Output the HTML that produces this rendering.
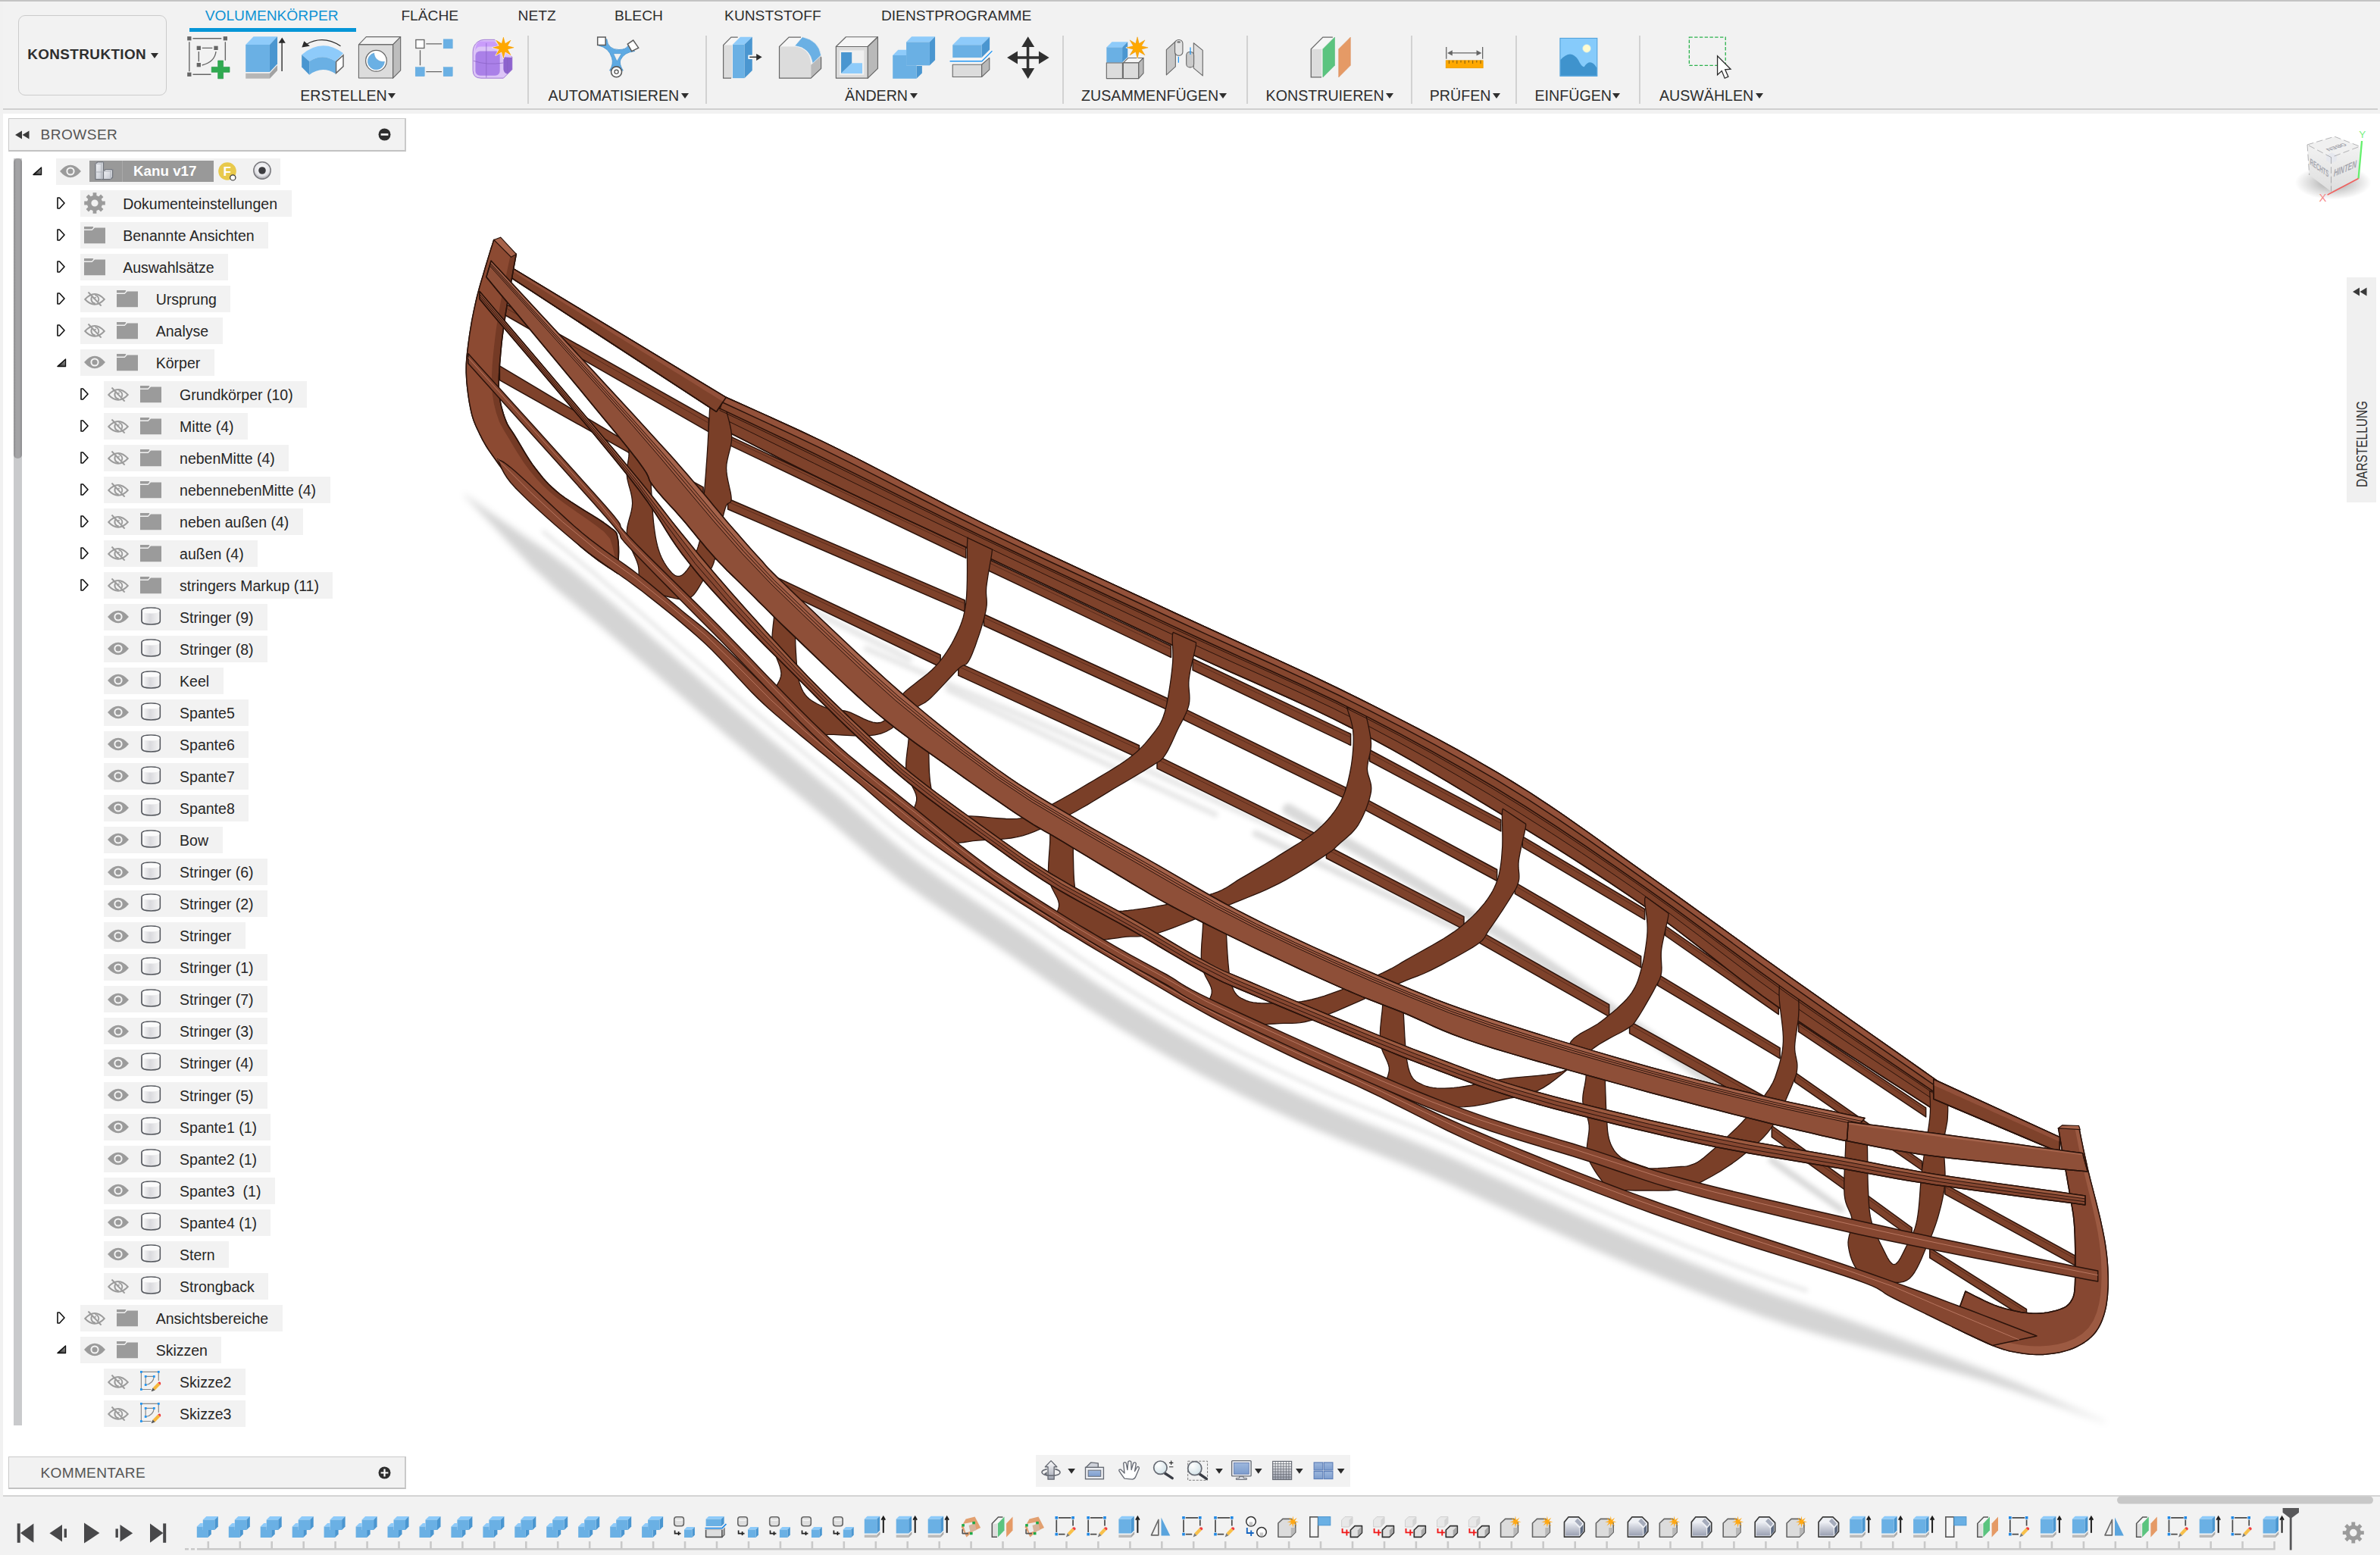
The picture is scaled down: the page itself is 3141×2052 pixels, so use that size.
<!DOCTYPE html><html lang="de"><head><meta charset="utf-8"><title>Kanu v17</title><style>

*{box-sizing:border-box;margin:0;padding:0}
html,body{width:3141px;height:2052px;overflow:hidden;background:#fff}
body{font-family:"Liberation Sans",Arial,sans-serif;font-size:19.1px;color:#2e2e2e;position:relative}
.abs{position:absolute}
svg{position:absolute;overflow:visible}
svg text{font-family:"Liberation Sans",Arial,sans-serif}
#tb{position:absolute;left:0;top:0;width:3141px;height:150px;background:#f2f2f2}
#tb .line{position:absolute;left:4px;right:3px;top:143px;height:2px;background:#cfcfcf}
#tb .topline{position:absolute;left:0;right:0;top:0;height:1.5px;background:#c4c4c4}
.tab{position:absolute;top:9px;height:24px;line-height:24px;font-size:19.2px;color:#2e2e2e;white-space:nowrap}
.grp{position:absolute;top:114px;height:24px;line-height:24px;font-size:19.65px;color:#2e2e2e;white-space:nowrap}
.dd{position:absolute;width:0;height:0;border-left:5px solid transparent;border-right:5px solid transparent;border-top:7px solid #2e2e2e}
.sep{position:absolute;top:47px;width:2px;height:90px;background:#d2d2d2}
.panelhdr{position:absolute;background:#f2f2f2;border:1px solid #c9c9c9;border-bottom:2px solid #c2c2c2;border-right:2px solid #c9c9c9;color:#555;font-size:19.1px}
.row{position:absolute;height:35px;background:#f2f2f2;white-space:nowrap}
.row .t{position:absolute;top:0;height:35px;line-height:36px;font-size:19.5px;color:#262626}
#tl{position:absolute;left:0;top:1974px;width:3141px;height:78px;background:#f2f2f2}

</style></head><body>
<svg id="canoe" style="left:0;top:0;width:3141px;height:2052px" viewBox="0 0 3141 2052"><defs><filter id="blur6" x="-5%" y="-5%" width="110%" height="110%"><feGaussianBlur stdDeviation="5"/></filter><filter id="blur3" x="-5%" y="-5%" width="110%" height="110%"><feGaussianBlur stdDeviation="3"/></filter></defs><g filter="url(#blur6)"><path d="M612.3,651.6 L646.8,676.0 L681.7,699.9 L716.9,723.6 L751.4,748.4 L784.3,775.5 L816.8,803.1 L849.1,831.0 L881.3,859.0 L913.5,887.0 L945.7,915.0 L978.0,942.8 L1010.6,970.3 L1043.5,997.6 L1076.4,1024.7 L1109.3,1051.8 L1141.6,1079.7 L1173.9,1107.6 L1207.2,1134.2 L1241.9,1159.1 L1277.3,1182.8 L1312.9,1206.3 L1348.4,1230.0 L1383.5,1254.2 L1418.6,1278.4 L1454.0,1302.2 L1490.0,1325.1 L1526.6,1347.1 L1563.6,1368.3 L1601.1,1388.7 L1639.0,1408.3 L1677.3,1427.0 L1716.0,1444.9 L1755.1,1462.2 L1794.5,1478.4 L1834.2,1494.0 L1873.9,1509.7 L1913.2,1526.3 L1952.1,1543.9 L1990.9,1561.5 L2029.7,1579.2 L2068.6,1596.8 L2107.6,1614.1 L2146.7,1631.0 L2186.1,1647.5 L2225.5,1663.7 L2265.2,1679.5 L2305.0,1694.8 L2345.1,1709.2 L2385.6,1722.8 L2425.8,1736.4 L2465.5,1750.7 L2505.2,1765.1 L2544.8,1779.8 L2584.3,1794.4 L2623.8,1809.6 L2662.9,1825.6 L2701.7,1842.5 L2740.4,1859.7 L2779.3,1876.6 L2778.7,1877.4 L2738.4,1862.7 L2697.7,1848.5 L2656.9,1834.6 L2615.9,1821.5 L2574.4,1809.4 L2532.9,1797.7 L2491.3,1786.1 L2449.7,1774.6 L2408.0,1763.3 L2366.9,1751.0 L2326.4,1737.5 L2286.3,1723.0 L2246.5,1707.7 L2206.8,1692.0 L2167.4,1675.8 L2128.0,1659.2 L2088.9,1642.3 L2049.9,1625.0 L2011.0,1607.4 L1972.2,1589.7 L1933.4,1572.1 L1894.5,1554.5 L1855.2,1537.9 L1815.5,1522.2 L1775.8,1506.7 L1736.4,1490.4 L1697.3,1473.2 L1658.6,1455.2 L1620.3,1436.5 L1582.4,1416.9 L1544.9,1396.5 L1507.9,1375.3 L1471.3,1353.3 L1435.3,1330.5 L1399.9,1306.7 L1364.8,1282.4 L1329.7,1258.2 L1294.2,1234.5 L1258.6,1211.1 L1223.2,1187.3 L1188.5,1162.5 L1155.2,1135.8 L1122.9,1107.9 L1090.6,1080.1 L1057.7,1052.9 L1024.8,1025.8 L991.9,998.5 L959.3,971.0 L927.0,943.2 L894.8,915.2 L862.6,887.2 L830.4,859.2 L798.1,831.3 L765.6,803.7 L732.7,776.6 L701.1,747.5 L671.2,715.9 L641.6,684.0 L611.7,652.4Z" fill="#000" fill-opacity=".17"/></g><g filter="url(#blur3)" fill="none" stroke="#000" stroke-linecap="round"><path d="M717.0,701.5 L750.0,728.5 L783.0,755.6 L815.5,783.2 L847.8,811.1 L879.9,839.1 L912.1,867.1 L944.3,895.1 L976.7,922.9 L1009.3,950.4 L1042.1,977.7 L1075.1,1004.8 L1107.9,1031.9 L1140.3,1059.8 L1172.5,1087.7 L1205.8,1114.3 L1240.5,1139.2 L1275.9,1162.9 L1311.6,1186.4 L1347.0,1210.1 L1382.2,1234.3 L1417.3,1258.5 L1452.7,1282.4 L1488.7,1305.2 L1525.3,1327.2 L1562.3,1348.4 L1599.8,1368.8 L1637.6,1388.4 L1676.0,1407.1 L1714.7,1425.0 L1753.7,1442.3 L1793.1,1458.5 L1832.9,1474.1 L1872.5,1489.8 L1911.8,1506.4 L1950.7,1524.0 L1989.6,1541.6 L2028.4,1559.3 L2067.2,1576.9 L2106.2,1594.2 L2145.4,1611.1 L2184.7,1627.6 L2224.2,1643.9 L2263.8,1659.6 L2303.7,1674.9 L2343.8,1689.3 L2384.2,1702.9" stroke-opacity=".12" stroke-width="4"/><path d="M1700.0,1068.0 L1723.2,1081.5 L1754.1,1099.1 L1791.0,1120.2 L1831.9,1143.7 L1875.0,1168.8 L1918.7,1194.6 L1960.9,1220.3 L2000.0,1245.0 L2038.7,1270.7 L2080.0,1299.1 L2122.2,1328.8 L2163.8,1358.6 L2202.9,1386.9 L2238.1,1412.5 L2267.7,1434.0 L2290.0,1450.0" stroke-opacity="0.15" stroke-width="15"/><path d="M1657.0,1100.0 L1674.2,1108.1 L1697.7,1119.1 L1725.7,1132.3 L1756.5,1146.8 L1788.3,1161.7 L1819.3,1176.3 L1847.8,1189.6 L1872.0,1201.0 L1893.0,1210.9 L1913.1,1220.3 L1932.0,1229.1 L1949.4,1237.3 L1965.2,1244.7 L1979.0,1251.2 L1990.7,1256.7 L2000.0,1261.0" stroke-opacity="0.12" stroke-width="9"/><path d="M1143.0,856.0 L1168.9,867.1 L1204.0,882.2 L1245.9,900.2 L1292.1,920.1 L1340.1,940.7 L1387.4,961.1 L1431.5,980.2 L1470.0,997.0 L1505.0,1012.4 L1539.7,1027.8 L1573.5,1042.9 L1605.4,1057.3 L1634.9,1070.6 L1660.9,1082.4 L1682.9,1092.3 L1700.0,1100.0" stroke-opacity="0.1" stroke-width="7"/><path d="M1251.0,910.0 L1265.4,916.8 L1284.6,925.8 L1307.6,936.6 L1333.0,948.6 L1359.7,961.2 L1386.6,973.8 L1412.4,986.0 L1436.0,997.0 L1459.0,1007.7 L1483.1,1019.0 L1507.6,1030.3 L1531.6,1041.4 L1554.1,1051.9 L1574.2,1061.2 L1591.2,1069.0 L1604.0,1075.0" stroke-opacity="0.1" stroke-width="7"/><path d="M2338.0,1531.0 L2430.0,1596.0" stroke-opacity="0.15" stroke-width="9"/><path d="M1060.0,800.0 L1200.0,870.0" stroke-opacity="0.1" stroke-width="7"/></g><path d="M963.2,575.6 L1274.8,721.4 L1274.8,736.4 L963.2,587.6Z" fill="#7e422b" stroke="#2b130b" stroke-width="1.5" stroke-linejoin="round"/><path d="M963.2,579.2 L971.2,583.0 L979.1,586.7 L987.1,590.5 L995.1,594.3 L1003.1,598.0 L1011.1,601.8 L1019.1,605.5 L1027.1,609.3 L1035.1,613.1 L1043.1,616.8 L1051.1,620.6 L1059.1,624.3 L1067.1,628.1 L1075.0,631.9 L1083.0,635.6 L1091.0,639.4 L1099.0,643.1 L1107.0,646.9 L1115.0,650.7 L1123.0,654.4 L1131.0,658.2 L1139.0,662.0 L1147.0,665.7 L1155.0,669.5 L1163.0,673.2 L1171.0,677.0 L1178.9,680.8 L1186.9,684.5 L1194.9,688.3 L1202.9,692.0 L1210.9,695.8 L1218.9,699.6 L1226.9,703.3 L1234.9,707.1 L1242.9,710.9 L1250.9,714.6 L1258.9,718.4 L1266.9,722.1 L1274.8,725.9" fill="none" stroke="#5a2c1c" stroke-width="1"/><path d="M1305.1,738.2 L1545.5,852.5 L1545.5,867.5 L1305.1,753.2Z" fill="#7e422b" stroke="#2b130b" stroke-width="1.5" stroke-linejoin="round"/><path d="M1305.1,742.7 L1311.3,745.6 L1317.4,748.6 L1323.6,751.5 L1329.8,754.4 L1335.9,757.4 L1342.1,760.3 L1348.3,763.2 L1354.4,766.2 L1360.6,769.1 L1366.8,772.0 L1372.9,775.0 L1379.1,777.9 L1385.2,780.8 L1391.4,783.8 L1397.6,786.7 L1403.7,789.6 L1409.9,792.5 L1416.1,795.5 L1422.2,798.4 L1428.4,801.3 L1434.6,804.3 L1440.7,807.2 L1446.9,810.1 L1453.1,813.1 L1459.2,816.0 L1465.4,818.9 L1471.6,821.9 L1477.7,824.8 L1483.9,827.7 L1490.0,830.7 L1496.2,833.6 L1502.4,836.5 L1508.5,839.4 L1514.7,842.4 L1520.9,845.3 L1527.0,848.2 L1533.2,851.2 L1539.4,854.1 L1545.5,857.0" fill="none" stroke="#5a2c1c" stroke-width="1"/><path d="M1574.1,869.3 L1782.6,968.5 L1782.6,983.5 L1574.1,884.3Z" fill="#7e422b" stroke="#2b130b" stroke-width="1.5" stroke-linejoin="round"/><path d="M1574.1,873.8 L1579.5,876.4 L1584.8,878.9 L1590.1,881.5 L1595.5,884.0 L1600.8,886.6 L1606.2,889.1 L1611.5,891.7 L1616.9,894.2 L1622.2,896.7 L1627.6,899.3 L1632.9,901.8 L1638.3,904.4 L1643.6,906.9 L1648.9,909.5 L1654.3,912.0 L1659.6,914.5 L1665.0,917.1 L1670.3,919.6 L1675.7,922.2 L1681.0,924.7 L1686.4,927.3 L1691.7,929.8 L1697.1,932.3 L1702.4,934.9 L1707.7,937.4 L1713.1,940.0 L1718.4,942.5 L1723.8,945.1 L1729.1,947.6 L1734.5,950.1 L1739.8,952.7 L1745.2,955.2 L1750.5,957.8 L1755.9,960.3 L1761.2,962.9 L1766.5,965.4 L1771.9,968.0 L1777.2,970.5 L1782.6,973.0" fill="none" stroke="#5a2c1c" stroke-width="1"/><path d="M1807.6,989.5 L1980.8,1081.9 L1980.8,1096.9 L1807.6,1004.5Z" fill="#7e422b" stroke="#2b130b" stroke-width="1.5" stroke-linejoin="round"/><path d="M1807.6,994.0 L1812.0,996.3 L1816.5,998.7 L1820.9,1001.1 L1825.4,1003.4 L1829.8,1005.8 L1834.2,1008.2 L1838.7,1010.6 L1843.1,1012.9 L1847.6,1015.3 L1852.0,1017.7 L1856.4,1020.0 L1860.9,1022.4 L1865.3,1024.8 L1869.8,1027.1 L1874.2,1029.5 L1878.6,1031.9 L1883.1,1034.3 L1887.5,1036.6 L1892.0,1039.0 L1896.4,1041.4 L1900.8,1043.7 L1905.3,1046.1 L1909.7,1048.5 L1914.2,1050.9 L1918.6,1053.2 L1923.0,1055.6 L1927.5,1058.0 L1931.9,1060.3 L1936.4,1062.7 L1940.8,1065.1 L1945.2,1067.5 L1949.7,1069.8 L1954.1,1072.2 L1958.6,1074.6 L1963.0,1076.9 L1967.4,1079.3 L1971.9,1081.7 L1976.3,1084.1 L1980.8,1086.4" fill="none" stroke="#5a2c1c" stroke-width="1"/><path d="M2009.3,1103.8 L2170.7,1199.6 L2170.7,1213.6 L2009.3,1117.8Z" fill="#7e422b" stroke="#2b130b" stroke-width="1.5" stroke-linejoin="round"/><path d="M2009.3,1108.0 L2013.5,1110.4 L2017.6,1112.9 L2021.8,1115.4 L2025.9,1117.8 L2030.0,1120.3 L2034.2,1122.7 L2038.3,1125.2 L2042.5,1127.6 L2046.6,1130.1 L2050.7,1132.6 L2054.9,1135.0 L2059.0,1137.5 L2063.1,1139.9 L2067.3,1142.4 L2071.4,1144.8 L2075.6,1147.3 L2079.7,1149.8 L2083.8,1152.2 L2088.0,1154.7 L2092.1,1157.1 L2096.3,1159.6 L2100.4,1162.0 L2104.5,1164.5 L2108.7,1167.0 L2112.8,1169.4 L2116.9,1171.9 L2121.1,1174.3 L2125.2,1176.8 L2129.4,1179.2 L2133.5,1181.7 L2137.6,1184.2 L2141.8,1186.6 L2145.9,1189.1 L2150.1,1191.5 L2154.2,1194.0 L2158.3,1196.4 L2162.5,1198.9 L2166.6,1201.4 L2170.7,1203.8" fill="none" stroke="#5a2c1c" stroke-width="1"/><path d="M2197.6,1221.5 L2347.3,1325.7 L2347.3,1338.7 L2197.6,1234.5Z" fill="#7e422b" stroke="#2b130b" stroke-width="1.5" stroke-linejoin="round"/><path d="M2197.6,1225.4 L2201.5,1228.0 L2205.3,1230.7 L2209.2,1233.4 L2213.0,1236.1 L2216.8,1238.7 L2220.7,1241.4 L2224.5,1244.1 L2228.3,1246.7 L2232.2,1249.4 L2236.0,1252.1 L2239.8,1254.8 L2243.7,1257.4 L2247.5,1260.1 L2251.4,1262.8 L2255.2,1265.5 L2259.0,1268.1 L2262.9,1270.8 L2266.7,1273.5 L2270.5,1276.1 L2274.4,1278.8 L2278.2,1281.5 L2282.1,1284.2 L2285.9,1286.8 L2289.7,1289.5 L2293.6,1292.2 L2297.4,1294.9 L2301.2,1297.5 L2305.1,1300.2 L2308.9,1302.9 L2312.7,1305.5 L2316.6,1308.2 L2320.4,1310.9 L2324.3,1313.6 L2328.1,1316.2 L2331.9,1318.9 L2335.8,1321.6 L2339.6,1324.3 L2343.4,1326.9 L2347.3,1329.6" fill="none" stroke="#5a2c1c" stroke-width="1"/><path d="M2373.6,1349.3 L2541.7,1461.9 L2541.7,1473.9 L2373.6,1361.3Z" fill="#7e422b" stroke="#2b130b" stroke-width="1.5" stroke-linejoin="round"/><path d="M2373.6,1352.9 L2377.9,1355.8 L2382.2,1358.7 L2386.5,1361.5 L2390.8,1364.4 L2395.2,1367.3 L2399.5,1370.2 L2403.8,1373.1 L2408.1,1376.0 L2412.4,1378.9 L2416.7,1381.8 L2421.0,1384.7 L2425.3,1387.5 L2429.6,1390.4 L2434.0,1393.3 L2438.3,1396.2 L2442.6,1399.1 L2446.9,1402.0 L2451.2,1404.9 L2455.5,1407.8 L2459.8,1410.6 L2464.1,1413.5 L2468.4,1416.4 L2472.8,1419.3 L2477.1,1422.2 L2481.4,1425.1 L2485.7,1428.0 L2490.0,1430.9 L2494.3,1433.8 L2498.6,1436.6 L2502.9,1439.5 L2507.2,1442.4 L2511.6,1445.3 L2515.9,1448.2 L2520.2,1451.1 L2524.5,1454.0 L2528.8,1456.9 L2533.1,1459.7 L2537.4,1462.6 L2541.7,1465.5" fill="none" stroke="#5a2c1c" stroke-width="1"/><path d="M960.6,658.0 L1273.2,792.0 L1273.2,807.0 L960.6,672.0Z" fill="#7e422b" stroke="#2b130b" stroke-width="1.5" stroke-linejoin="round"/><path d="M960.6,662.2 L968.7,665.7 L976.7,669.1 L984.7,672.6 L992.7,676.0 L1000.7,679.5 L1008.7,682.9 L1016.7,686.3 L1024.7,689.8 L1032.8,693.2 L1040.8,696.7 L1048.8,700.1 L1056.8,703.6 L1064.8,707.0 L1072.8,710.4 L1080.8,713.9 L1088.9,717.3 L1096.9,720.8 L1104.9,724.2 L1112.9,727.7 L1120.9,731.1 L1128.9,734.5 L1136.9,738.0 L1145.0,741.4 L1153.0,744.9 L1161.0,748.3 L1169.0,751.8 L1177.0,755.2 L1185.0,758.6 L1193.0,762.1 L1201.0,765.5 L1209.1,769.0 L1217.1,772.4 L1225.1,775.9 L1233.1,779.3 L1241.1,782.7 L1249.1,786.2 L1257.1,789.6 L1265.2,793.1 L1273.2,796.5" fill="none" stroke="#5a2c1c" stroke-width="1"/><path d="M1298.4,810.5 L1540.5,921.5 L1540.5,936.5 L1298.4,825.5Z" fill="#7e422b" stroke="#2b130b" stroke-width="1.5" stroke-linejoin="round"/><path d="M1298.4,815.0 L1304.6,817.8 L1310.8,820.7 L1317.0,823.5 L1323.2,826.4 L1329.4,829.2 L1335.6,832.1 L1341.8,834.9 L1348.0,837.8 L1354.3,840.6 L1360.5,843.5 L1366.7,846.3 L1372.9,849.1 L1379.1,852.0 L1385.3,854.8 L1391.5,857.7 L1397.7,860.5 L1403.9,863.4 L1410.1,866.2 L1416.3,869.1 L1422.5,871.9 L1428.7,874.8 L1435.0,877.6 L1441.2,880.4 L1447.4,883.3 L1453.6,886.1 L1459.8,889.0 L1466.0,891.8 L1472.2,894.7 L1478.4,897.5 L1484.6,900.4 L1490.8,903.2 L1497.0,906.0 L1503.2,908.9 L1509.4,911.7 L1515.7,914.6 L1521.9,917.4 L1528.1,920.3 L1534.3,923.1 L1540.5,926.0" fill="none" stroke="#5a2c1c" stroke-width="1"/><path d="M1562.3,934.9 L1775.9,1039.2 L1775.9,1054.2 L1562.3,949.9Z" fill="#7e422b" stroke="#2b130b" stroke-width="1.5" stroke-linejoin="round"/><path d="M1562.3,939.4 L1567.8,942.1 L1573.3,944.8 L1578.8,947.4 L1584.2,950.1 L1589.7,952.8 L1595.2,955.5 L1600.7,958.1 L1606.1,960.8 L1611.6,963.5 L1617.1,966.1 L1622.6,968.8 L1628.0,971.5 L1633.5,974.2 L1639.0,976.8 L1644.5,979.5 L1649.9,982.2 L1655.4,984.9 L1660.9,987.5 L1666.4,990.2 L1671.8,992.9 L1677.3,995.5 L1682.8,998.2 L1688.3,1000.9 L1693.7,1003.6 L1699.2,1006.2 L1704.7,1008.9 L1710.2,1011.6 L1715.6,1014.3 L1721.1,1016.9 L1726.6,1019.6 L1732.1,1022.3 L1737.5,1024.9 L1743.0,1027.6 L1748.5,1030.3 L1754.0,1033.0 L1759.4,1035.6 L1764.9,1038.3 L1770.4,1041.0 L1775.9,1043.7" fill="none" stroke="#5a2c1c" stroke-width="1"/><path d="M1797.5,1051.7 L1975.7,1147.5 L1975.7,1162.5 L1797.5,1066.7Z" fill="#7e422b" stroke="#2b130b" stroke-width="1.5" stroke-linejoin="round"/><path d="M1797.5,1056.2 L1802.1,1058.6 L1806.7,1061.1 L1811.2,1063.5 L1815.8,1066.0 L1820.4,1068.4 L1824.9,1070.9 L1829.5,1073.4 L1834.1,1075.8 L1838.6,1078.3 L1843.2,1080.7 L1847.8,1083.2 L1852.3,1085.6 L1856.9,1088.1 L1861.5,1090.6 L1866.1,1093.0 L1870.6,1095.5 L1875.2,1097.9 L1879.8,1100.4 L1884.3,1102.8 L1888.9,1105.3 L1893.5,1107.8 L1898.0,1110.2 L1902.6,1112.7 L1907.2,1115.1 L1911.7,1117.6 L1916.3,1120.0 L1920.9,1122.5 L1925.5,1125.0 L1930.0,1127.4 L1934.6,1129.9 L1939.2,1132.3 L1943.7,1134.8 L1948.3,1137.2 L1952.9,1139.7 L1957.4,1142.2 L1962.0,1144.6 L1966.6,1147.1 L1971.2,1149.5 L1975.7,1152.0" fill="none" stroke="#5a2c1c" stroke-width="1"/><path d="M1999.3,1164.3 L2165.7,1261.8 L2165.7,1276.8 L1999.3,1179.3Z" fill="#7e422b" stroke="#2b130b" stroke-width="1.5" stroke-linejoin="round"/><path d="M1999.3,1168.8 L2003.5,1171.3 L2007.8,1173.8 L2012.1,1176.3 L2016.3,1178.8 L2020.6,1181.3 L2024.9,1183.8 L2029.1,1186.3 L2033.4,1188.8 L2037.7,1191.3 L2041.9,1193.8 L2046.2,1196.3 L2050.5,1198.8 L2054.7,1201.3 L2059.0,1203.8 L2063.3,1206.3 L2067.5,1208.8 L2071.8,1211.3 L2076.1,1213.8 L2080.3,1216.3 L2084.6,1218.8 L2088.9,1221.3 L2093.2,1223.8 L2097.4,1226.3 L2101.7,1228.8 L2106.0,1231.3 L2110.2,1233.8 L2114.5,1236.3 L2118.8,1238.8 L2123.0,1241.3 L2127.3,1243.8 L2131.6,1246.3 L2135.8,1248.8 L2140.1,1251.3 L2144.4,1253.8 L2148.6,1256.3 L2152.9,1258.8 L2157.2,1261.3 L2161.4,1263.8 L2165.7,1266.3" fill="none" stroke="#5a2c1c" stroke-width="1"/><path d="M2187.6,1285.4 L2349.1,1382.9 L2349.1,1396.9 L2187.6,1300.4Z" fill="#7e422b" stroke="#2b130b" stroke-width="1.5" stroke-linejoin="round"/><path d="M2187.6,1289.9 L2191.7,1292.3 L2195.8,1294.8 L2200.0,1297.3 L2204.1,1299.8 L2208.3,1302.3 L2212.4,1304.8 L2216.5,1307.3 L2220.7,1309.8 L2224.8,1312.3 L2229.0,1314.8 L2233.1,1317.3 L2237.3,1319.8 L2241.4,1322.3 L2245.5,1324.8 L2249.7,1327.3 L2253.8,1329.8 L2258.0,1332.2 L2262.1,1334.7 L2266.2,1337.2 L2270.4,1339.7 L2274.5,1342.2 L2278.7,1344.7 L2282.8,1347.2 L2286.9,1349.7 L2291.1,1352.2 L2295.2,1354.7 L2299.4,1357.2 L2303.5,1359.7 L2307.6,1362.2 L2311.8,1364.7 L2315.9,1367.2 L2320.1,1369.6 L2324.2,1372.1 L2328.4,1374.6 L2332.5,1377.1 L2336.6,1379.6 L2340.8,1382.1 L2344.9,1384.6 L2349.1,1387.1" fill="none" stroke="#5a2c1c" stroke-width="1"/><path d="M2368.6,1414.8 L2536.7,1532.5 L2536.7,1544.5 L2368.6,1427.8Z" fill="#7e422b" stroke="#2b130b" stroke-width="1.5" stroke-linejoin="round"/><path d="M2368.6,1418.7 L2372.9,1421.8 L2377.2,1424.8 L2381.5,1427.8 L2385.8,1430.8 L2390.1,1433.8 L2394.4,1436.8 L2398.7,1439.8 L2403.0,1442.8 L2407.4,1445.8 L2411.7,1448.8 L2416.0,1451.9 L2420.3,1454.9 L2424.6,1457.9 L2428.9,1460.9 L2433.2,1463.9 L2437.5,1466.9 L2441.8,1469.9 L2446.2,1472.9 L2450.5,1475.9 L2454.8,1478.9 L2459.1,1482.0 L2463.4,1485.0 L2467.7,1488.0 L2472.0,1491.0 L2476.3,1494.0 L2480.6,1497.0 L2485.0,1500.0 L2489.3,1503.0 L2493.6,1506.0 L2497.9,1509.0 L2502.2,1512.1 L2506.5,1515.1 L2510.8,1518.1 L2515.1,1521.1 L2519.4,1524.1 L2523.8,1527.1 L2528.1,1530.1 L2532.4,1533.1 L2536.7,1536.1" fill="none" stroke="#5a2c1c" stroke-width="1"/><path d="M2566.9,1562.8 L2738.4,1656.9 L2738.4,1669.9 L2566.9,1575.8Z" fill="#7e422b" stroke="#2b130b" stroke-width="1.5" stroke-linejoin="round"/><path d="M2566.9,1566.7 L2571.3,1569.1 L2575.7,1571.5 L2580.1,1573.9 L2584.5,1576.4 L2588.9,1578.8 L2593.3,1581.2 L2597.7,1583.6 L2602.1,1586.0 L2606.5,1588.4 L2610.9,1590.8 L2615.3,1593.3 L2619.7,1595.7 L2624.1,1598.1 L2628.5,1600.5 L2632.9,1602.9 L2637.3,1605.3 L2641.7,1607.7 L2646.1,1610.2 L2650.5,1612.6 L2654.9,1615.0 L2659.3,1617.4 L2663.7,1619.8 L2668.1,1622.2 L2672.5,1624.6 L2676.9,1627.0 L2681.3,1629.5 L2685.7,1631.9 L2690.1,1634.3 L2694.5,1636.7 L2698.9,1639.1 L2703.3,1641.5 L2707.7,1643.9 L2712.1,1646.4 L2716.4,1648.8 L2720.8,1651.2 L2725.2,1653.6 L2729.6,1656.0 L2734.0,1658.4 L2738.4,1660.8" fill="none" stroke="#5a2c1c" stroke-width="1"/><path d="M945.0,724.0 L1241.2,864.3 L1241.2,880.3 L945.0,738.0Z" fill="#7e422b" stroke="#2b130b" stroke-width="1.5" stroke-linejoin="round"/><path d="M945.0,728.2 L952.6,731.8 L960.2,735.4 L967.8,739.0 L975.4,742.7 L983.0,746.3 L990.6,749.9 L998.2,753.5 L1005.8,757.1 L1013.4,760.7 L1021.0,764.3 L1028.6,767.9 L1036.1,771.6 L1043.7,775.2 L1051.3,778.8 L1058.9,782.4 L1066.5,786.0 L1074.1,789.6 L1081.7,793.2 L1089.3,796.8 L1096.9,800.5 L1104.5,804.1 L1112.1,807.7 L1119.7,811.3 L1127.3,814.9 L1134.9,818.5 L1142.5,822.1 L1150.1,825.7 L1157.7,829.4 L1165.3,833.0 L1172.9,836.6 L1180.5,840.2 L1188.1,843.8 L1195.7,847.4 L1203.2,851.0 L1210.8,854.7 L1218.4,858.3 L1226.0,861.9 L1233.6,865.5 L1241.2,869.1" fill="none" stroke="#5a2c1c" stroke-width="1"/><path d="M1264.8,874.4 L1503.5,983.7 L1503.5,1000.7 L1264.8,891.4Z" fill="#7e422b" stroke="#2b130b" stroke-width="1.5" stroke-linejoin="round"/><path d="M1264.8,879.5 L1270.9,882.3 L1277.0,885.1 L1283.1,887.9 L1289.2,890.7 L1295.4,893.5 L1301.5,896.3 L1307.6,899.1 L1313.7,901.9 L1319.9,904.7 L1326.0,907.5 L1332.1,910.3 L1338.2,913.1 L1344.3,915.9 L1350.5,918.7 L1356.6,921.5 L1362.7,924.3 L1368.8,927.1 L1374.9,929.9 L1381.1,932.7 L1387.2,935.5 L1393.3,938.3 L1399.4,941.1 L1405.6,943.9 L1411.7,946.7 L1417.8,949.5 L1423.9,952.3 L1430.0,955.1 L1436.2,957.9 L1442.3,960.8 L1448.4,963.6 L1454.5,966.4 L1460.6,969.2 L1466.8,972.0 L1472.9,974.8 L1479.0,977.6 L1485.1,980.4 L1491.3,983.2 L1497.4,986.0 L1503.5,988.8" fill="none" stroke="#5a2c1c" stroke-width="1"/><path d="M1527.0,997.1 L1733.6,1098.7 L1733.6,1115.7 L1527.0,1014.1Z" fill="#7e422b" stroke="#2b130b" stroke-width="1.5" stroke-linejoin="round"/><path d="M1527.0,1002.2 L1532.3,1004.8 L1537.6,1007.4 L1542.9,1010.0 L1548.2,1012.6 L1553.5,1015.2 L1558.8,1017.9 L1564.1,1020.5 L1569.4,1023.1 L1574.7,1025.7 L1580.0,1028.3 L1585.3,1030.9 L1590.6,1033.5 L1595.9,1036.1 L1601.2,1038.7 L1606.5,1041.3 L1611.8,1043.9 L1617.1,1046.5 L1622.4,1049.1 L1627.7,1051.7 L1633.0,1054.3 L1638.3,1056.9 L1643.6,1059.5 L1648.9,1062.1 L1654.2,1064.8 L1659.5,1067.4 L1664.8,1070.0 L1670.1,1072.6 L1675.4,1075.2 L1680.7,1077.8 L1686.0,1080.4 L1691.2,1083.0 L1696.5,1085.6 L1701.8,1088.2 L1707.1,1090.8 L1712.4,1093.4 L1717.7,1096.0 L1723.0,1098.6 L1728.3,1101.2 L1733.6,1103.8" fill="none" stroke="#5a2c1c" stroke-width="1"/><path d="M1750.4,1115.5 L1932.0,1209.7 L1932.0,1226.7 L1750.4,1132.5Z" fill="#7e422b" stroke="#2b130b" stroke-width="1.5" stroke-linejoin="round"/><path d="M1750.4,1120.6 L1755.1,1123.1 L1759.7,1125.5 L1764.4,1127.9 L1769.1,1130.3 L1773.7,1132.7 L1778.4,1135.1 L1783.0,1137.5 L1787.7,1140.0 L1792.3,1142.4 L1797.0,1144.8 L1801.7,1147.2 L1806.3,1149.6 L1811.0,1152.0 L1815.6,1154.4 L1820.3,1156.9 L1824.9,1159.3 L1829.6,1161.7 L1834.2,1164.1 L1838.9,1166.5 L1843.6,1168.9 L1848.2,1171.3 L1852.9,1173.8 L1857.5,1176.2 L1862.2,1178.6 L1866.8,1181.0 L1871.5,1183.4 L1876.1,1185.8 L1880.8,1188.2 L1885.5,1190.7 L1890.1,1193.1 L1894.8,1195.5 L1899.4,1197.9 L1904.1,1200.3 L1908.7,1202.7 L1913.4,1205.1 L1918.0,1207.6 L1922.7,1210.0 L1927.4,1212.4 L1932.0,1214.8" fill="none" stroke="#5a2c1c" stroke-width="1"/><path d="M1952.2,1228.2 L2123.7,1325.7 L2123.7,1341.7 L1952.2,1244.2Z" fill="#7e422b" stroke="#2b130b" stroke-width="1.5" stroke-linejoin="round"/><path d="M1952.2,1233.0 L1956.6,1235.5 L1961.0,1238.0 L1965.4,1240.5 L1969.8,1243.0 L1974.2,1245.5 L1978.6,1248.0 L1983.0,1250.5 L1987.4,1253.0 L1991.8,1255.5 L1996.2,1258.0 L2000.6,1260.5 L2005.0,1263.0 L2009.3,1265.5 L2013.7,1268.0 L2018.1,1270.5 L2022.5,1273.0 L2026.9,1275.5 L2031.3,1278.0 L2035.7,1280.5 L2040.1,1283.0 L2044.5,1285.5 L2048.9,1288.0 L2053.3,1290.5 L2057.7,1293.0 L2062.1,1295.5 L2066.5,1298.0 L2070.9,1300.5 L2075.3,1303.0 L2079.7,1305.5 L2084.1,1308.0 L2088.5,1310.5 L2092.9,1313.0 L2097.3,1315.5 L2101.7,1318.0 L2106.1,1320.5 L2110.5,1323.0 L2114.9,1325.5 L2119.3,1328.0 L2123.7,1330.5" fill="none" stroke="#5a2c1c" stroke-width="1"/><path d="M2150.6,1347.6 L2331.6,1448.5 L2331.6,1464.5 L2150.6,1363.6Z" fill="#7e422b" stroke="#2b130b" stroke-width="1.5" stroke-linejoin="round"/><path d="M2150.6,1352.4 L2155.2,1354.9 L2159.9,1357.5 L2164.5,1360.1 L2169.1,1362.7 L2173.8,1365.3 L2178.4,1367.9 L2183.1,1370.5 L2187.7,1373.1 L2192.3,1375.6 L2197.0,1378.2 L2201.6,1380.8 L2206.3,1383.4 L2210.9,1386.0 L2215.5,1388.6 L2220.2,1391.2 L2224.8,1393.8 L2229.5,1396.3 L2234.1,1398.9 L2238.8,1401.5 L2243.4,1404.1 L2248.0,1406.7 L2252.7,1409.3 L2257.3,1411.9 L2262.0,1414.5 L2266.6,1417.0 L2271.2,1419.6 L2275.9,1422.2 L2280.5,1424.8 L2285.2,1427.4 L2289.8,1430.0 L2294.4,1432.6 L2299.1,1435.2 L2303.7,1437.7 L2308.4,1440.3 L2313.0,1442.9 L2317.7,1445.5 L2322.3,1448.1 L2326.9,1450.7 L2331.6,1453.3" fill="none" stroke="#5a2c1c" stroke-width="1"/><path d="M2338.3,1485.5 L2523.2,1620.0 L2523.2,1634.0 L2338.3,1500.5Z" fill="#7e422b" stroke="#2b130b" stroke-width="1.5" stroke-linejoin="round"/><path d="M2338.3,1490.0 L2343.0,1493.4 L2347.8,1496.8 L2352.5,1500.3 L2357.3,1503.7 L2362.0,1507.2 L2366.8,1510.6 L2371.5,1514.0 L2376.2,1517.5 L2381.0,1520.9 L2385.7,1524.4 L2390.5,1527.8 L2395.2,1531.3 L2399.9,1534.7 L2404.7,1538.1 L2409.4,1541.6 L2414.2,1545.0 L2418.9,1548.5 L2423.7,1551.9 L2428.4,1555.3 L2433.1,1558.8 L2437.9,1562.2 L2442.6,1565.7 L2447.4,1569.1 L2452.1,1572.5 L2456.8,1576.0 L2461.6,1579.4 L2466.3,1582.9 L2471.1,1586.3 L2475.8,1589.7 L2480.6,1593.2 L2485.3,1596.6 L2490.0,1600.1 L2494.8,1603.5 L2499.5,1607.0 L2504.3,1610.4 L2509.0,1613.8 L2513.8,1617.3 L2518.5,1620.7 L2523.2,1624.2" fill="none" stroke="#5a2c1c" stroke-width="1"/><path d="M2546.8,1646.9 L2674.5,1727.6 L2674.5,1740.6 L2546.8,1659.9Z" fill="#7e422b" stroke="#2b130b" stroke-width="1.5" stroke-linejoin="round"/><path d="M2546.8,1650.8 L2550.0,1652.8 L2553.3,1654.9 L2556.6,1657.0 L2559.9,1659.0 L2563.2,1661.1 L2566.4,1663.2 L2569.7,1665.2 L2573.0,1667.3 L2576.3,1669.4 L2579.5,1671.5 L2582.8,1673.5 L2586.1,1675.6 L2589.4,1677.7 L2592.6,1679.7 L2595.9,1681.8 L2599.2,1683.9 L2602.5,1685.9 L2605.7,1688.0 L2609.0,1690.1 L2612.3,1692.1 L2615.6,1694.2 L2618.8,1696.3 L2622.1,1698.4 L2625.4,1700.4 L2628.7,1702.5 L2632.0,1704.6 L2635.2,1706.6 L2638.5,1708.7 L2641.8,1710.8 L2645.1,1712.8 L2648.3,1714.9 L2651.6,1717.0 L2654.9,1719.0 L2658.2,1721.1 L2661.4,1723.2 L2664.7,1725.3 L2668.0,1727.3 L2671.3,1729.4 L2674.5,1731.5" fill="none" stroke="#5a2c1c" stroke-width="1"/><path d="M667.0,400.9 L935.4,552.2 L935.4,569.8 L667.0,416.0Z" fill="#7e422b" stroke="#2b130b" stroke-width="1.5" stroke-linejoin="round"/><path d="M667.0,406.2 L673.9,410.1 L680.7,414.0 L687.6,417.9 L694.5,421.8 L701.4,425.7 L708.3,429.6 L715.2,433.5 L722.0,437.4 L728.9,441.3 L735.8,445.2 L742.7,449.1 L749.6,453.0 L756.5,456.9 L763.3,460.8 L770.2,464.7 L777.1,468.6 L784.0,472.5 L790.9,476.4 L797.8,480.3 L804.6,484.2 L811.5,488.1 L818.4,492.0 L825.3,495.9 L832.2,499.8 L839.1,503.7 L845.9,507.6 L852.8,511.5 L859.7,515.4 L866.6,519.3 L873.5,523.2 L880.4,527.1 L887.2,531.0 L894.1,534.9 L901.0,538.8 L907.9,542.7 L914.8,546.6 L921.7,550.5 L928.5,554.4 L935.4,558.3" fill="none" stroke="#5a2c1c" stroke-width="1"/><path d="M659.4,482.8 L828.3,583.7 L876.5,615.1 L928.1,642.9 L928.1,656.7 L876.5,629.0 L828.3,596.3 L659.4,501.7Z" fill="#7e422b" stroke="#2b130b" stroke-width="1.5" stroke-linejoin="round"/><path d="M677.1,354.3 L958.1,524.4 L945.5,543.3 L675.3,366.9Z" fill="#7e422b" stroke="#2b130b" stroke-width="1.5" stroke-linejoin="round"/><path d="M677.1,354.3 L684.3,358.6 L691.5,363.0 L698.7,367.4 L705.9,371.7 L713.1,376.1 L720.3,380.5 L727.5,384.8 L734.7,389.2 L741.9,393.5 L749.1,397.9 L756.3,402.3 L763.5,406.6 L770.7,411.0 L777.9,415.4 L785.2,419.7 L792.4,424.1 L799.6,428.4 L806.8,432.8 L814.0,437.2 L821.2,441.5 L828.4,445.9 L835.6,450.3 L842.8,454.6 L850.0,459.0 L857.2,463.4 L864.4,467.7 L871.6,472.1 L878.8,476.4 L886.1,480.8 L893.3,485.2 L900.5,489.5 L907.7,493.9 L914.9,498.3 L922.1,502.6 L929.3,507.0 L936.5,511.3 L943.7,515.7 L950.9,520.1 L958.1,524.4 L954.3,530.1 L947.2,525.7 L940.1,521.3 L933.0,516.9 L925.8,512.5 L918.7,508.0 L911.6,503.6 L904.5,499.2 L897.4,494.8 L890.2,490.4 L883.1,486.0 L876.0,481.6 L868.9,477.2 L861.7,472.8 L854.6,468.3 L847.5,463.9 L840.4,459.5 L833.2,455.1 L826.1,450.7 L819.0,446.3 L811.9,441.9 L804.7,437.5 L797.6,433.1 L790.5,428.6 L783.4,424.2 L776.3,419.8 L769.1,415.4 L762.0,411.0 L754.9,406.6 L747.8,402.2 L740.6,397.8 L733.5,393.4 L726.4,388.9 L719.3,384.5 L712.1,380.1 L705.0,375.7 L697.9,371.3 L690.8,366.9 L683.6,362.5 L676.5,358.1Z" fill="#92503a"/><path d="M677.1,354.3 L958.1,524.4 L945.5,543.3 L675.3,366.9Z" fill="none" stroke="#2b130b" stroke-width="1.5" stroke-linejoin="round"/><path d="M955.6,523.2 L966.3,528.0 L980.2,534.2 L996.7,541.6 L1015.2,549.9 L1035.3,559.1 L1056.5,568.8 L1078.2,579.1 L1100.0,589.6 L1122.1,600.6 L1145.2,612.5 L1169.2,625.0 L1194.1,638.0 L1219.9,651.4 L1246.4,665.1 L1273.7,679.0 L1301.7,692.8 L1331.0,706.9 L1361.6,721.4 L1393.2,736.2 L1425.5,751.2 L1458.1,766.2 L1490.7,781.2 L1522.7,796.0 L1553.9,810.5 L1584.7,824.7 L1615.4,838.7 L1646.0,852.6 L1676.4,866.5 L1706.3,880.2 L1735.8,893.9 L1764.6,907.7 L1792.7,921.5 L1819.9,935.1 L1846.4,948.6 L1872.3,962.0 L1897.6,975.4 L1922.6,989.0 L1947.2,1002.8 L1971.6,1016.9 L1995.9,1031.5 L2019.9,1046.6 L2043.6,1062.2 L2066.9,1078.1 L2089.9,1094.3 L2112.8,1110.6 L2135.5,1126.9 L2158.2,1143.2 L2180.8,1159.3 L2203.3,1175.1 L2225.3,1190.8 L2247.1,1206.5 L2268.8,1222.2 L2290.7,1238.0 L2312.9,1254.0 L2335.6,1270.3 L2359.0,1287.0 L2384.6,1305.2 L2412.8,1325.1 L2442.2,1345.8 L2471.6,1366.5 L2499.6,1386.2 L2524.9,1403.9 L2546.1,1418.8 L2561.9,1430.0 L2548.5,1461.9 L2532.9,1451.8 L2512.1,1438.4 L2487.3,1422.5 L2459.8,1404.7 L2431.0,1385.9 L2402.0,1366.8 L2374.2,1348.2 L2349.0,1330.7 L2325.7,1314.0 L2303.1,1297.0 L2281.0,1280.0 L2259.2,1262.9 L2237.4,1245.8 L2215.5,1229.0 L2193.4,1212.4 L2170.7,1196.2 L2147.7,1180.4 L2124.6,1164.9 L2101.2,1149.5 L2077.7,1134.4 L2054.1,1119.4 L2030.3,1104.6 L2006.4,1089.9 L1982.4,1075.2 L1958.5,1060.6 L1934.5,1046.1 L1910.5,1031.6 L1886.3,1017.4 L1861.9,1003.2 L1837.1,989.2 L1811.8,975.4 L1785.9,961.8 L1759.7,948.6 L1733.2,935.9 L1706.4,923.5 L1679.1,911.2 L1651.3,898.8 L1622.9,886.2 L1593.9,873.1 L1564.0,859.3 L1532.8,844.6 L1499.9,829.0 L1466.0,812.9 L1431.6,796.6 L1397.4,780.3 L1364.0,764.4 L1331.9,749.1 L1301.7,734.8 L1273.3,721.5 L1246.0,708.7 L1219.7,696.4 L1194.3,684.6 L1169.7,673.1 L1145.9,661.9 L1122.7,650.9 L1100.0,640.0 L1077.2,628.9 L1053.9,617.3 L1030.9,605.8 L1008.9,594.6 L988.4,584.1 L970.2,574.8 L954.8,567.0 L943.0,561.0Z" fill="#7e422b" stroke="#2b130b" stroke-width="1.5" stroke-linejoin="round"/><path d="M955.6,523.2 L998.9,542.6 L1042.1,562.2 L1085.1,582.4 L1127.6,603.4 L1169.7,625.2 L1211.8,647.2 L1254.0,669.0 L1296.4,690.2 L1339.1,710.8 L1382.1,731.0 L1425.1,751.0 L1468.2,770.9 L1511.3,790.7 L1554.3,810.7 L1597.4,830.5 L1640.6,850.2 L1683.8,869.9 L1726.9,889.8 L1769.7,910.2 L1812.2,931.3 L1854.5,952.8 L1896.5,974.8 L1938.1,997.7 L1979.2,1021.4 L2019.6,1046.4 L2059.0,1072.7 L2097.9,1099.9 L2136.5,1127.6 L2175.1,1155.2 L2213.8,1182.6 L2252.3,1210.3 L2290.8,1238.1 L2329.3,1265.8 L2367.9,1293.3 L2406.7,1320.7 L2445.5,1348.1 L2484.3,1375.4 L2523.1,1402.7 L2561.9,1430.0 L2559.2,1436.4 L2520.2,1409.4 L2481.2,1382.4 L2442.2,1355.4 L2403.3,1328.3 L2364.5,1301.1 L2325.9,1273.4 L2287.6,1245.5 L2249.4,1217.4 L2211.0,1189.6 L2172.3,1162.1 L2133.6,1134.7 L2094.8,1107.4 L2055.7,1080.6 L2016.1,1054.6 L1975.7,1029.7 L1934.8,1005.8 L1893.3,982.7 L1851.5,960.4 L1809.3,938.6 L1766.9,917.5 L1724.0,897.1 L1681.0,877.3 L1637.8,857.7 L1594.6,838.1 L1551.5,818.2 L1508.5,798.2 L1465.5,778.2 L1422.5,758.2 L1379.5,738.2 L1336.6,717.9 L1293.9,697.4 L1251.3,676.4 L1209.0,655.0 L1166.8,633.4 L1124.5,611.9 L1082.0,590.9 L1039.2,570.6 L996.1,550.6 L953.1,530.7Z" fill="#93513a"/><path d="M950.3,539.1 L993.1,559.4 L1035.9,579.7 L1078.6,600.3 L1121.1,621.3 L1163.5,642.4 L1205.9,663.6 L1248.4,684.6 L1291.1,705.4 L1333.8,725.8 L1376.7,746.1 L1419.6,766.2 L1462.5,786.3 L1505.5,806.3 L1548.4,826.4 L1591.5,846.3 L1634.6,865.9 L1677.8,885.5 L1720.9,905.2 L1763.8,925.5 L1806.1,946.7 L1848.2,968.7 L1889.8,991.3 L1931.1,1014.7 L1971.9,1038.7 L2012.3,1063.6 L2052.1,1089.3 L2091.4,1115.7 L2130.5,1142.6 L2169.3,1169.7 L2207.9,1197.2 L2246.1,1225.3 L2284.1,1253.6 L2322.2,1281.8 L2360.7,1309.5 L2399.6,1336.6 L2438.6,1363.5 L2477.8,1390.2 L2517.0,1416.8 L2556.3,1443.4 L2552.8,1451.7 L2513.3,1425.5 L2473.8,1399.3 L2434.4,1373.0 L2395.2,1346.5 L2356.2,1319.6 L2317.8,1291.8 L2280.0,1263.3 L2242.3,1234.6 L2204.3,1206.2 L2165.8,1178.7 L2126.7,1151.9 L2087.4,1125.5 L2047.8,1099.6 L2007.8,1074.2 L1967.4,1049.4 L1926.7,1025.2 L1885.7,1001.5 L1844.2,978.5 L1802.4,956.3 L1760.1,935.0 L1717.2,914.7 L1674.1,895.1 L1630.9,875.7 L1587.8,856.1 L1544.8,836.1 L1501.9,816.0 L1459.1,795.8 L1416.2,775.6 L1373.4,755.4 L1330.5,735.1 L1287.8,714.8 L1245.0,694.3 L1202.3,673.8 L1159.7,653.1 L1117.2,632.3 L1074.6,611.5 L1032.1,590.6 L989.6,569.7 L947.0,548.9Z" fill="#7a3f28"/><path d="M955.6,523.2 L966.3,528.0 L980.2,534.2 L996.7,541.6 L1015.2,549.9 L1035.3,559.1 L1056.5,568.8 L1078.2,579.1 L1100.0,589.6 L1122.1,600.6 L1145.2,612.5 L1169.2,625.0 L1194.1,638.0 L1219.9,651.4 L1246.4,665.1 L1273.7,679.0 L1301.7,692.8 L1331.0,706.9 L1361.6,721.4 L1393.2,736.2 L1425.5,751.2 L1458.1,766.2 L1490.7,781.2 L1522.7,796.0 L1553.9,810.5 L1584.7,824.7 L1615.4,838.7 L1646.0,852.6 L1676.4,866.5 L1706.3,880.2 L1735.8,893.9 L1764.6,907.7 L1792.7,921.5 L1819.9,935.1 L1846.4,948.6 L1872.3,962.0 L1897.6,975.4 L1922.6,989.0 L1947.2,1002.8 L1971.6,1016.9 L1995.9,1031.5 L2019.9,1046.6 L2043.6,1062.2 L2066.9,1078.1 L2089.9,1094.3 L2112.8,1110.6 L2135.5,1126.9 L2158.2,1143.2 L2180.8,1159.3 L2203.3,1175.1 L2225.3,1190.8 L2247.1,1206.5 L2268.8,1222.2 L2290.7,1238.0 L2312.9,1254.0 L2335.6,1270.3 L2359.0,1287.0 L2384.6,1305.2 L2412.8,1325.1 L2442.2,1345.8 L2471.6,1366.5 L2499.6,1386.2 L2524.9,1403.9 L2546.1,1418.8 L2561.9,1430.0 L2548.5,1461.9 L2532.9,1451.8 L2512.1,1438.4 L2487.3,1422.5 L2459.8,1404.7 L2431.0,1385.9 L2402.0,1366.8 L2374.2,1348.2 L2349.0,1330.7 L2325.7,1314.0 L2303.1,1297.0 L2281.0,1280.0 L2259.2,1262.9 L2237.4,1245.8 L2215.5,1229.0 L2193.4,1212.4 L2170.7,1196.2 L2147.7,1180.4 L2124.6,1164.9 L2101.2,1149.5 L2077.7,1134.4 L2054.1,1119.4 L2030.3,1104.6 L2006.4,1089.9 L1982.4,1075.2 L1958.5,1060.6 L1934.5,1046.1 L1910.5,1031.6 L1886.3,1017.4 L1861.9,1003.2 L1837.1,989.2 L1811.8,975.4 L1785.9,961.8 L1759.7,948.6 L1733.2,935.9 L1706.4,923.5 L1679.1,911.2 L1651.3,898.8 L1622.9,886.2 L1593.9,873.1 L1564.0,859.3 L1532.8,844.6 L1499.9,829.0 L1466.0,812.9 L1431.6,796.6 L1397.4,780.3 L1364.0,764.4 L1331.9,749.1 L1301.7,734.8 L1273.3,721.5 L1246.0,708.7 L1219.7,696.4 L1194.3,684.6 L1169.7,673.1 L1145.9,661.9 L1122.7,650.9 L1100.0,640.0 L1077.2,628.9 L1053.9,617.3 L1030.9,605.8 L1008.9,594.6 L988.4,584.1 L970.2,574.8 L954.8,567.0 L943.0,561.0Z" fill="none" stroke="#2b130b" stroke-width="1.5" stroke-linejoin="round"/><path d="M953.1,530.7 L996.1,550.6 L1039.2,570.6 L1082.0,590.9 L1124.5,611.9 L1166.8,633.4 L1209.0,655.0 L1251.3,676.4 L1293.9,697.4 L1336.6,717.9 L1379.5,738.2 L1422.5,758.2 L1465.5,778.2 L1508.5,798.2 L1551.5,818.2 L1594.6,838.1 L1637.8,857.7 L1681.0,877.3 L1724.0,897.1 L1766.9,917.5 L1809.3,938.6 L1851.5,960.4 L1893.3,982.7 L1934.8,1005.8 L1975.7,1029.7 L2016.1,1054.6 L2055.7,1080.6 L2094.8,1107.4 L2133.6,1134.7 L2172.3,1162.1 L2211.0,1189.6 L2249.4,1217.4 L2287.6,1245.5 L2325.9,1273.4 L2364.5,1301.1 L2403.3,1328.3 L2442.2,1355.4 L2481.2,1382.4 L2520.2,1409.4 L2559.2,1436.4" fill="none" stroke="#2b130b" stroke-width="1"/><path d="M950.3,539.1 L993.1,559.4 L1035.9,579.7 L1078.6,600.3 L1121.1,621.3 L1163.5,642.4 L1205.9,663.6 L1248.4,684.6 L1291.1,705.4 L1333.8,725.8 L1376.7,746.1 L1419.6,766.2 L1462.5,786.3 L1505.5,806.3 L1548.4,826.4 L1591.5,846.3 L1634.6,865.9 L1677.8,885.5 L1720.9,905.2 L1763.8,925.5 L1806.1,946.7 L1848.2,968.7 L1889.8,991.3 L1931.1,1014.7 L1971.9,1038.7 L2012.3,1063.6 L2052.1,1089.3 L2091.4,1115.7 L2130.5,1142.6 L2169.3,1169.7 L2207.9,1197.2 L2246.1,1225.3 L2284.1,1253.6 L2322.2,1281.8 L2360.7,1309.5 L2399.6,1336.6 L2438.6,1363.5 L2477.8,1390.2 L2517.0,1416.8 L2556.3,1443.4" fill="none" stroke="#2b130b" stroke-width="1"/><path d="M947.0,548.9 L989.6,569.7 L1032.1,590.6 L1074.6,611.5 L1117.2,632.3 L1159.7,653.1 L1202.3,673.8 L1245.0,694.3 L1287.8,714.8 L1330.5,735.1 L1373.4,755.4 L1416.2,775.6 L1459.1,795.8 L1501.9,816.0 L1544.8,836.1 L1587.8,856.1 L1630.9,875.7 L1674.1,895.1 L1717.2,914.7 L1760.1,935.0 L1802.4,956.3 L1844.2,978.5 L1885.7,1001.5 L1926.7,1025.2 L1967.4,1049.4 L2007.8,1074.2 L2047.8,1099.6 L2087.4,1125.5 L2126.7,1151.9 L2165.8,1178.7 L2204.3,1206.2 L2242.3,1234.6 L2280.0,1263.3 L2317.8,1291.8 L2356.2,1319.6 L2395.2,1346.5 L2434.4,1373.0 L2473.8,1399.3 L2513.3,1425.5 L2552.8,1451.7" fill="none" stroke="#2b130b" stroke-width="1"/><path d="M2551.8,1424.3 L2718.3,1500.6 L2718.3,1520.8 L2551.8,1450.2Z" fill="#7e422b" stroke="#2b130b" stroke-width="1.5" stroke-linejoin="round"/><path d="M2551.8,1424.3 L2556.1,1426.2 L2560.4,1428.2 L2564.6,1430.1 L2568.9,1432.1 L2573.2,1434.0 L2577.4,1436.0 L2581.7,1438.0 L2586.0,1439.9 L2590.2,1441.9 L2594.5,1443.8 L2598.8,1445.8 L2603.0,1447.7 L2607.3,1449.7 L2611.6,1451.7 L2615.8,1453.6 L2620.1,1455.6 L2624.4,1457.5 L2628.6,1459.5 L2632.9,1461.4 L2637.2,1463.4 L2641.4,1465.4 L2645.7,1467.3 L2650.0,1469.3 L2654.2,1471.2 L2658.5,1473.2 L2662.8,1475.1 L2667.0,1477.1 L2671.3,1479.1 L2675.6,1481.0 L2679.8,1483.0 L2684.1,1484.9 L2688.4,1486.9 L2692.7,1488.8 L2696.9,1490.8 L2701.2,1492.8 L2705.5,1494.7 L2709.7,1496.7 L2714.0,1498.6 L2718.3,1500.6 L2718.3,1506.6 L2714.0,1504.7 L2709.7,1502.8 L2705.5,1500.9 L2701.2,1499.0 L2696.9,1497.1 L2692.7,1495.2 L2688.4,1493.3 L2684.1,1491.3 L2679.8,1489.4 L2675.6,1487.5 L2671.3,1485.6 L2667.0,1483.7 L2662.8,1481.8 L2658.5,1479.9 L2654.2,1477.9 L2650.0,1476.0 L2645.7,1474.1 L2641.4,1472.2 L2637.2,1470.3 L2632.9,1468.4 L2628.6,1466.5 L2624.4,1464.6 L2620.1,1462.6 L2615.8,1460.7 L2611.6,1458.8 L2607.3,1456.9 L2603.0,1455.0 L2598.8,1453.1 L2594.5,1451.2 L2590.2,1449.2 L2586.0,1447.3 L2581.7,1445.4 L2577.4,1443.5 L2573.2,1441.6 L2568.9,1439.7 L2564.6,1437.8 L2560.4,1435.9 L2556.1,1433.9 L2551.8,1432.0Z" fill="#92503a"/><path d="M2551.8,1424.3 L2718.3,1500.6 L2718.3,1520.8 L2551.8,1450.2Z" fill="none" stroke="#2b130b" stroke-width="1.5" stroke-linejoin="round"/><path d="M936.7,538.3 L936.4,543.4 L936.1,550.1 L935.6,558.1 L935.2,567.0 L934.6,576.5 L934.1,586.3 L933.5,595.9 L932.9,605.1 L932.2,614.4 L931.5,624.3 L930.7,634.6 L929.9,645.0 L929.1,655.0 L928.3,664.4 L927.6,672.8 L927.0,680.0 L926.5,685.8 L926.2,690.6 L926.0,694.4 L925.8,697.6 L925.5,700.4 L925.3,702.9 L925.0,705.5 L924.5,708.4 L923.9,711.4 L923.3,714.1 L922.7,716.8 L921.9,719.3 L921.2,721.7 L920.4,724.1 L919.5,726.6 L918.6,729.0 L917.7,731.5 L916.7,734.1 L915.6,736.6 L914.5,739.1 L913.4,741.5 L912.2,743.9 L911.0,746.1 L909.7,748.1 L908.4,750.0 L907.0,751.9 L905.5,753.8 L904.0,755.5 L902.5,757.0 L901.0,758.3 L899.5,759.3 L898.0,759.9 L896.5,760.3 L895.1,760.4 L893.7,760.3 L892.3,759.9 L890.8,759.3 L889.4,758.3 L887.8,757.1 L886.2,755.5 L884.5,753.5 L882.6,751.2 L880.6,748.6 L878.6,745.6 L876.7,742.5 L874.8,739.1 L873.0,735.5 L871.5,731.9 L870.1,728.2 L868.9,724.5 L867.8,720.7 L866.8,716.6 L865.9,712.3 L865.0,707.6 L864.2,702.4 L863.4,696.6 L862.6,689.9 L861.9,682.4 L861.3,674.1 L860.7,665.6 L860.2,657.1 L859.7,648.9 L859.3,641.3 L858.9,634.7 L858.6,628.9 L858.4,623.7 L858.3,619.0 L858.2,614.6 L858.2,610.6 L858.1,606.9 L858.1,603.4 L858.0,600.0 L857.9,596.8 L857.7,593.9 L857.6,591.2 L857.4,588.8 L857.3,586.7 L857.2,584.8 L857.1,583.3 L857.0,582.0 L829.0,582.0 L829.1,583.3 L829.3,585.0 L829.5,587.0 L829.7,589.3 L829.9,591.8 L830.0,594.4 L830.0,597.2 L830.0,600.0 L829.8,602.9 L829.4,606.0 L828.8,609.2 L828.3,612.5 L827.7,616.0 L827.4,619.7 L827.2,623.5 L827.3,627.4 L827.8,631.5 L828.8,635.8 L829.9,640.3 L831.2,644.9 L832.5,649.7 L833.6,654.5 L834.3,659.3 L834.6,664.2 L834.2,669.1 L833.3,674.2 L832.0,679.4 L830.5,684.6 L829.1,689.9 L827.9,695.1 L827.3,700.3 L827.3,705.4 L828.2,710.5 L829.7,715.7 L831.7,720.9 L833.9,726.0 L836.3,731.1 L838.5,736.0 L840.5,740.7 L842.0,745.2 L842.8,749.5 L843.1,753.7 L843.1,757.7 L843.0,761.6 L843.1,765.3 L843.5,768.7 L844.5,771.8 L846.4,774.6 L849.2,777.0 L852.8,779.1 L857.0,780.9 L861.6,782.5 L866.4,783.8 L871.2,785.0 L875.8,786.0 L880.0,787.0 L884.0,788.0 L887.9,788.9 L891.9,789.8 L895.8,790.5 L899.5,791.0 L903.1,791.0 L906.5,790.5 L909.7,789.4 L912.6,787.6 L915.4,785.0 L917.9,781.9 L920.3,778.4 L922.6,774.7 L924.8,771.0 L926.9,767.5 L928.9,764.3 L930.9,761.5 L932.7,759.0 L934.5,756.7 L936.2,754.3 L937.8,751.8 L939.3,749.1 L940.7,745.9 L942.1,742.2 L943.3,737.8 L944.4,732.8 L945.4,727.4 L946.4,721.7 L947.3,716.0 L948.1,710.3 L949.0,704.9 L950.0,700.0 L951.0,695.4 L952.0,690.8 L953.1,686.3 L954.1,682.0 L955.1,678.0 L956.1,674.3 L957.1,671.0 L958.1,668.1 L959.1,666.0 L960.3,664.8 L961.4,664.0 L962.6,663.6 L963.6,663.0 L964.4,662.1 L965.0,660.6 L965.2,658.0 L964.9,654.4 L964.2,650.0 L963.1,645.1 L961.9,639.7 L960.7,634.1 L959.6,628.5 L958.9,622.9 L958.6,617.7 L958.9,612.6 L959.8,607.6 L960.9,602.5 L962.2,597.4 L963.5,592.3 L964.6,587.3 L965.4,582.3 L965.7,577.4 L965.4,572.3 L964.7,567.0 L963.6,561.5 L962.3,556.2 L961.0,551.2 L959.8,546.7 L958.8,542.9 L958.1,540.0Z" fill="#7a3f28" stroke="#2b130b" stroke-width="1.3" stroke-linejoin="round"/><path d="M1277.5,710.0 L1277.5,710.2 L1277.4,709.8 L1277.3,709.4 L1277.1,709.2 L1277.0,709.6 L1276.9,711.0 L1276.7,713.7 L1276.5,718.0 L1276.4,724.6 L1276.4,733.3 L1276.5,743.4 L1276.5,754.5 L1276.4,765.8 L1276.1,776.8 L1275.6,786.8 L1274.8,795.4 L1273.8,802.5 L1272.6,808.7 L1271.3,814.4 L1269.7,819.5 L1267.9,824.4 L1266.0,829.2 L1263.8,834.0 L1261.4,839.1 L1258.8,844.3 L1256.0,849.5 L1253.0,854.6 L1249.8,859.7 L1246.4,864.7 L1242.7,869.7 L1238.8,874.6 L1234.5,879.4 L1229.7,884.2 L1224.4,888.9 L1218.7,893.5 L1212.7,898.1 L1206.8,902.7 L1201.0,907.2 L1195.6,911.8 L1190.8,916.4 L1186.6,921.4 L1183.0,926.9 L1179.7,932.6 L1176.6,938.2 L1173.5,943.4 L1170.2,947.9 L1166.6,951.3 L1162.4,953.5 L1157.4,954.0 L1151.9,953.2 L1145.9,951.2 L1139.8,948.6 L1133.8,945.6 L1128.0,942.8 L1122.7,940.4 L1118.2,938.8 L1114.5,938.0 L1111.5,937.7 L1109.0,937.6 L1106.8,937.7 L1104.7,937.8 L1102.5,937.8 L1100.1,937.4 L1097.2,936.7 L1093.8,935.5 L1090.0,934.0 L1086.0,932.4 L1081.9,930.5 L1077.9,928.5 L1074.1,926.4 L1070.7,924.2 L1067.7,922.0 L1065.3,919.7 L1063.2,917.4 L1061.4,915.0 L1059.9,912.5 L1058.5,909.9 L1057.3,907.1 L1056.2,904.1 L1055.1,900.9 L1054.2,897.6 L1053.4,894.2 L1052.8,890.6 L1052.4,886.9 L1052.0,882.9 L1051.6,878.7 L1051.3,874.2 L1050.9,869.4 L1050.6,863.9 L1050.2,857.8 L1049.9,851.1 L1049.7,844.4 L1049.4,837.7 L1049.2,831.4 L1049.0,825.7 L1048.8,821.0 L1048.6,817.2 L1048.5,814.0 L1048.3,811.3 L1048.2,809.0 L1048.1,807.1 L1048.0,805.5 L1047.9,804.2 L1047.8,803.0 L1020.5,794.6 L1020.6,795.9 L1020.7,797.4 L1020.9,799.2 L1021.1,801.3 L1021.3,803.6 L1021.4,806.3 L1021.5,809.3 L1021.5,812.6 L1021.3,816.4 L1020.9,820.7 L1020.3,825.4 L1019.8,830.3 L1019.3,835.4 L1019.0,840.5 L1019.0,845.6 L1019.4,850.5 L1020.3,855.2 L1021.8,860.1 L1023.6,864.9 L1025.5,869.8 L1027.4,874.6 L1029.1,879.3 L1030.3,883.9 L1031.0,888.3 L1030.6,892.4 L1029.4,896.2 L1027.7,899.9 L1025.8,903.4 L1024.0,907.1 L1022.8,910.9 L1022.6,915.1 L1023.6,919.8 L1026.0,925.4 L1029.5,931.9 L1033.9,938.8 L1038.9,945.9 L1044.2,952.8 L1049.5,959.1 L1054.7,964.3 L1059.3,968.2 L1063.4,970.6 L1067.1,971.8 L1070.5,972.2 L1074.1,971.8 L1077.8,971.1 L1082.1,970.3 L1087.1,969.6 L1093.0,969.3 L1100.1,969.4 L1108.4,969.9 L1117.4,970.4 L1126.9,970.9 L1136.5,971.1 L1145.9,970.8 L1154.6,969.9 L1162.4,968.2 L1169.3,965.5 L1176.0,961.7 L1182.2,957.2 L1188.1,952.3 L1193.5,947.4 L1198.6,942.6 L1203.3,938.3 L1207.6,934.9 L1211.2,932.5 L1214.0,930.7 L1216.3,929.5 L1218.2,928.5 L1220.1,927.5 L1222.1,926.1 L1224.6,924.2 L1227.8,921.5 L1231.8,917.6 L1236.4,912.9 L1241.4,907.6 L1246.7,901.9 L1251.9,896.3 L1256.8,891.0 L1261.1,886.4 L1264.8,882.8 L1267.6,880.3 L1269.8,878.8 L1271.5,878.0 L1273.0,877.4 L1274.2,877.0 L1275.4,876.2 L1276.7,874.9 L1278.2,872.7 L1279.9,869.7 L1281.7,866.0 L1283.4,862.0 L1285.1,857.6 L1286.9,853.0 L1288.5,848.3 L1290.1,843.6 L1291.7,839.1 L1293.2,834.6 L1294.7,829.8 L1296.1,825.0 L1297.5,820.2 L1298.9,815.4 L1300.0,810.7 L1301.0,806.3 L1301.7,802.1 L1302.2,798.4 L1302.3,795.0 L1302.2,791.9 L1302.0,789.0 L1301.7,786.0 L1301.5,782.8 L1301.5,779.2 L1301.7,775.2 L1302.3,770.4 L1303.1,765.0 L1304.0,759.0 L1305.0,753.0 L1306.1,747.1 L1307.0,741.6 L1307.9,736.9 L1308.5,733.2 L1308.9,730.5 L1309.1,728.6 L1309.3,727.3 L1309.4,726.5 L1309.4,726.1 L1309.4,725.8 L1309.4,725.6 L1309.5,725.2Z" fill="#7a3f28" stroke="#2b130b" stroke-width="1.3" stroke-linejoin="round"/><path d="M1548.2,834.4 L1548.1,834.9 L1548.0,835.2 L1547.9,835.6 L1547.7,836.1 L1547.6,837.0 L1547.4,838.2 L1547.3,840.0 L1547.2,842.4 L1547.2,845.5 L1547.4,849.1 L1547.6,853.2 L1547.8,857.7 L1547.9,862.6 L1547.9,867.9 L1547.7,873.5 L1547.2,879.4 L1546.5,886.1 L1545.6,893.6 L1544.5,901.7 L1543.2,910.1 L1541.8,918.4 L1540.4,926.4 L1538.8,933.7 L1537.1,940.0 L1535.4,945.2 L1533.7,949.7 L1531.9,953.5 L1530.0,957.0 L1527.9,960.2 L1525.6,963.4 L1523.1,966.6 L1520.3,970.2 L1517.3,974.0 L1514.2,977.7 L1511.0,981.4 L1507.5,985.1 L1503.7,988.9 L1499.6,992.7 L1495.0,996.5 L1490.0,1000.5 L1484.4,1004.6 L1478.1,1008.8 L1471.3,1013.1 L1464.2,1017.5 L1457.0,1021.8 L1449.8,1026.1 L1442.8,1030.2 L1436.2,1034.1 L1430.0,1037.8 L1423.8,1041.5 L1417.8,1045.1 L1411.8,1048.5 L1406.0,1051.8 L1400.3,1055.0 L1394.7,1058.1 L1389.2,1061.0 L1384.0,1063.9 L1379.2,1066.7 L1374.6,1069.5 L1370.1,1072.1 L1365.5,1074.5 L1360.6,1076.6 L1355.3,1078.4 L1349.5,1079.6 L1342.9,1080.4 L1335.4,1080.6 L1327.5,1080.5 L1319.4,1080.0 L1311.4,1079.4 L1303.7,1078.7 L1296.7,1078.0 L1290.6,1077.5 L1285.5,1077.2 L1281.1,1076.9 L1277.2,1076.7 L1273.8,1076.4 L1270.6,1075.9 L1267.6,1075.3 L1264.5,1074.5 L1261.2,1073.3 L1257.7,1071.9 L1254.2,1070.2 L1250.7,1068.3 L1247.3,1066.2 L1244.0,1064.0 L1241.0,1061.6 L1238.3,1059.1 L1236.0,1056.5 L1234.1,1053.9 L1232.5,1051.4 L1231.3,1048.8 L1230.3,1046.0 L1229.5,1043.0 L1228.8,1039.6 L1228.2,1035.7 L1227.5,1031.3 L1227.0,1026.0 L1226.5,1019.7 L1226.2,1012.8 L1226.0,1005.6 L1225.9,998.5 L1225.7,991.7 L1225.6,985.8 L1225.4,980.8 L1225.3,976.9 L1225.1,973.6 L1224.9,970.9 L1224.8,968.7 L1224.7,966.8 L1224.6,965.3 L1224.5,964.0 L1224.4,962.8 L1198.2,956.5 L1198.3,957.7 L1198.4,959.1 L1198.6,960.8 L1198.9,962.8 L1199.0,965.1 L1199.2,967.8 L1199.2,970.9 L1199.2,974.5 L1198.8,978.9 L1198.3,984.0 L1197.5,989.6 L1196.8,995.6 L1196.1,1001.7 L1195.7,1007.8 L1195.6,1013.5 L1196.0,1018.7 L1197.0,1023.4 L1198.7,1027.9 L1200.7,1032.1 L1203.0,1036.3 L1205.2,1040.3 L1207.2,1044.3 L1208.8,1048.3 L1209.7,1052.3 L1209.6,1056.4 L1208.6,1060.4 L1207.1,1064.5 L1205.4,1068.5 L1203.9,1072.4 L1203.0,1076.3 L1203.0,1080.1 L1204.4,1083.9 L1207.2,1087.7 L1211.1,1091.7 L1215.8,1095.7 L1221.2,1099.6 L1226.9,1103.3 L1232.9,1106.5 L1238.8,1109.2 L1244.4,1111.2 L1249.8,1112.4 L1255.2,1112.8 L1260.7,1112.7 L1266.3,1112.2 L1272.1,1111.5 L1278.0,1110.6 L1284.2,1109.7 L1290.6,1109.1 L1297.3,1108.6 L1304.4,1108.3 L1311.6,1108.0 L1319.0,1107.6 L1326.5,1106.9 L1334.2,1106.0 L1341.8,1104.6 L1349.5,1102.8 L1357.2,1100.3 L1365.1,1097.4 L1373.1,1094.0 L1381.2,1090.3 L1389.3,1086.4 L1397.2,1082.4 L1405.1,1078.4 L1412.7,1074.5 L1420.2,1070.5 L1427.6,1066.3 L1434.9,1062.1 L1442.1,1057.8 L1449.2,1053.4 L1456.2,1049.1 L1463.1,1044.9 L1469.9,1040.8 L1476.7,1036.8 L1483.7,1032.6 L1490.8,1028.5 L1497.6,1024.4 L1504.2,1020.5 L1510.2,1016.9 L1515.7,1013.5 L1520.3,1010.6 L1524.0,1008.2 L1526.9,1006.5 L1529.1,1005.2 L1530.8,1004.1 L1532.3,1002.9 L1533.7,1001.5 L1535.3,999.7 L1537.1,997.1 L1539.2,993.9 L1541.4,990.1 L1543.5,986.0 L1545.6,981.6 L1547.8,977.0 L1549.8,972.4 L1551.9,967.8 L1553.9,963.5 L1556.0,959.3 L1558.2,955.1 L1560.4,950.9 L1562.6,946.7 L1564.6,942.5 L1566.4,938.3 L1567.9,934.1 L1569.1,929.9 L1569.7,925.7 L1569.9,921.6 L1569.8,917.6 L1569.5,913.5 L1569.1,909.3 L1568.8,905.1 L1568.8,900.8 L1569.1,896.2 L1569.8,891.3 L1570.7,885.9 L1571.9,880.2 L1573.2,874.5 L1574.5,869.0 L1575.7,863.9 L1576.7,859.4 L1577.5,855.9 L1578.0,853.3 L1578.3,851.4 L1578.4,850.2 L1578.5,849.4 L1578.5,848.9 L1578.5,848.6 L1578.4,848.3 L1578.5,847.9Z" fill="#7a3f28" stroke="#2b130b" stroke-width="1.3" stroke-linejoin="round"/><path d="M1777.5,933.6 L1778.3,936.1 L1779.3,939.4 L1780.6,943.2 L1782.0,947.5 L1783.3,952.2 L1784.5,957.1 L1785.4,962.2 L1785.9,967.2 L1786.2,972.5 L1786.2,978.2 L1786.0,984.1 L1785.6,990.2 L1785.1,996.3 L1784.4,1002.5 L1783.6,1008.5 L1782.6,1014.3 L1781.5,1020.0 L1780.3,1025.6 L1779.0,1031.3 L1777.5,1036.8 L1775.9,1042.3 L1773.9,1047.7 L1771.7,1052.9 L1769.1,1058.0 L1766.3,1063.0 L1763.2,1067.8 L1759.9,1072.5 L1756.3,1077.2 L1752.4,1081.7 L1748.2,1086.2 L1743.7,1090.6 L1738.9,1095.0 L1733.5,1099.4 L1727.7,1103.7 L1721.4,1108.0 L1714.9,1112.3 L1708.2,1116.4 L1701.5,1120.6 L1694.9,1124.6 L1688.4,1128.6 L1682.0,1132.7 L1675.5,1136.7 L1668.9,1140.7 L1662.4,1144.6 L1655.9,1148.4 L1649.7,1152.1 L1643.7,1155.6 L1638.0,1158.9 L1633.0,1161.9 L1628.7,1164.7 L1624.8,1167.4 L1621.0,1169.8 L1617.0,1172.2 L1612.5,1174.5 L1607.3,1176.8 L1601.0,1179.1 L1593.4,1181.4 L1584.7,1183.8 L1575.2,1186.1 L1565.3,1188.3 L1555.2,1190.5 L1545.2,1192.5 L1535.7,1194.3 L1527.0,1195.9 L1518.9,1197.3 L1511.0,1198.6 L1503.3,1199.7 L1495.9,1200.7 L1488.8,1201.5 L1482.1,1202.1 L1475.8,1202.5 L1469.9,1202.6 L1464.4,1202.5 L1459.4,1202.2 L1454.8,1201.7 L1450.5,1200.9 L1446.6,1200.0 L1442.9,1198.8 L1439.5,1197.5 L1436.2,1195.9 L1433.2,1194.3 L1430.5,1192.7 L1428.1,1191.1 L1425.9,1189.2 L1424.0,1186.8 L1422.3,1183.9 L1420.8,1180.3 L1419.4,1175.7 L1418.4,1169.8 L1417.6,1162.4 L1417.1,1154.1 L1416.8,1145.3 L1416.6,1136.6 L1416.4,1128.3 L1416.3,1121.0 L1416.1,1115.2 L1415.8,1110.8 L1415.6,1107.3 L1415.5,1104.5 L1415.4,1102.4 L1415.3,1100.8 L1415.2,1099.4 L1415.1,1098.3 L1415.1,1097.2 L1384.8,1090.5 L1384.9,1091.6 L1385.1,1092.9 L1385.2,1094.5 L1385.4,1096.3 L1385.6,1098.6 L1385.7,1101.3 L1385.8,1104.5 L1385.8,1108.5 L1385.6,1113.3 L1385.2,1119.2 L1384.7,1125.8 L1384.2,1132.7 L1383.8,1139.8 L1383.5,1146.7 L1383.6,1153.2 L1384.1,1158.9 L1385.2,1164.0 L1386.9,1168.7 L1388.9,1173.0 L1391.1,1177.2 L1393.2,1181.2 L1395.2,1185.0 L1396.7,1188.8 L1397.6,1192.5 L1397.5,1196.3 L1396.5,1199.9 L1394.9,1203.4 L1393.2,1206.8 L1391.7,1210.1 L1390.8,1213.3 L1391.0,1216.4 L1392.5,1219.4 L1395.6,1222.4 L1399.9,1225.5 L1405.1,1228.5 L1410.9,1231.4 L1417.2,1234.1 L1423.7,1236.4 L1430.1,1238.3 L1436.2,1239.6 L1442.3,1240.3 L1448.6,1240.5 L1455.0,1240.1 L1461.6,1239.5 L1468.1,1238.7 L1474.5,1237.8 L1480.7,1236.9 L1486.7,1236.2 L1492.0,1235.9 L1496.7,1235.8 L1501.0,1235.8 L1505.3,1235.7 L1509.9,1235.4 L1515.1,1234.6 L1521.3,1233.3 L1528.7,1231.2 L1537.7,1228.2 L1548.1,1224.4 L1559.5,1220.0 L1571.5,1215.1 L1583.7,1210.1 L1595.7,1205.1 L1607.2,1200.3 L1617.8,1195.9 L1627.6,1191.9 L1637.0,1188.1 L1646.1,1184.5 L1654.9,1180.9 L1663.5,1177.3 L1671.9,1173.6 L1680.2,1169.7 L1688.4,1165.6 L1696.8,1161.2 L1705.3,1156.3 L1713.8,1151.2 L1722.1,1146.1 L1729.9,1141.1 L1737.1,1136.4 L1743.6,1132.2 L1749.0,1128.6 L1753.1,1125.9 L1756.0,1123.9 L1758.0,1122.5 L1759.5,1121.3 L1760.6,1120.2 L1761.9,1119.0 L1763.5,1117.4 L1765.8,1115.2 L1768.7,1112.6 L1772.0,1109.8 L1775.6,1106.8 L1779.2,1103.6 L1782.9,1100.2 L1786.4,1096.5 L1789.7,1092.6 L1792.7,1088.3 L1795.4,1083.5 L1798.1,1078.2 L1800.7,1072.5 L1803.1,1066.7 L1805.2,1060.7 L1807.1,1055.0 L1808.5,1049.5 L1809.5,1044.6 L1809.8,1040.2 L1809.5,1036.2 L1808.7,1032.4 L1807.7,1028.8 L1806.6,1025.3 L1805.5,1021.8 L1804.7,1018.2 L1804.4,1014.3 L1804.7,1010.3 L1805.3,1006.3 L1806.1,1002.3 L1807.1,998.1 L1808.1,993.9 L1808.9,989.7 L1809.4,985.2 L1809.5,980.7 L1809.1,975.7 L1808.3,970.1 L1807.3,964.3 L1806.1,958.4 L1804.9,952.8 L1803.7,947.8 L1802.7,943.5 L1802.1,940.3Z" fill="#7a3f28" stroke="#2b130b" stroke-width="1.3" stroke-linejoin="round"/><path d="M1983.4,1067.2 L1983.4,1067.5 L1983.2,1067.7 L1983.1,1067.9 L1982.9,1068.3 L1982.8,1069.0 L1982.7,1070.3 L1982.5,1072.3 L1982.4,1075.2 L1982.4,1079.3 L1982.5,1084.4 L1982.7,1090.3 L1982.8,1096.7 L1982.9,1103.4 L1982.9,1110.1 L1982.8,1116.4 L1982.4,1122.3 L1982.0,1127.7 L1981.6,1133.0 L1981.0,1138.2 L1980.3,1143.3 L1979.5,1148.3 L1978.5,1153.2 L1977.3,1157.9 L1975.7,1162.6 L1974.0,1167.1 L1972.0,1171.5 L1969.9,1175.7 L1967.5,1179.9 L1964.9,1183.9 L1962.1,1188.0 L1959.0,1192.1 L1955.5,1196.2 L1951.9,1200.5 L1948.0,1204.7 L1943.8,1208.9 L1939.4,1213.1 L1934.6,1217.3 L1929.6,1221.5 L1924.3,1225.7 L1918.6,1229.9 L1912.3,1234.1 L1905.4,1238.5 L1898.0,1242.9 L1890.4,1247.3 L1882.7,1251.6 L1875.2,1255.8 L1868.0,1259.8 L1861.4,1263.5 L1855.5,1266.9 L1850.3,1269.9 L1845.6,1272.8 L1840.9,1275.5 L1836.1,1278.2 L1830.8,1280.9 L1824.7,1283.9 L1817.7,1287.0 L1809.3,1290.6 L1799.8,1294.6 L1789.5,1298.8 L1778.7,1303.0 L1767.9,1307.1 L1757.4,1310.9 L1747.6,1314.3 L1738.9,1316.9 L1731.2,1319.0 L1724.1,1320.5 L1717.6,1321.6 L1711.5,1322.4 L1705.6,1322.9 L1699.9,1323.2 L1694.2,1323.5 L1688.4,1323.7 L1682.5,1323.9 L1676.5,1324.0 L1670.5,1324.0 L1664.7,1323.9 L1659.1,1323.5 L1653.8,1322.8 L1649.0,1321.8 L1644.7,1320.3 L1641.0,1318.7 L1637.7,1317.0 L1634.8,1315.2 L1632.3,1313.0 L1630.1,1310.2 L1628.1,1306.7 L1626.3,1302.3 L1624.5,1296.8 L1623.0,1289.6 L1621.8,1280.5 L1620.8,1270.3 L1620.0,1259.4 L1619.3,1248.7 L1618.8,1238.5 L1618.3,1229.7 L1617.8,1222.8 L1617.4,1217.7 L1617.1,1213.9 L1617.0,1211.2 L1616.9,1209.2 L1616.9,1207.8 L1616.9,1206.7 L1616.9,1205.8 L1616.8,1204.8 L1586.6,1201.4 L1586.7,1202.6 L1586.8,1203.8 L1587.0,1205.3 L1587.2,1207.1 L1587.3,1209.3 L1587.5,1212.0 L1587.6,1215.3 L1587.6,1219.4 L1587.4,1224.6 L1587.0,1230.8 L1586.5,1237.9 L1585.9,1245.4 L1585.5,1253.0 L1585.3,1260.4 L1585.4,1267.2 L1585.9,1273.2 L1587.0,1278.4 L1588.6,1283.2 L1590.6,1287.6 L1592.8,1291.7 L1595.0,1295.6 L1596.9,1299.4 L1598.4,1303.1 L1599.3,1306.9 L1599.2,1310.6 L1598.2,1314.3 L1596.6,1317.9 L1594.9,1321.4 L1593.4,1324.7 L1592.6,1327.9 L1592.7,1330.9 L1594.3,1333.8 L1597.4,1336.5 L1601.6,1339.1 L1606.8,1341.5 L1612.7,1343.8 L1619.0,1345.9 L1625.5,1347.8 L1631.9,1349.3 L1638.0,1350.6 L1644.0,1351.4 L1650.1,1351.9 L1656.4,1352.1 L1662.8,1352.0 L1669.2,1351.8 L1675.7,1351.4 L1682.1,1351.0 L1688.4,1350.6 L1694.3,1350.3 L1699.7,1350.3 L1704.8,1350.3 L1710.0,1350.1 L1715.7,1349.6 L1722.1,1348.5 L1729.8,1346.6 L1738.9,1343.8 L1750.2,1339.7 L1763.6,1334.3 L1778.5,1327.9 L1794.0,1321.1 L1809.5,1314.2 L1824.1,1307.6 L1837.2,1301.8 L1847.9,1297.1 L1856.1,1293.7 L1862.4,1291.2 L1867.2,1289.4 L1871.2,1287.9 L1874.7,1286.5 L1878.4,1285.0 L1882.8,1283.0 L1888.3,1280.3 L1895.2,1276.8 L1903.0,1272.8 L1911.4,1268.3 L1920.0,1263.7 L1928.4,1259.0 L1936.3,1254.5 L1943.2,1250.4 L1948.8,1246.7 L1952.9,1243.7 L1955.9,1241.2 L1957.9,1239.0 L1959.3,1237.0 L1960.5,1235.0 L1961.7,1232.7 L1963.4,1229.9 L1965.6,1226.5 L1968.6,1222.3 L1972.0,1217.4 L1975.6,1212.1 L1979.4,1206.5 L1983.1,1200.9 L1986.6,1195.5 L1989.8,1190.5 L1992.5,1186.2 L1994.8,1182.4 L1996.8,1179.2 L1998.6,1176.2 L2000.1,1173.6 L2001.4,1171.0 L2002.5,1168.3 L2003.5,1165.6 L2004.3,1162.6 L2004.8,1159.5 L2004.9,1156.4 L2004.8,1153.4 L2004.5,1150.2 L2004.2,1146.9 L2004.0,1143.5 L2004.0,1139.8 L2004.3,1135.7 L2005.0,1131.1 L2006.0,1125.8 L2007.2,1120.2 L2008.4,1114.4 L2009.7,1108.7 L2010.9,1103.5 L2012.0,1099.0 L2012.7,1095.4 L2013.2,1092.8 L2013.5,1090.9 L2013.7,1089.7 L2013.7,1088.9 L2013.7,1088.4 L2013.7,1088.1 L2013.7,1087.8 L2013.7,1087.4Z" fill="#7a3f28" stroke="#2b130b" stroke-width="1.3" stroke-linejoin="round"/><path d="M2171.7,1183.2 L2171.6,1183.6 L2171.5,1183.9 L2171.3,1184.3 L2171.0,1184.8 L2170.8,1185.6 L2170.7,1186.9 L2170.7,1188.7 L2170.7,1191.2 L2171.0,1194.5 L2171.6,1198.4 L2172.2,1202.9 L2172.9,1207.9 L2173.5,1213.2 L2174.0,1218.7 L2174.2,1224.3 L2174.1,1229.9 L2173.7,1235.7 L2173.0,1242.0 L2172.1,1248.7 L2171.1,1255.4 L2169.9,1262.1 L2168.6,1268.6 L2167.2,1274.7 L2165.7,1280.3 L2164.3,1285.3 L2162.9,1289.9 L2161.5,1294.2 L2159.9,1298.2 L2158.1,1302.1 L2156.0,1305.9 L2153.6,1309.8 L2150.6,1313.9 L2147.0,1318.2 L2142.9,1322.5 L2138.4,1326.8 L2133.7,1331.2 L2128.7,1335.4 L2123.6,1339.6 L2118.5,1343.7 L2113.6,1347.6 L2108.5,1351.2 L2102.9,1354.5 L2097.2,1357.7 L2091.5,1360.8 L2086.0,1363.9 L2081.0,1367.2 L2076.7,1370.6 L2073.2,1374.5 L2071.3,1378.8 L2071.0,1383.7 L2071.7,1388.8 L2072.6,1394.1 L2073.3,1399.2 L2073.0,1404.0 L2071.1,1408.3 L2066.9,1411.8 L2060.3,1414.5 L2051.7,1416.6 L2041.5,1418.1 L2030.4,1419.3 L2018.8,1420.3 L2007.2,1421.3 L1996.2,1422.3 L1986.2,1423.6 L1977.0,1425.2 L1967.9,1426.9 L1958.9,1428.7 L1950.1,1430.4 L1941.7,1432.1 L1933.6,1433.5 L1926.0,1434.6 L1919.0,1435.4 L1912.5,1435.8 L1906.5,1436.1 L1901.0,1436.1 L1895.9,1435.9 L1891.1,1435.4 L1886.7,1434.6 L1882.5,1433.5 L1878.6,1432.0 L1875.1,1430.4 L1871.9,1428.9 L1869.0,1427.2 L1866.5,1425.1 L1864.2,1422.4 L1862.1,1418.8 L1860.2,1414.3 L1858.5,1408.5 L1857.0,1400.7 L1855.7,1390.8 L1854.7,1379.6 L1853.9,1367.8 L1853.3,1356.0 L1852.7,1344.9 L1852.2,1335.3 L1851.7,1327.8 L1851.3,1322.4 L1851.1,1318.4 L1850.9,1315.6 L1850.8,1313.7 L1850.8,1312.5 L1850.8,1311.5 L1850.8,1310.7 L1850.7,1309.8 L1823.8,1306.4 L1824.0,1307.6 L1824.1,1308.9 L1824.3,1310.4 L1824.6,1312.3 L1824.7,1314.5 L1824.9,1317.2 L1824.9,1320.5 L1824.8,1324.4 L1824.5,1329.3 L1824.0,1335.1 L1823.2,1341.7 L1822.5,1348.7 L1821.8,1355.7 L1821.4,1362.7 L1821.2,1369.1 L1821.5,1374.8 L1822.3,1379.9 L1823.7,1384.6 L1825.4,1389.0 L1827.3,1393.1 L1829.2,1397.1 L1830.9,1400.9 L1832.3,1404.7 L1833.3,1408.5 L1833.4,1412.2 L1832.8,1415.8 L1831.8,1419.3 L1830.6,1422.8 L1829.7,1426.1 L1829.4,1429.3 L1829.9,1432.4 L1831.6,1435.4 L1834.5,1438.3 L1838.2,1441.2 L1842.7,1444.1 L1847.9,1446.8 L1853.5,1449.4 L1859.4,1451.7 L1865.6,1453.8 L1871.9,1455.5 L1878.6,1457.0 L1885.8,1458.2 L1893.4,1459.2 L1901.3,1460.0 L1909.4,1460.5 L1917.3,1460.7 L1925.1,1460.8 L1932.4,1460.6 L1939.5,1460.1 L1946.4,1459.3 L1953.3,1458.1 L1960.0,1456.8 L1966.6,1455.3 L1973.2,1453.7 L1979.7,1452.1 L1986.2,1450.5 L1992.6,1449.1 L1998.7,1448.0 L2004.7,1446.8 L2010.7,1445.6 L2016.7,1444.0 L2023.0,1441.9 L2029.6,1439.1 L2036.7,1435.4 L2044.4,1430.4 L2052.8,1424.2 L2061.6,1417.2 L2070.5,1409.7 L2079.4,1402.2 L2088.0,1394.9 L2096.1,1388.4 L2103.5,1382.9 L2110.3,1378.3 L2116.8,1374.4 L2122.9,1370.9 L2128.7,1367.8 L2134.0,1365.0 L2139.0,1362.5 L2143.4,1360.0 L2147.2,1357.6 L2150.3,1355.6 L2152.5,1354.1 L2154.0,1352.9 L2155.2,1351.9 L2156.2,1350.7 L2157.3,1349.2 L2158.7,1347.1 L2160.7,1344.2 L2163.2,1340.3 L2166.2,1335.5 L2169.4,1330.1 L2172.7,1324.4 L2176.0,1318.7 L2179.1,1313.1 L2181.9,1308.1 L2184.2,1303.8 L2186.0,1300.4 L2187.6,1297.6 L2188.8,1295.2 L2189.9,1293.1 L2190.7,1291.1 L2191.4,1289.0 L2192.1,1286.5 L2192.6,1283.7 L2192.9,1280.4 L2193.0,1277.1 L2192.8,1273.5 L2192.6,1269.8 L2192.4,1265.9 L2192.2,1261.9 L2192.3,1257.7 L2192.6,1253.4 L2193.3,1248.6 L2194.3,1243.3 L2195.5,1237.6 L2196.7,1231.8 L2198.0,1226.3 L2199.2,1221.1 L2200.3,1216.6 L2201.0,1213.1 L2201.5,1210.5 L2201.8,1208.6 L2202.0,1207.3 L2202.0,1206.5 L2202.0,1206.1 L2202.0,1205.7 L2202.0,1205.5 L2202.0,1205.1Z" fill="#7a3f28" stroke="#2b130b" stroke-width="1.3" stroke-linejoin="round"/><path d="M2348.4,1300.0 L2348.4,1301.4 L2348.3,1302.9 L2348.2,1304.8 L2348.1,1307.0 L2348.0,1309.6 L2348.0,1312.7 L2348.2,1316.4 L2348.4,1320.7 L2348.9,1325.9 L2349.6,1332.1 L2350.5,1339.0 L2351.4,1346.4 L2352.3,1353.9 L2353.0,1361.2 L2353.4,1368.2 L2353.4,1374.5 L2353.0,1380.3 L2352.4,1385.8 L2351.5,1391.2 L2350.4,1396.3 L2349.1,1401.3 L2347.8,1406.0 L2346.4,1410.5 L2345.0,1414.8 L2343.7,1418.7 L2342.5,1422.2 L2341.2,1425.3 L2339.9,1428.2 L2338.3,1431.2 L2336.5,1434.3 L2334.3,1437.8 L2331.6,1441.7 L2328.5,1446.1 L2324.9,1450.8 L2321.1,1455.7 L2316.9,1460.9 L2312.5,1466.1 L2307.8,1471.5 L2303.0,1476.8 L2298.0,1482.1 L2292.6,1487.6 L2286.5,1493.5 L2280.1,1499.6 L2273.6,1505.7 L2267.2,1511.6 L2261.1,1517.0 L2255.6,1521.8 L2250.9,1525.8 L2247.1,1528.9 L2243.9,1531.2 L2241.3,1533.0 L2239.0,1534.4 L2236.9,1535.4 L2235.0,1536.2 L2232.9,1536.9 L2230.7,1537.7 L2228.4,1538.4 L2226.4,1538.9 L2224.4,1539.2 L2222.5,1539.4 L2220.4,1539.4 L2218.2,1539.5 L2215.7,1539.6 L2212.8,1539.8 L2209.4,1540.1 L2205.4,1540.4 L2201.1,1540.8 L2196.6,1541.1 L2192.2,1541.4 L2188.0,1541.7 L2184.3,1541.8 L2181.3,1541.9 L2179.1,1541.9 L2177.7,1541.9 L2176.8,1541.9 L2176.1,1541.8 L2175.4,1541.5 L2174.4,1541.2 L2173.0,1540.6 L2170.8,1539.8 L2167.7,1538.8 L2164.0,1537.6 L2159.8,1536.2 L2155.3,1534.7 L2150.7,1533.0 L2146.4,1531.2 L2142.5,1529.2 L2139.2,1527.2 L2136.5,1525.0 L2134.1,1522.8 L2132.0,1520.4 L2130.1,1517.9 L2128.5,1515.2 L2127.0,1512.4 L2125.7,1509.4 L2124.5,1506.2 L2123.5,1502.9 L2122.7,1499.5 L2122.1,1496.0 L2121.6,1492.4 L2121.3,1488.5 L2121.0,1484.2 L2120.7,1479.6 L2120.3,1474.6 L2119.9,1468.8 L2119.6,1462.1 L2119.3,1454.9 L2119.1,1447.4 L2118.8,1440.1 L2118.6,1433.2 L2118.4,1427.1 L2118.2,1422.0 L2118.0,1418.0 L2117.8,1414.6 L2117.7,1411.9 L2117.6,1409.7 L2117.5,1407.9 L2117.4,1406.4 L2117.3,1405.2 L2117.2,1404.0 L2092.0,1404.0 L2092.1,1405.3 L2092.3,1406.9 L2092.5,1408.8 L2092.8,1411.0 L2093.0,1413.5 L2093.1,1416.1 L2093.1,1419.0 L2093.0,1422.0 L2092.6,1425.3 L2092.0,1428.9 L2091.3,1432.9 L2090.4,1437.0 L2089.7,1441.2 L2089.1,1445.4 L2088.8,1449.6 L2088.8,1453.6 L2089.3,1457.5 L2090.3,1461.3 L2091.5,1465.0 L2092.9,1468.8 L2094.3,1472.7 L2095.5,1476.6 L2096.6,1480.8 L2097.2,1485.1 L2097.3,1489.7 L2096.9,1494.6 L2096.2,1499.7 L2095.4,1504.8 L2094.7,1510.0 L2094.2,1515.2 L2094.3,1520.2 L2095.1,1525.1 L2096.7,1530.0 L2098.9,1535.0 L2101.7,1540.0 L2104.7,1544.9 L2107.8,1549.6 L2110.9,1553.9 L2113.7,1557.7 L2116.1,1560.8 L2117.9,1563.2 L2119.2,1565.0 L2120.2,1566.2 L2121.1,1567.1 L2122.2,1567.7 L2123.7,1568.2 L2125.8,1568.7 L2128.7,1569.2 L2132.4,1569.8 L2136.8,1570.2 L2141.7,1570.5 L2147.1,1570.7 L2152.7,1570.9 L2158.5,1571.0 L2164.3,1571.0 L2170.0,1571.0 L2175.9,1571.0 L2182.0,1571.1 L2188.4,1571.2 L2194.9,1571.1 L2201.3,1571.0 L2207.6,1570.6 L2213.5,1570.1 L2219.1,1569.2 L2224.2,1568.1 L2228.8,1566.7 L2233.2,1565.2 L2237.4,1563.4 L2241.6,1561.5 L2245.8,1559.4 L2250.2,1557.0 L2254.9,1554.5 L2259.9,1551.8 L2265.0,1548.8 L2270.3,1545.7 L2275.6,1542.3 L2281.0,1538.8 L2286.4,1535.1 L2291.7,1531.2 L2296.9,1527.2 L2302.1,1523.1 L2307.3,1518.9 L2312.6,1514.6 L2317.8,1510.1 L2322.8,1505.4 L2327.8,1500.4 L2332.5,1495.1 L2336.9,1489.3 L2341.1,1482.8 L2345.3,1475.5 L2349.3,1467.6 L2353.1,1459.6 L2356.7,1451.7 L2359.9,1444.2 L2362.8,1437.4 L2365.2,1431.7 L2367.1,1427.1 L2368.6,1423.5 L2369.7,1420.5 L2370.5,1418.0 L2371.1,1415.7 L2371.4,1413.4 L2371.7,1411.0 L2371.9,1408.1 L2371.9,1405.0 L2371.6,1401.9 L2371.0,1398.8 L2370.4,1395.7 L2369.7,1392.4 L2369.1,1388.9 L2368.7,1385.2 L2368.6,1381.2 L2368.9,1376.7 L2369.4,1371.8 L2370.1,1366.7 L2370.9,1361.3 L2371.7,1355.9 L2372.5,1350.6 L2373.2,1345.6 L2373.6,1340.9 L2373.8,1336.4 L2374.0,1331.8 L2374.0,1327.3 L2373.9,1322.9 L2373.8,1318.9 L2373.7,1315.3 L2373.6,1312.3 L2373.6,1310.0Z" fill="#7a3f28" stroke="#2b130b" stroke-width="1.3" stroke-linejoin="round"/><path d="M2546.8,1440.0 L2546.9,1442.5 L2547.0,1445.6 L2547.2,1449.3 L2547.4,1453.5 L2547.5,1458.2 L2547.5,1463.5 L2547.3,1469.2 L2546.8,1475.4 L2546.0,1482.3 L2544.9,1490.0 L2543.6,1498.3 L2542.2,1507.0 L2540.7,1516.0 L2539.2,1525.0 L2537.9,1534.0 L2536.7,1542.6 L2535.7,1551.2 L2534.9,1560.2 L2534.2,1569.3 L2533.6,1578.3 L2532.9,1587.1 L2532.1,1595.4 L2531.1,1603.1 L2530.0,1609.9 L2528.7,1615.8 L2527.2,1620.9 L2525.6,1625.3 L2523.9,1629.3 L2522.1,1633.0 L2520.3,1636.5 L2518.4,1639.9 L2516.5,1643.5 L2514.6,1647.4 L2512.5,1651.6 L2510.4,1655.8 L2508.3,1659.8 L2506.1,1663.3 L2504.0,1666.1 L2501.8,1668.0 L2499.7,1668.7 L2497.6,1668.0 L2495.4,1666.1 L2493.3,1663.3 L2491.1,1659.8 L2489.0,1655.8 L2486.9,1651.6 L2484.8,1647.4 L2482.9,1643.5 L2481.0,1639.7 L2479.1,1635.8 L2477.2,1631.8 L2475.3,1627.6 L2473.6,1623.3 L2472.0,1618.9 L2470.6,1614.5 L2469.4,1609.9 L2468.4,1605.4 L2467.7,1600.9 L2467.1,1596.3 L2466.7,1591.7 L2466.3,1586.8 L2466.1,1581.6 L2465.8,1576.0 L2465.5,1570.0 L2465.2,1563.1 L2465.0,1555.2 L2464.9,1546.8 L2464.8,1538.1 L2464.7,1529.7 L2464.6,1521.7 L2464.5,1514.7 L2464.4,1509.0 L2464.3,1504.6 L2464.1,1501.1 L2464.0,1498.3 L2463.8,1496.2 L2463.7,1494.5 L2463.6,1493.2 L2463.5,1492.1 L2463.4,1491.0 L2434.8,1491.0 L2434.9,1492.1 L2435.0,1493.1 L2435.2,1494.3 L2435.4,1495.8 L2435.6,1497.8 L2435.7,1500.6 L2435.8,1504.3 L2435.8,1509.0 L2435.6,1515.3 L2435.3,1523.1 L2434.8,1532.1 L2434.4,1541.7 L2434.0,1551.4 L2433.8,1560.7 L2433.8,1569.2 L2434.1,1576.3 L2434.9,1582.1 L2436.1,1587.1 L2437.7,1591.4 L2439.4,1595.2 L2441.0,1598.8 L2442.5,1602.3 L2443.6,1605.9 L2444.2,1609.9 L2444.2,1614.1 L2443.6,1618.3 L2442.6,1622.5 L2441.5,1626.7 L2440.4,1630.9 L2439.5,1635.1 L2439.0,1639.3 L2439.2,1643.5 L2439.9,1647.8 L2440.8,1652.4 L2442.0,1657.0 L2443.5,1661.6 L2445.3,1666.0 L2447.4,1670.1 L2449.8,1673.9 L2452.6,1677.1 L2455.8,1679.9 L2459.6,1682.3 L2463.7,1684.4 L2468.1,1686.2 L2472.7,1687.7 L2477.3,1688.9 L2481.9,1689.9 L2486.2,1690.6 L2490.5,1691.3 L2494.9,1691.9 L2499.3,1692.3 L2503.7,1692.5 L2508.0,1692.2 L2512.2,1691.3 L2516.2,1689.7 L2519.9,1687.2 L2523.4,1683.6 L2526.7,1679.0 L2529.8,1673.6 L2532.8,1667.7 L2535.7,1661.4 L2538.4,1655.1 L2540.9,1649.1 L2543.4,1643.5 L2545.7,1638.3 L2547.9,1633.2 L2550.0,1628.3 L2551.9,1623.3 L2553.7,1618.3 L2555.4,1613.4 L2557.0,1608.3 L2558.5,1603.1 L2559.9,1597.8 L2561.3,1592.6 L2562.6,1587.2 L2563.7,1581.9 L2564.8,1576.4 L2565.7,1570.9 L2566.4,1565.2 L2566.9,1559.4 L2567.1,1553.3 L2567.0,1546.9 L2566.7,1540.3 L2566.3,1533.6 L2565.9,1527.0 L2565.5,1520.6 L2565.3,1514.5 L2565.3,1509.0 L2565.6,1504.0 L2566.2,1499.5 L2566.9,1495.2 L2567.7,1491.3 L2568.5,1487.4 L2569.2,1483.5 L2569.9,1479.6 L2570.3,1475.4 L2570.5,1470.8 L2570.7,1465.8 L2570.7,1460.7 L2570.6,1455.6 L2570.5,1450.8 L2570.4,1446.4 L2570.3,1442.7 L2570.3,1440.0Z" fill="#7a3f28" stroke="#2b130b" stroke-width="1.3" stroke-linejoin="round"/><path d="M955.6,523.2 L998.9,542.6 L1042.1,562.2 L1085.1,582.4 L1127.6,603.4 L1169.7,625.2 L1211.8,647.2 L1254.0,669.0 L1296.4,690.2 L1339.1,710.8 L1382.1,731.0 L1425.1,751.0 L1468.2,770.9 L1511.3,790.7 L1554.3,810.7 L1597.4,830.5 L1640.6,850.2 L1683.8,869.9 L1726.9,889.8 L1769.7,910.2 L1812.2,931.3 L1854.5,952.8 L1896.5,974.8 L1938.1,997.7 L1979.2,1021.4 L2019.6,1046.4 L2059.0,1072.7 L2097.9,1099.9 L2136.5,1127.6 L2175.1,1155.2 L2213.8,1182.6 L2252.3,1210.3 L2290.8,1238.1 L2329.3,1265.8 L2367.9,1293.3 L2406.7,1320.7 L2445.5,1348.1 L2484.3,1375.4 L2523.1,1402.7 L2561.9,1430.0 L2556.3,1443.4 L2517.0,1416.8 L2477.8,1390.2 L2438.6,1363.5 L2399.6,1336.6 L2360.7,1309.5 L2322.2,1281.8 L2284.1,1253.6 L2246.1,1225.3 L2207.9,1197.2 L2169.3,1169.7 L2130.5,1142.6 L2091.4,1115.7 L2052.1,1089.3 L2012.3,1063.6 L1971.9,1038.7 L1931.1,1014.7 L1889.8,991.3 L1848.2,968.7 L1806.1,946.7 L1763.8,925.5 L1720.9,905.2 L1677.8,885.5 L1634.6,865.9 L1591.5,846.3 L1548.4,826.4 L1505.5,806.3 L1462.5,786.3 L1419.6,766.2 L1376.7,746.1 L1333.8,725.8 L1291.1,705.4 L1248.4,684.6 L1205.9,663.6 L1163.5,642.4 L1121.1,621.3 L1078.6,600.3 L1035.9,579.7 L993.1,559.4 L950.3,539.1Z" fill="#84462e" stroke="#2b130b" stroke-width="1.5" stroke-linejoin="round"/><path d="M949.5,541.3 L992.3,561.7 L1035.0,582.2 L1077.7,602.9 L1120.2,623.8 L1162.7,644.9 L1205.1,666.0 L1247.6,686.9 L1290.3,707.5 L1333.1,727.9 L1375.9,748.2 L1418.8,768.4 L1461.7,788.5 L1504.7,808.6 L1547.6,828.7 L1590.6,848.6 L1633.8,868.2 L1677.0,887.7 L1720.1,907.4 L1762.9,927.7 L1805.3,948.9 L1847.3,970.9 L1888.9,993.6 L1930.0,1017.1 L1970.8,1041.2 L2011.2,1066.0 L2051.1,1091.7 L2090.5,1118.0 L2129.6,1144.7 L2168.5,1171.8 L2207.1,1199.3 L2245.2,1227.4 L2283.2,1255.9 L2321.2,1284.1 L2359.6,1311.9 L2398.6,1338.9 L2437.7,1365.7 L2476.9,1392.3 L2516.2,1418.8 L2555.4,1445.3" fill="none" stroke="#2b130b" stroke-width="1"/><path d="M955.6,523.2 L998.9,542.6 L1042.1,562.2 L1085.1,582.4 L1127.6,603.4 L1169.7,625.2 L1211.8,647.2 L1254.0,669.0 L1296.4,690.2 L1339.1,710.8 L1382.1,731.0 L1425.1,751.0 L1468.2,770.9 L1511.3,790.7 L1554.3,810.7 L1597.4,830.5 L1640.6,850.2 L1683.8,869.9 L1726.9,889.8 L1769.7,910.2 L1812.2,931.3 L1854.5,952.8 L1896.5,974.8 L1938.1,997.7 L1979.2,1021.4 L2019.6,1046.4 L2059.0,1072.7 L2097.9,1099.9 L2136.5,1127.6 L2175.1,1155.2 L2213.8,1182.6 L2252.3,1210.3 L2290.8,1238.1 L2329.3,1265.8 L2367.9,1293.3 L2406.7,1320.7 L2445.5,1348.1 L2484.3,1375.4 L2523.1,1402.7 L2561.9,1430.0 L2559.2,1436.4 L2520.2,1409.4 L2481.2,1382.4 L2442.2,1355.4 L2403.3,1328.3 L2364.5,1301.1 L2325.9,1273.4 L2287.6,1245.5 L2249.4,1217.4 L2211.0,1189.6 L2172.3,1162.1 L2133.6,1134.7 L2094.8,1107.4 L2055.7,1080.6 L2016.1,1054.6 L1975.7,1029.7 L1934.8,1005.8 L1893.3,982.7 L1851.5,960.4 L1809.3,938.6 L1766.9,917.5 L1724.0,897.1 L1681.0,877.3 L1637.8,857.7 L1594.6,838.1 L1551.5,818.2 L1508.5,798.2 L1465.5,778.2 L1422.5,758.2 L1379.5,738.2 L1336.6,717.9 L1293.9,697.4 L1251.3,676.4 L1209.0,655.0 L1166.8,633.4 L1124.5,611.9 L1082.0,590.9 L1039.2,570.6 L996.1,550.6 L953.1,530.7Z" fill="#93513a" stroke="#2b130b" stroke-width="1.5" stroke-linejoin="round"/><path d="M2551.8,1424.3 L2718.3,1500.6 L2718.3,1520.8 L2551.8,1450.2Z" fill="#7e422b" stroke="#2b130b" stroke-width="1.5" stroke-linejoin="round"/><path d="M2551.8,1424.3 L2556.1,1426.2 L2560.4,1428.2 L2564.6,1430.1 L2568.9,1432.1 L2573.2,1434.0 L2577.4,1436.0 L2581.7,1438.0 L2586.0,1439.9 L2590.2,1441.9 L2594.5,1443.8 L2598.8,1445.8 L2603.0,1447.7 L2607.3,1449.7 L2611.6,1451.7 L2615.8,1453.6 L2620.1,1455.6 L2624.4,1457.5 L2628.6,1459.5 L2632.9,1461.4 L2637.2,1463.4 L2641.4,1465.4 L2645.7,1467.3 L2650.0,1469.3 L2654.2,1471.2 L2658.5,1473.2 L2662.8,1475.1 L2667.0,1477.1 L2671.3,1479.1 L2675.6,1481.0 L2679.8,1483.0 L2684.1,1484.9 L2688.4,1486.9 L2692.7,1488.8 L2696.9,1490.8 L2701.2,1492.8 L2705.5,1494.7 L2709.7,1496.7 L2714.0,1498.6 L2718.3,1500.6 L2718.3,1506.6 L2714.0,1504.7 L2709.7,1502.8 L2705.5,1500.9 L2701.2,1499.0 L2696.9,1497.1 L2692.7,1495.2 L2688.4,1493.3 L2684.1,1491.3 L2679.8,1489.4 L2675.6,1487.5 L2671.3,1485.6 L2667.0,1483.7 L2662.8,1481.8 L2658.5,1479.9 L2654.2,1477.9 L2650.0,1476.0 L2645.7,1474.1 L2641.4,1472.2 L2637.2,1470.3 L2632.9,1468.4 L2628.6,1466.5 L2624.4,1464.6 L2620.1,1462.6 L2615.8,1460.7 L2611.6,1458.8 L2607.3,1456.9 L2603.0,1455.0 L2598.8,1453.1 L2594.5,1451.2 L2590.2,1449.2 L2586.0,1447.3 L2581.7,1445.4 L2577.4,1443.5 L2573.2,1441.6 L2568.9,1439.7 L2564.6,1437.8 L2560.4,1435.9 L2556.1,1433.9 L2551.8,1432.0Z" fill="#92503a"/><path d="M2551.8,1424.3 L2718.3,1500.6 L2718.3,1520.8 L2551.8,1450.2Z" fill="none" stroke="#2b130b" stroke-width="1.5" stroke-linejoin="round"/><path d="M677.1,354.3 L958.1,524.4 L945.5,543.3 L675.3,366.9Z" fill="#7e422b" stroke="#2b130b" stroke-width="1.5" stroke-linejoin="round"/><path d="M677.1,354.3 L684.3,358.6 L691.5,363.0 L698.7,367.4 L705.9,371.7 L713.1,376.1 L720.3,380.5 L727.5,384.8 L734.7,389.2 L741.9,393.5 L749.1,397.9 L756.3,402.3 L763.5,406.6 L770.7,411.0 L777.9,415.4 L785.2,419.7 L792.4,424.1 L799.6,428.4 L806.8,432.8 L814.0,437.2 L821.2,441.5 L828.4,445.9 L835.6,450.3 L842.8,454.6 L850.0,459.0 L857.2,463.4 L864.4,467.7 L871.6,472.1 L878.8,476.4 L886.1,480.8 L893.3,485.2 L900.5,489.5 L907.7,493.9 L914.9,498.3 L922.1,502.6 L929.3,507.0 L936.5,511.3 L943.7,515.7 L950.9,520.1 L958.1,524.4 L954.3,530.1 L947.2,525.7 L940.1,521.3 L933.0,516.9 L925.8,512.5 L918.7,508.0 L911.6,503.6 L904.5,499.2 L897.4,494.8 L890.2,490.4 L883.1,486.0 L876.0,481.6 L868.9,477.2 L861.7,472.8 L854.6,468.3 L847.5,463.9 L840.4,459.5 L833.2,455.1 L826.1,450.7 L819.0,446.3 L811.9,441.9 L804.7,437.5 L797.6,433.1 L790.5,428.6 L783.4,424.2 L776.3,419.8 L769.1,415.4 L762.0,411.0 L754.9,406.6 L747.8,402.2 L740.6,397.8 L733.5,393.4 L726.4,388.9 L719.3,384.5 L712.1,380.1 L705.0,375.7 L697.9,371.3 L690.8,366.9 L683.6,362.5 L676.5,358.1Z" fill="#92503a"/><path d="M677.1,354.3 L958.1,524.4 L945.5,543.3 L675.3,366.9Z" fill="none" stroke="#2b130b" stroke-width="1.5" stroke-linejoin="round"/><path d="M651.8,316.5 L650.9,319.3 L649.8,322.9 L648.4,327.1 L646.9,331.9 L645.3,337.1 L643.7,342.4 L642.1,347.8 L640.5,353.0 L639.0,358.2 L637.4,363.7 L635.7,369.3 L634.0,375.0 L632.4,380.8 L630.8,386.7 L629.3,392.5 L627.9,398.4 L626.6,404.3 L625.3,410.3 L624.1,416.3 L622.9,422.3 L621.9,428.4 L620.9,434.4 L619.9,440.4 L619.1,446.3 L618.3,452.1 L617.6,457.7 L616.9,463.3 L616.3,468.8 L615.8,474.4 L615.4,480.1 L615.3,485.8 L615.3,491.7 L615.6,497.9 L616.0,504.4 L616.7,511.1 L617.5,517.8 L618.4,524.5 L619.4,530.8 L620.5,536.7 L621.6,542.1 L622.7,546.9 L623.9,551.1 L625.2,555.0 L626.6,558.6 L628.0,562.0 L629.6,565.3 L631.2,568.7 L632.9,572.3 L634.7,575.9 L636.4,579.3 L638.2,582.7 L640.2,586.1 L642.2,589.5 L644.5,593.1 L647.1,596.9 L650.0,601.0 L652.9,605.1 L655.7,609.0 L658.5,613.0 L661.7,617.2 L665.4,621.8 L669.8,627.0 L675.3,633.0 L681.9,640.0 L690.2,648.5 L700.3,658.5 L711.5,669.5 L723.4,681.0 L735.4,692.5 L747.0,703.5 L757.7,713.3 L766.9,721.6 L775.0,728.5 L782.7,734.5 L789.9,739.8 L796.5,744.4 L802.4,748.3 L807.6,751.7 L812.0,754.6 L815.5,757.0 L815.5,757.0 L815.6,753.3 L815.8,748.1 L816.1,742.0 L816.3,735.3 L816.5,728.4 L816.4,721.8 L816.1,716.0 L815.5,711.3 L814.8,707.9 L814.3,705.5 L813.7,703.7 L812.8,702.2 L811.4,700.8 L809.4,699.0 L806.3,696.8 L802.2,693.6 L796.5,689.5 L789.2,684.7 L780.8,679.4 L771.7,673.8 L762.6,668.1 L753.7,662.4 L745.7,657.0 L738.9,652.0 L733.3,647.4 L728.5,643.1 L724.2,639.0 L720.4,635.0 L716.8,630.9 L713.4,626.8 L710.0,622.5 L706.5,618.0 L702.9,613.1 L699.3,607.9 L695.8,602.4 L692.4,596.9 L689.2,591.5 L686.2,586.3 L683.3,581.5 L680.7,577.1 L678.4,573.4 L676.3,570.2 L674.4,567.4 L672.6,564.8 L671.1,562.3 L669.6,559.6 L668.2,556.6 L666.8,553.1 L665.4,549.3 L664.1,545.2 L662.9,541.0 L661.7,536.6 L660.7,532.1 L659.8,527.2 L659.1,522.2 L658.6,516.9 L658.3,511.3 L658.3,505.3 L658.4,499.0 L658.7,492.6 L659.2,486.0 L659.6,479.4 L660.2,472.9 L660.7,466.5 L661.3,460.2 L661.9,453.9 L662.6,447.6 L663.4,441.3 L664.3,434.9 L665.2,428.6 L666.1,422.3 L667.0,416.0 L668.0,409.6 L669.1,402.9 L670.3,396.2 L671.4,389.5 L672.6,383.0 L673.8,376.8 L674.8,370.9 L675.8,365.6 L676.7,360.7 L677.5,355.9 L678.3,351.5 L679.1,347.4 L679.8,343.6 L680.4,340.4 L680.9,337.6 L681.3,335.4Z" fill="#743a25" stroke="#2b130b" stroke-width="1.5" stroke-linejoin="round"/><path d="M651.8,316.5 L647.8,329.3 L643.7,342.2 L639.9,355.1 L636.1,368.0 L632.4,380.9 L629.0,393.9 L626.0,407.1 L623.3,420.3 L621.0,433.5 L619.0,446.8 L617.3,460.2 L615.8,473.5 L615.3,487.0 L615.8,500.4 L617.0,513.8 L618.9,527.1 L621.2,540.4 L624.7,553.4 L629.8,565.8 L635.7,577.9 L642.3,589.6 L649.8,600.8 L657.6,611.7 L665.9,622.4 L674.8,632.5 L684.1,642.2 L693.5,651.8 L703.1,661.3 L712.7,670.7 L722.3,680.0 L732.1,689.4 L741.8,698.6 L751.7,707.8 L761.6,716.9 L771.8,725.7 L782.2,734.1 L793.1,742.0 L804.3,749.6 L815.5,757.0 L815.5,757.0 L813.4,745.6 L811.3,734.2 L808.8,722.7 L805.2,711.1 L797.2,701.7 L787.2,693.9 L776.8,686.6 L766.4,679.3 L756.0,672.1 L745.6,664.8 L735.4,657.3 L725.6,649.2 L716.2,640.5 L707.6,631.2 L699.5,621.4 L691.8,611.2 L684.8,600.6 L678.1,589.8 L671.7,578.8 L665.1,567.9 L659.0,556.8 L654.9,544.8 L651.8,532.4 L649.8,519.8 L649.0,507.2 L649.0,494.4 L649.7,481.7 L650.8,469.0 L652.1,456.4 L653.6,443.7 L655.3,431.1 L657.3,418.5 L659.4,406.0 L661.8,393.5 L664.4,381.0 L666.9,368.6 L669.5,356.1 L672.2,343.7 L674.8,331.2Z" fill="#8c4a32"/><path d="M651.8,316.5 L650.9,319.3 L649.8,322.9 L648.4,327.1 L646.9,331.9 L645.3,337.1 L643.7,342.4 L642.1,347.8 L640.5,353.0 L639.0,358.2 L637.4,363.7 L635.7,369.3 L634.0,375.0 L632.4,380.8 L630.8,386.7 L629.3,392.5 L627.9,398.4 L626.6,404.3 L625.3,410.3 L624.1,416.3 L622.9,422.3 L621.9,428.4 L620.9,434.4 L619.9,440.4 L619.1,446.3 L618.3,452.1 L617.6,457.7 L616.9,463.3 L616.3,468.8 L615.8,474.4 L615.4,480.1 L615.3,485.8 L615.3,491.7 L615.6,497.9 L616.0,504.4 L616.7,511.1 L617.5,517.8 L618.4,524.5 L619.4,530.8 L620.5,536.7 L621.6,542.1 L622.7,546.9 L623.9,551.1 L625.2,555.0 L626.6,558.6 L628.0,562.0 L629.6,565.3 L631.2,568.7 L632.9,572.3 L634.7,575.9 L636.4,579.3 L638.2,582.7 L640.2,586.1 L642.2,589.5 L644.5,593.1 L647.1,596.9 L650.0,601.0 L652.9,605.1 L655.7,609.0 L658.5,613.0 L661.7,617.2 L665.4,621.8 L669.8,627.0 L675.3,633.0 L681.9,640.0 L690.2,648.5 L700.3,658.5 L711.5,669.5 L723.4,681.0 L735.4,692.5 L747.0,703.5 L757.7,713.3 L766.9,721.6 L775.0,728.5 L782.7,734.5 L789.9,739.8 L796.5,744.4 L802.4,748.3 L807.6,751.7 L812.0,754.6 L815.5,757.0 L815.5,757.0 L815.6,753.3 L815.8,748.1 L816.1,742.0 L816.3,735.3 L816.5,728.4 L816.4,721.8 L816.1,716.0 L815.5,711.3 L814.8,707.9 L814.3,705.5 L813.7,703.7 L812.8,702.2 L811.4,700.8 L809.4,699.0 L806.3,696.8 L802.2,693.6 L796.5,689.5 L789.2,684.7 L780.8,679.4 L771.7,673.8 L762.6,668.1 L753.7,662.4 L745.7,657.0 L738.9,652.0 L733.3,647.4 L728.5,643.1 L724.2,639.0 L720.4,635.0 L716.8,630.9 L713.4,626.8 L710.0,622.5 L706.5,618.0 L702.9,613.1 L699.3,607.9 L695.8,602.4 L692.4,596.9 L689.2,591.5 L686.2,586.3 L683.3,581.5 L680.7,577.1 L678.4,573.4 L676.3,570.2 L674.4,567.4 L672.6,564.8 L671.1,562.3 L669.6,559.6 L668.2,556.6 L666.8,553.1 L665.4,549.3 L664.1,545.2 L662.9,541.0 L661.7,536.6 L660.7,532.1 L659.8,527.2 L659.1,522.2 L658.6,516.9 L658.3,511.3 L658.3,505.3 L658.4,499.0 L658.7,492.6 L659.2,486.0 L659.6,479.4 L660.2,472.9 L660.7,466.5 L661.3,460.2 L661.9,453.9 L662.6,447.6 L663.4,441.3 L664.3,434.9 L665.2,428.6 L666.1,422.3 L667.0,416.0 L668.0,409.6 L669.1,402.9 L670.3,396.2 L671.4,389.5 L672.6,383.0 L673.8,376.8 L674.8,370.9 L675.8,365.6 L676.7,360.7 L677.5,355.9 L678.3,351.5 L679.1,347.4 L679.8,343.6 L680.4,340.4 L680.9,337.6 L681.3,335.4Z" fill="none" stroke="#2b130b" stroke-width="1.5" stroke-linejoin="round"/><path d="M651.8,316.5 L660.7,313.2 L681.3,335.4 L674.5,339.2Z" fill="#a7634a" stroke="#2b130b" stroke-width="1.2"/><path d="M2743.5,1487.1 L2744.4,1491.3 L2745.5,1496.8 L2746.8,1503.4 L2748.3,1510.7 L2749.9,1518.5 L2751.7,1526.6 L2753.5,1534.7 L2755.2,1542.6 L2757.2,1550.6 L2759.3,1559.1 L2761.6,1567.9 L2763.9,1576.9 L2766.2,1585.7 L2768.3,1594.3 L2770.3,1602.4 L2772.1,1609.9 L2773.5,1616.6 L2774.9,1622.8 L2776.0,1628.6 L2777.1,1634.1 L2778.0,1639.4 L2778.8,1644.6 L2779.5,1649.9 L2780.2,1655.4 L2780.8,1661.0 L2781.3,1666.8 L2781.7,1672.5 L2781.9,1678.1 L2782.1,1683.7 L2782.2,1689.2 L2782.2,1694.5 L2782.0,1699.6 L2781.7,1704.5 L2781.4,1709.3 L2780.9,1713.9 L2780.3,1718.3 L2779.7,1722.7 L2778.8,1726.9 L2777.8,1731.0 L2776.7,1734.9 L2775.4,1738.7 L2774.1,1742.4 L2772.6,1745.9 L2770.9,1749.3 L2769.1,1752.6 L2767.1,1755.7 L2764.9,1758.7 L2762.5,1761.5 L2759.8,1764.2 L2756.9,1766.8 L2753.9,1769.2 L2750.6,1771.5 L2747.1,1773.7 L2743.5,1775.7 L2739.8,1777.5 L2736.0,1779.2 L2732.0,1780.7 L2727.8,1782.1 L2723.4,1783.3 L2718.8,1784.4 L2714.3,1785.3 L2709.7,1786.0 L2705.1,1786.6 L2700.6,1787.1 L2696.2,1787.4 L2691.8,1787.5 L2687.4,1787.5 L2682.9,1787.3 L2678.5,1787.0 L2674.1,1786.5 L2669.7,1786.0 L2665.3,1785.3 L2661.0,1784.6 L2656.9,1783.8 L2652.8,1782.9 L2648.7,1781.9 L2644.5,1780.7 L2640.0,1779.3 L2635.2,1777.6 L2629.9,1775.6 L2623.7,1773.1 L2616.6,1769.9 L2609.0,1766.4 L2601.1,1762.6 L2593.6,1759.0 L2586.8,1755.7 L2581.0,1752.9 L2576.8,1750.9 L2593.9,1704.0 L2597.3,1705.6 L2601.7,1707.9 L2607.0,1710.6 L2612.9,1713.5 L2619.2,1716.6 L2625.5,1719.5 L2631.8,1722.1 L2637.6,1724.2 L2643.3,1726.0 L2649.0,1727.6 L2654.9,1729.0 L2660.8,1730.3 L2666.6,1731.4 L2672.2,1732.2 L2677.7,1732.8 L2682.9,1733.2 L2687.9,1733.3 L2692.9,1733.0 L2697.8,1732.6 L2702.4,1731.9 L2706.9,1731.0 L2711.1,1730.1 L2714.9,1729.0 L2718.3,1727.9 L2721.3,1726.8 L2723.9,1725.6 L2726.2,1724.3 L2728.2,1722.9 L2729.9,1721.4 L2731.5,1719.6 L2732.9,1717.7 L2734.2,1715.5 L2735.3,1713.3 L2736.2,1711.2 L2736.9,1709.1 L2737.4,1706.7 L2737.8,1703.9 L2738.1,1700.4 L2738.4,1696.1 L2738.6,1690.7 L2738.8,1683.9 L2738.9,1675.6 L2738.9,1666.4 L2738.9,1656.5 L2738.7,1646.6 L2738.5,1636.9 L2738.2,1627.9 L2737.8,1620.0 L2737.3,1613.3 L2736.7,1607.5 L2736.1,1602.2 L2735.3,1597.3 L2734.5,1592.5 L2733.6,1587.5 L2732.7,1582.2 L2731.7,1576.2 L2730.6,1569.6 L2729.3,1562.3 L2728.0,1554.6 L2726.6,1546.8 L2725.2,1539.1 L2723.9,1531.8 L2722.7,1525.0 L2721.6,1519.1 L2720.7,1513.8 L2719.9,1508.9 L2719.1,1504.4 L2718.5,1500.4 L2717.9,1496.8 L2717.4,1493.6 L2716.9,1491.0 L2716.6,1488.8Z" fill="#864731" stroke="#2b130b" stroke-width="1.5" stroke-linejoin="round"/><path d="M2743.5,1487.1 L2746.0,1499.2 L2748.5,1511.4 L2751.0,1523.5 L2753.6,1535.5 L2756.4,1547.6 L2759.4,1559.6 L2762.5,1571.5 L2765.6,1583.5 L2768.6,1595.5 L2771.5,1607.5 L2774.2,1619.6 L2776.6,1631.7 L2778.7,1643.9 L2780.3,1656.1 L2781.4,1668.5 L2782.0,1680.8 L2782.2,1693.2 L2781.7,1705.5 L2780.4,1717.8 L2778.1,1729.9 L2774.3,1741.7 L2769.0,1752.8 L2761.4,1762.6 L2752.0,1770.5 L2741.3,1776.8 L2729.9,1781.4 L2717.9,1784.5 L2705.7,1786.6 L2693.4,1787.5 L2681.1,1787.2 L2668.8,1785.8 L2656.6,1783.7 L2644.6,1780.7 L2632.9,1776.7 L2621.5,1772.1 L2610.2,1766.9 L2599.1,1761.6 L2587.9,1756.3 L2576.8,1750.9 L2580.2,1741.5 L2590.9,1746.7 L2601.5,1751.9 L2612.2,1757.0 L2623.0,1761.8 L2634.0,1766.3 L2645.2,1770.0 L2656.7,1772.9 L2668.3,1774.9 L2680.1,1776.3 L2691.9,1776.6 L2703.7,1775.8 L2715.4,1773.9 L2726.9,1770.9 L2737.8,1766.5 L2747.9,1760.3 L2756.4,1752.3 L2762.8,1742.6 L2767.2,1731.7 L2770.2,1720.4 L2772.1,1708.7 L2773.1,1696.9 L2773.5,1685.1 L2773.3,1673.3 L2772.8,1661.4 L2771.8,1649.6 L2770.4,1637.9 L2768.6,1626.2 L2766.3,1614.6 L2763.8,1603.0 L2761.2,1591.5 L2758.5,1579.9 L2755.6,1568.4 L2752.8,1557.0 L2750.1,1545.4 L2747.5,1533.9 L2745.1,1522.3 L2742.7,1510.7 L2740.4,1499.1 L2738.1,1487.5Z" fill="#9c5a42"/><path d="M2743.5,1487.1 L2744.4,1491.3 L2745.5,1496.8 L2746.8,1503.4 L2748.3,1510.7 L2749.9,1518.5 L2751.7,1526.6 L2753.5,1534.7 L2755.2,1542.6 L2757.2,1550.6 L2759.3,1559.1 L2761.6,1567.9 L2763.9,1576.9 L2766.2,1585.7 L2768.3,1594.3 L2770.3,1602.4 L2772.1,1609.9 L2773.5,1616.6 L2774.9,1622.8 L2776.0,1628.6 L2777.1,1634.1 L2778.0,1639.4 L2778.8,1644.6 L2779.5,1649.9 L2780.2,1655.4 L2780.8,1661.0 L2781.3,1666.8 L2781.7,1672.5 L2781.9,1678.1 L2782.1,1683.7 L2782.2,1689.2 L2782.2,1694.5 L2782.0,1699.6 L2781.7,1704.5 L2781.4,1709.3 L2780.9,1713.9 L2780.3,1718.3 L2779.7,1722.7 L2778.8,1726.9 L2777.8,1731.0 L2776.7,1734.9 L2775.4,1738.7 L2774.1,1742.4 L2772.6,1745.9 L2770.9,1749.3 L2769.1,1752.6 L2767.1,1755.7 L2764.9,1758.7 L2762.5,1761.5 L2759.8,1764.2 L2756.9,1766.8 L2753.9,1769.2 L2750.6,1771.5 L2747.1,1773.7 L2743.5,1775.7 L2739.8,1777.5 L2736.0,1779.2 L2732.0,1780.7 L2727.8,1782.1 L2723.4,1783.3 L2718.8,1784.4 L2714.3,1785.3 L2709.7,1786.0 L2705.1,1786.6 L2700.6,1787.1 L2696.2,1787.4 L2691.8,1787.5 L2687.4,1787.5 L2682.9,1787.3 L2678.5,1787.0 L2674.1,1786.5 L2669.7,1786.0 L2665.3,1785.3 L2661.0,1784.6 L2656.9,1783.8 L2652.8,1782.9 L2648.7,1781.9 L2644.5,1780.7 L2640.0,1779.3 L2635.2,1777.6 L2629.9,1775.6 L2623.7,1773.1 L2616.6,1769.9 L2609.0,1766.4 L2601.1,1762.6 L2593.6,1759.0 L2586.8,1755.7 L2581.0,1752.9 L2576.8,1750.9 L2593.9,1704.0 L2597.3,1705.6 L2601.7,1707.9 L2607.0,1710.6 L2612.9,1713.5 L2619.2,1716.6 L2625.5,1719.5 L2631.8,1722.1 L2637.6,1724.2 L2643.3,1726.0 L2649.0,1727.6 L2654.9,1729.0 L2660.8,1730.3 L2666.6,1731.4 L2672.2,1732.2 L2677.7,1732.8 L2682.9,1733.2 L2687.9,1733.3 L2692.9,1733.0 L2697.8,1732.6 L2702.4,1731.9 L2706.9,1731.0 L2711.1,1730.1 L2714.9,1729.0 L2718.3,1727.9 L2721.3,1726.8 L2723.9,1725.6 L2726.2,1724.3 L2728.2,1722.9 L2729.9,1721.4 L2731.5,1719.6 L2732.9,1717.7 L2734.2,1715.5 L2735.3,1713.3 L2736.2,1711.2 L2736.9,1709.1 L2737.4,1706.7 L2737.8,1703.9 L2738.1,1700.4 L2738.4,1696.1 L2738.6,1690.7 L2738.8,1683.9 L2738.9,1675.6 L2738.9,1666.4 L2738.9,1656.5 L2738.7,1646.6 L2738.5,1636.9 L2738.2,1627.9 L2737.8,1620.0 L2737.3,1613.3 L2736.7,1607.5 L2736.1,1602.2 L2735.3,1597.3 L2734.5,1592.5 L2733.6,1587.5 L2732.7,1582.2 L2731.7,1576.2 L2730.6,1569.6 L2729.3,1562.3 L2728.0,1554.6 L2726.6,1546.8 L2725.2,1539.1 L2723.9,1531.8 L2722.7,1525.0 L2721.6,1519.1 L2720.7,1513.8 L2719.9,1508.9 L2719.1,1504.4 L2718.5,1500.4 L2717.9,1496.8 L2717.4,1493.6 L2716.9,1491.0 L2716.6,1488.8Z" fill="none" stroke="#2b130b" stroke-width="1.5" stroke-linejoin="round"/><path d="M2716.6,1488.8 L2721.6,1484.8 L2743.5,1485.5 L2745.2,1490.5Z" fill="#a7634a" stroke="#2b130b" stroke-width="1.2"/><path d="M656.7,606.0 L658.1,606.8 L659.4,607.4 L660.9,608.0 L662.9,608.9 L665.5,610.5 L669.1,613.1 L673.8,616.8 L680.0,622.0 L688.0,629.2 L697.8,638.3 L708.9,648.8 L720.8,660.1 L733.2,671.7 L745.5,683.1 L757.2,693.7 L768.0,703.0 L778.0,711.2 L787.9,718.7 L797.5,725.8 L806.9,732.6 L816.0,739.0 L825.0,745.4 L833.6,751.6 L842.0,758.0 L850.1,764.4 L857.8,770.6 L865.3,776.8 L872.5,782.8 L879.5,788.7 L886.4,794.6 L893.2,800.3 L900.0,806.0 L906.2,811.1 L911.8,815.5 L916.9,819.5 L922.0,823.6 L927.5,828.0 L933.8,833.4 L941.1,839.9 L950.0,848.0 L960.8,858.2 L973.4,870.4 L987.2,884.0 L1001.7,898.3 L1016.4,912.8 L1030.7,926.8 L1044.1,939.7 L1056.0,951.0 L1065.8,960.1 L1073.6,967.3 L1080.4,973.5 L1086.8,979.2 L1093.8,985.1 L1102.1,992.1 L1112.6,1000.9 L1126.1,1012.0 L1143.4,1026.3 L1164.2,1043.4 L1187.3,1062.4 L1211.7,1082.3 L1236.2,1102.2 L1259.9,1121.1 L1281.5,1138.2 L1300.0,1152.5 L1315.5,1164.0 L1329.0,1173.5 L1340.9,1181.6 L1351.7,1188.5 L1361.8,1194.7 L1371.6,1200.6 L1381.5,1206.5 L1392.0,1213.0 L1402.4,1219.5 L1412.2,1225.6 L1421.7,1231.3 L1431.0,1237.0 L1440.6,1242.7 L1450.8,1248.6 L1461.8,1255.0 L1474.0,1262.0 L1486.9,1269.5 L1500.0,1277.2 L1513.6,1285.2 L1527.9,1293.6 L1543.2,1302.3 L1559.8,1311.4 L1577.8,1320.9 L1597.6,1331.0 L1620.0,1341.9 L1645.3,1353.8 L1672.4,1366.3 L1700.6,1379.2 L1728.9,1392.0 L1756.5,1404.4 L1782.5,1416.2 L1806.1,1427.0 L1826.9,1436.7 L1845.8,1445.6 L1863.3,1453.9 L1879.9,1461.8 L1896.3,1469.5 L1913.1,1477.2 L1930.8,1485.1 L1950.0,1493.5 L1971.0,1502.4 L1993.2,1511.6 L2016.3,1521.0 L2039.8,1530.4 L2063.2,1539.7 L2086.2,1548.6 L2108.1,1557.1 L2128.7,1565.0 L2147.5,1572.1 L2164.7,1578.4 L2180.9,1584.3 L2196.7,1589.9 L2212.5,1595.3 L2228.8,1601.0 L2246.3,1606.9 L2265.4,1613.4 L2286.5,1620.5 L2309.3,1628.0 L2333.3,1635.8 L2357.8,1643.8 L2382.3,1651.8 L2406.2,1659.6 L2429.1,1667.2 L2450.2,1674.4 L2469.9,1681.2 L2488.6,1687.9 L2506.6,1694.4 L2523.9,1700.7 L2540.5,1706.8 L2556.5,1712.8 L2572.0,1718.6 L2587.1,1724.2 L2602.1,1729.8 L2617.2,1735.6 L2632.0,1741.2 L2646.1,1746.7 L2659.1,1751.7 L2670.7,1756.2 L2680.5,1760.0 L2688.0,1762.9 L2629.9,1775.6 L2626.0,1773.8 L2620.9,1771.5 L2615.0,1768.7 L2608.2,1765.6 L2600.9,1762.2 L2593.1,1758.6 L2585.0,1754.8 L2576.8,1750.9 L2568.1,1746.7 L2558.4,1742.0 L2548.2,1737.0 L2537.6,1731.9 L2527.1,1726.8 L2517.0,1721.8 L2507.5,1717.2 L2499.0,1713.0 L2492.4,1709.6 L2487.9,1706.8 L2484.6,1704.5 L2481.3,1702.3 L2477.2,1699.9 L2471.3,1697.1 L2462.6,1693.6 L2450.2,1689.0 L2433.3,1683.2 L2412.4,1676.5 L2388.7,1669.0 L2363.3,1661.1 L2337.2,1653.0 L2311.4,1645.0 L2287.1,1637.3 L2265.4,1630.2 L2246.3,1623.8 L2228.8,1617.9 L2212.5,1612.3 L2196.7,1606.8 L2180.9,1601.3 L2164.7,1595.4 L2147.5,1589.0 L2128.7,1581.9 L2108.1,1574.1 L2086.2,1565.6 L2063.2,1556.7 L2039.8,1547.5 L2016.3,1538.2 L1993.2,1528.7 L1971.0,1519.4 L1950.0,1510.4 L1930.1,1501.4 L1910.7,1492.2 L1891.8,1482.9 L1873.5,1473.7 L1855.7,1464.7 L1838.5,1456.0 L1821.9,1447.7 L1806.0,1440.0 L1790.9,1432.9 L1776.7,1426.5 L1763.3,1420.5 L1750.4,1414.8 L1737.8,1409.2 L1725.4,1403.7 L1712.8,1398.0 L1700.0,1392.0 L1687.0,1385.8 L1674.0,1379.6 L1661.1,1373.3 L1648.2,1366.9 L1635.4,1360.5 L1622.7,1354.1 L1610.1,1347.6 L1597.6,1341.0 L1585.4,1334.4 L1573.4,1327.7 L1561.6,1321.0 L1549.9,1314.3 L1538.1,1307.4 L1526.2,1300.4 L1514.1,1293.3 L1501.7,1286.0 L1488.9,1278.4 L1475.7,1270.7 L1462.3,1262.7 L1448.7,1254.6 L1435.2,1246.5 L1421.8,1238.4 L1408.6,1230.3 L1395.8,1222.4 L1383.3,1214.6 L1371.1,1206.9 L1359.0,1199.2 L1347.0,1191.6 L1335.2,1183.9 L1323.4,1176.2 L1311.7,1168.4 L1300.0,1160.6 L1288.2,1152.7 L1276.5,1144.7 L1264.8,1136.8 L1253.1,1128.7 L1241.6,1120.6 L1230.2,1112.5 L1219.0,1104.3 L1208.0,1096.0 L1197.2,1087.5 L1186.5,1078.8 L1176.0,1070.0 L1165.6,1061.2 L1155.5,1052.4 L1145.5,1043.7 L1135.7,1035.3 L1126.1,1027.3 L1116.7,1019.6 L1107.6,1012.1 L1098.6,1004.8 L1089.8,997.7 L1081.2,990.8 L1072.9,984.0 L1064.7,977.2 L1056.7,970.6 L1049.1,964.2 L1041.9,958.3 L1035.1,952.6 L1028.4,947.0 L1021.6,941.2 L1014.8,935.2 L1007.6,928.6 L1000.0,921.4 L992.0,913.4 L983.8,904.8 L975.4,895.8 L966.8,886.4 L958.0,876.9 L949.0,867.4 L939.8,858.0 L930.4,849.0 L920.7,840.2 L910.6,831.4 L900.3,822.6 L889.9,813.9 L879.3,805.3 L868.7,796.9 L858.2,788.6 L847.9,780.5 L837.7,772.8 L827.7,765.5 L817.7,758.5 L807.7,751.6 L797.6,744.7 L787.5,737.4 L777.3,729.8 L766.9,721.6 L755.9,712.5 L744.1,702.5 L731.9,692.0 L719.8,681.3 L708.2,670.7 L697.4,660.7 L687.9,651.5 L680.0,643.6 L673.9,636.7 L669.2,630.5 L665.6,624.9 L662.9,619.9 L660.9,615.6 L659.4,611.8 L658.1,608.6 L656.7,606.0Z" fill="#864731" stroke="#2b130b" stroke-width="1.5" stroke-linejoin="round"/><path d="M656.7,606.0 L698.5,648.0 L742.7,688.9 L789.1,727.2 L838.1,762.4 L885.0,800.1 L931.3,838.6 L974.6,880.5 L1017.0,923.2 L1061.4,963.9 L1107.4,1002.8 L1153.9,1041.1 L1200.1,1079.7 L1247.4,1117.0 L1295.7,1153.0 L1345.5,1186.8 L1396.6,1218.7 L1448.2,1249.9 L1500.1,1280.4 L1552.3,1310.4 L1605.5,1338.7 L1659.6,1365.1 L1714.2,1390.5 L1769.1,1415.4 L1823.8,1440.5 L1878.1,1466.7 L1932.6,1492.3 L1987.9,1516.1 L2043.7,1538.8 L2099.8,1560.7 L2156.2,1582.0 L2212.9,1602.2 L2269.9,1621.7 L2327.2,1640.4 L2384.5,1658.8 L2441.8,1677.6 L2498.6,1697.7 L2553.7,1721.5 L2609.2,1744.8 L2664.8,1768.0" fill="none" stroke="#b87660" stroke-width="1"/><path d="M617.8,466.5 L632.8,483.2 L653.9,506.5 L679.2,534.4 L706.6,564.8 L734.3,595.5 L760.2,624.3 L782.6,649.2 L799.3,668.1 L809.8,680.3 L815.6,687.6 L818.1,691.5 L818.7,693.3 L818.9,694.5 L819.9,696.4 L823.3,700.5 L830.4,708.2 L841.0,719.2 L853.6,731.9 L868.0,746.1 L883.5,761.5 L899.9,777.6 L916.7,794.1 L933.6,810.8 L950.0,827.3 L966.5,844.2 L983.8,862.0 L1001.4,880.5 L1019.3,899.1 L1037.2,917.6 L1054.8,935.5 L1071.9,952.5 L1088.2,968.1 L1103.9,982.4 L1119.2,995.7 L1134.2,1008.2 L1148.8,1020.1 L1163.2,1031.4 L1177.1,1042.4 L1190.8,1053.3 L1204.2,1064.0 L1217.2,1074.6 L1229.7,1084.8 L1241.8,1094.8 L1253.6,1104.4 L1265.2,1113.8 L1276.8,1122.9 L1288.3,1131.7 L1300.0,1140.4 L1311.8,1148.8 L1323.5,1156.9 L1335.2,1164.7 L1346.9,1172.3 L1358.4,1179.7 L1369.8,1186.9 L1381.0,1194.0 L1392.0,1200.9 L1402.8,1207.7 L1413.6,1214.3 L1424.2,1220.8 L1434.7,1227.0 L1444.9,1233.1 L1454.9,1239.0 L1464.6,1244.7 L1474.0,1250.1 L1483.0,1255.2 L1491.7,1260.1 L1500.1,1264.7 L1508.2,1269.1 L1516.2,1273.4 L1524.0,1277.6 L1531.8,1281.8 L1539.5,1286.0 L1546.1,1289.8 L1551.0,1292.9 L1555.2,1295.8 L1559.6,1298.7 L1565.1,1302.0 L1572.7,1306.2 L1583.2,1311.6 L1597.6,1318.6 L1616.9,1327.7 L1640.7,1338.7 L1667.6,1351.0 L1696.5,1364.1 L1726.0,1377.4 L1755.0,1390.4 L1782.1,1402.4 L1806.1,1412.8 L1827.2,1421.8 L1846.6,1430.1 L1864.8,1437.7 L1882.1,1444.7 L1898.9,1451.4 L1915.6,1457.8 L1932.5,1464.1 L1950.0,1470.4 L1968.0,1476.6 L1986.1,1482.5 L2004.2,1488.1 L2022.3,1493.5 L2040.3,1498.8 L2058.2,1504.1 L2075.7,1509.3 L2093.0,1514.6 L2109.4,1519.9 L2124.6,1524.9 L2139.4,1530.0 L2154.1,1534.9 L2169.3,1540.0 L2185.5,1545.1 L2203.4,1550.4 L2223.3,1556.0 L2246.0,1561.9 L2271.1,1568.3 L2298.0,1574.8 L2325.8,1581.5 L2353.9,1588.0 L2381.3,1594.4 L2407.5,1600.5 L2431.5,1606.0 L2453.3,1611.0 L2473.5,1615.6 L2492.6,1619.8 L2511.0,1623.9 L2529.2,1627.8 L2547.6,1631.7 L2566.8,1635.8 L2587.1,1640.1 L2609.8,1644.8 L2634.9,1650.0 L2661.3,1655.4 L2687.6,1660.7 L2712.8,1665.8 L2735.5,1670.4 L2754.5,1674.2 L2768.7,1677.1 L2768.7,1691.1 L2754.5,1688.4 L2735.5,1684.8 L2712.8,1680.5 L2687.6,1675.7 L2661.3,1670.7 L2634.9,1665.6 L2609.8,1660.7 L2587.1,1656.2 L2566.8,1652.2 L2547.6,1648.4 L2529.2,1644.8 L2511.0,1641.1 L2492.6,1637.3 L2473.5,1633.3 L2453.3,1628.9 L2431.5,1624.0 L2407.5,1618.5 L2381.3,1612.4 L2353.9,1605.9 L2325.8,1599.2 L2298.0,1592.4 L2271.1,1585.7 L2246.0,1579.2 L2223.3,1573.1 L2203.4,1567.5 L2185.5,1562.1 L2169.3,1556.9 L2154.1,1551.8 L2139.4,1546.7 L2124.6,1541.7 L2109.4,1536.5 L2093.0,1531.2 L2075.7,1525.8 L2058.2,1520.5 L2040.3,1515.2 L2022.3,1509.8 L2004.2,1504.3 L1986.1,1498.6 L1968.0,1492.7 L1950.0,1486.4 L1932.5,1480.0 L1915.6,1473.6 L1898.9,1467.1 L1882.1,1460.3 L1864.8,1453.2 L1846.6,1445.5 L1827.2,1437.1 L1806.1,1427.9 L1782.1,1417.3 L1755.0,1405.2 L1726.0,1392.1 L1696.5,1378.6 L1667.6,1365.3 L1640.7,1352.8 L1616.9,1341.6 L1597.6,1332.4 L1583.2,1325.3 L1572.7,1319.9 L1565.1,1315.6 L1559.6,1312.3 L1555.2,1309.3 L1551.0,1306.5 L1546.1,1303.3 L1539.5,1299.5 L1531.8,1295.2 L1524.0,1290.9 L1516.2,1286.7 L1508.2,1282.4 L1500.1,1277.9 L1491.7,1273.3 L1483.0,1268.4 L1474.0,1263.2 L1464.6,1257.7 L1454.9,1252.0 L1444.9,1246.0 L1434.7,1239.9 L1424.2,1233.5 L1413.6,1227.0 L1402.8,1220.3 L1392.0,1213.5 L1381.0,1206.5 L1369.8,1199.3 L1358.4,1192.0 L1346.9,1184.5 L1335.2,1176.8 L1323.5,1168.9 L1311.8,1160.8 L1300.0,1152.4 L1288.3,1143.8 L1276.8,1135.1 L1265.2,1126.2 L1253.6,1117.1 L1241.8,1107.7 L1229.7,1098.0 L1217.2,1088.0 L1204.2,1077.7 L1190.8,1067.2 L1177.1,1056.7 L1163.2,1045.9 L1148.8,1034.9 L1134.2,1023.3 L1119.2,1011.1 L1103.9,998.0 L1088.2,984.0 L1071.9,968.6 L1054.8,951.9 L1037.2,934.1 L1019.3,915.8 L1001.4,897.3 L983.8,878.9 L966.5,861.1 L950.0,844.1 L933.6,827.5 L916.7,810.5 L899.9,793.5 L883.5,776.9 L868.0,761.2 L853.6,746.5 L841.0,733.4 L830.4,722.2 L823.3,714.4 L819.9,710.2 L818.9,708.3 L818.7,707.1 L818.1,705.3 L815.6,701.5 L809.8,694.2 L799.3,682.0 L782.6,663.0 L760.2,638.0 L734.3,609.0 L706.6,578.2 L679.2,547.7 L653.9,519.7 L632.8,496.2 L617.8,479.5Z" fill="#864731" stroke="#2b130b" stroke-width="1.5" stroke-linejoin="round"/><path d="M617.8,471.7 L661.4,520.0 L705.0,568.4 L748.5,616.7 L791.9,665.3 L832.3,715.8 L878.0,762.1 L924.1,808.0 L969.8,854.4 L1014.9,901.3 L1060.5,947.7 L1108.0,992.2 L1158.3,1033.5 L1209.5,1073.7 L1260.1,1114.6 L1312.1,1153.8 L1366.3,1189.7 L1421.5,1224.2 L1477.5,1257.3 L1534.6,1288.7 L1591.0,1320.9 L1649.9,1348.6 L1709.1,1375.6 L1768.5,1402.3 L1828.1,1428.3 L1888.2,1453.4 L1949.1,1476.5 L2010.9,1496.6 L2073.3,1515.2 L2135.2,1535.3 L2197.1,1555.4 L2259.9,1572.4 L2323.1,1587.9 L2386.5,1602.8 L2449.9,1617.4 L2513.5,1631.3 L2577.2,1644.5 L2641.0,1657.5 L2704.8,1670.1 L2768.7,1682.7" fill="none" stroke="#b87660" stroke-width="1"/><path d="M632.9,384.5 L648.8,403.3 L670.9,429.3 L697.3,460.3 L726.1,494.3 L755.5,528.9 L783.6,562.0 L808.5,591.5 L828.3,615.2 L843.2,633.2 L855.1,647.8 L864.6,659.7 L872.4,669.7 L879.1,678.4 L885.5,686.6 L892.3,695.2 L900.0,704.8 L908.2,714.8 L915.9,724.2 L923.3,733.2 L930.7,742.1 L938.2,751.1 L946.2,760.4 L954.7,770.3 L964.0,781.0 L974.4,792.7 L985.7,805.5 L997.7,818.8 L1010.0,832.5 L1022.4,846.1 L1034.5,859.2 L1046.0,871.7 L1056.7,883.0 L1066.4,893.2 L1075.5,902.5 L1084.2,911.2 L1092.5,919.5 L1100.6,927.4 L1108.9,935.3 L1117.3,943.4 L1126.1,951.7 L1135.1,960.2 L1144.0,968.6 L1153.0,977.1 L1162.1,985.5 L1171.4,993.9 L1181.1,1002.4 L1191.1,1011.0 L1201.7,1019.8 L1213.0,1028.8 L1224.9,1038.1 L1237.4,1047.5 L1250.1,1056.9 L1263.0,1066.3 L1275.7,1075.5 L1288.1,1084.4 L1300.0,1093.0 L1311.3,1101.2 L1322.2,1109.0 L1332.8,1116.6 L1343.3,1124.0 L1353.8,1131.3 L1364.5,1138.5 L1375.5,1145.7 L1387.0,1153.0 L1399.1,1160.2 L1411.5,1167.4 L1424.3,1174.5 L1437.3,1181.5 L1450.3,1188.6 L1463.4,1195.6 L1476.4,1202.7 L1489.1,1209.8 L1501.9,1217.2 L1515.1,1224.9 L1528.3,1232.7 L1541.4,1240.5 L1554.3,1248.1 L1566.6,1255.3 L1578.1,1261.9 L1588.7,1267.7 L1597.5,1272.4 L1604.2,1275.9 L1609.7,1278.6 L1614.9,1281.1 L1620.7,1283.6 L1627.9,1286.6 L1637.4,1290.6 L1650.0,1296.0 L1666.7,1303.1 L1687.0,1311.6 L1709.8,1321.1 L1733.9,1331.1 L1758.2,1341.2 L1781.5,1350.7 L1802.5,1359.4 L1820.2,1366.6 L1834.5,1372.4 L1846.4,1377.1 L1856.5,1381.1 L1865.3,1384.6 L1873.6,1387.7 L1881.7,1390.8 L1890.3,1394.0 L1900.0,1397.6 L1910.3,1401.5 L1920.5,1405.4 L1930.8,1409.3 L1941.2,1413.1 L1951.8,1417.0 L1962.8,1420.9 L1974.2,1424.8 L1986.2,1428.6 L1998.5,1432.4 L2010.8,1436.0 L2023.4,1439.7 L2036.5,1443.3 L2050.2,1447.0 L2064.7,1450.8 L2080.2,1454.8 L2097.0,1459.0 L2115.3,1463.5 L2135.1,1468.3 L2156.0,1473.3 L2177.7,1478.4 L2199.9,1483.5 L2222.1,1488.5 L2244.1,1493.2 L2265.4,1497.7 L2286.6,1501.9 L2308.1,1505.9 L2329.8,1509.8 L2351.4,1513.5 L2372.5,1517.1 L2393.1,1520.6 L2412.9,1523.9 L2431.5,1527.2 L2448.3,1530.3 L2463.3,1533.1 L2477.1,1535.8 L2490.5,1538.4 L2504.1,1540.9 L2518.7,1543.6 L2534.9,1546.4 L2553.5,1549.4 L2576.0,1552.9 L2602.4,1556.8 L2631.0,1560.9 L2660.3,1565.0 L2688.7,1569.0 L2714.5,1572.6 L2736.1,1575.7 L2751.9,1577.9 L2751.9,1589.9 L2736.1,1587.8 L2714.5,1585.0 L2688.7,1581.7 L2660.3,1577.9 L2631.0,1574.1 L2602.4,1570.2 L2576.0,1566.6 L2553.5,1563.4 L2534.9,1560.5 L2518.7,1557.9 L2504.1,1555.4 L2490.5,1553.0 L2477.1,1550.5 L2463.3,1548.0 L2448.3,1545.3 L2431.5,1542.3 L2412.9,1539.2 L2393.1,1535.9 L2372.5,1532.6 L2351.4,1529.1 L2329.8,1525.5 L2308.1,1521.7 L2286.6,1517.8 L2265.4,1513.7 L2244.1,1509.2 L2222.1,1504.5 L2199.9,1499.5 L2177.7,1494.3 L2156.0,1489.2 L2135.1,1484.2 L2115.3,1479.3 L2097.0,1474.8 L2080.2,1470.6 L2064.7,1466.6 L2050.2,1462.8 L2036.5,1459.1 L2023.4,1455.4 L2010.8,1451.8 L1998.5,1448.1 L1986.2,1444.3 L1974.2,1440.4 L1962.8,1436.6 L1951.8,1432.7 L1941.2,1428.8 L1930.8,1424.9 L1920.5,1421.0 L1910.3,1417.1 L1900.0,1413.2 L1890.3,1409.6 L1881.7,1406.4 L1873.6,1403.3 L1865.3,1400.1 L1856.5,1396.7 L1846.4,1392.7 L1834.5,1387.9 L1820.2,1382.1 L1802.5,1374.9 L1781.5,1366.2 L1758.2,1356.6 L1733.9,1346.6 L1709.8,1336.5 L1687.0,1327.0 L1666.7,1318.4 L1650.0,1311.3 L1637.4,1306.0 L1627.9,1302.0 L1620.7,1298.9 L1614.9,1296.4 L1609.7,1293.9 L1604.2,1291.2 L1597.5,1287.7 L1588.7,1283.0 L1578.1,1277.1 L1566.6,1270.5 L1554.3,1263.4 L1541.4,1255.8 L1528.3,1248.0 L1515.1,1240.1 L1501.9,1232.4 L1489.1,1225.0 L1476.4,1217.8 L1463.4,1210.8 L1450.3,1203.7 L1437.3,1196.7 L1424.3,1189.6 L1411.5,1182.5 L1399.1,1175.3 L1387.0,1168.1 L1375.5,1160.8 L1364.5,1153.6 L1353.8,1146.3 L1343.3,1139.0 L1332.8,1131.6 L1322.2,1124.0 L1311.3,1116.1 L1300.0,1108.0 L1288.1,1099.5 L1275.7,1090.6 L1263.0,1081.4 L1250.1,1072.1 L1237.4,1062.7 L1224.9,1053.3 L1213.0,1044.1 L1201.7,1035.2 L1191.1,1026.5 L1181.1,1017.9 L1171.4,1009.4 L1162.1,1001.0 L1153.0,992.7 L1144.0,984.3 L1135.1,975.9 L1126.1,967.4 L1117.3,959.1 L1108.9,951.0 L1100.6,942.9 L1092.5,934.8 L1084.2,926.6 L1075.5,917.9 L1066.4,908.8 L1056.7,899.0 L1046.0,888.3 L1034.5,876.8 L1022.4,864.8 L1010.0,852.4 L997.7,839.9 L985.7,827.7 L974.4,816.0 L964.0,805.0 L954.7,795.0 L946.2,785.7 L938.2,777.0 L930.7,768.5 L923.3,759.9 L915.9,751.0 L908.2,741.3 L900.0,730.8 L892.3,720.1 L885.5,710.0 L879.1,699.8 L872.4,688.9 L864.6,676.8 L855.1,662.8 L843.2,646.5 L828.3,627.2 L808.5,602.7 L783.6,572.6 L755.5,539.2 L726.1,504.4 L697.3,470.4 L670.9,439.4 L648.8,413.4 L632.9,394.5Z" fill="#864731" stroke="#2b130b" stroke-width="1.5" stroke-linejoin="round"/><path d="M632.9,384.5 L674.8,433.8 L716.7,483.2 L758.6,532.5 L800.4,581.9 L841.9,631.6 L882.1,682.3 L922.8,732.6 L964.8,781.9 L1007.9,830.1 L1051.7,877.7 L1097.1,923.9 L1143.9,968.6 L1192.1,1011.8 L1243.1,1051.7 L1295.4,1089.7 L1348.1,1127.4 L1402.6,1162.3 L1459.3,1193.4 L1515.6,1225.2 L1571.4,1258.1 L1629.2,1287.2 L1688.8,1312.3 L1748.6,1337.2 L1808.4,1361.8 L1868.5,1385.8 L1929.1,1408.6 L1990.2,1429.8 L2052.4,1447.6 L2115.2,1463.5 L2178.1,1478.5 L2241.3,1492.6 L2304.8,1505.3 L2368.5,1516.4 L2432.3,1527.4 L2495.9,1539.4 L2559.7,1550.4 L2623.7,1559.8 L2687.8,1568.9 L2751.9,1577.9 L2751.9,1581.9 L2687.7,1573.1 L2623.6,1564.2 L2559.5,1554.9 L2495.6,1544.1 L2432.0,1532.3 L2368.1,1521.5 L2304.3,1510.4 L2240.8,1497.8 L2177.6,1483.6 L2114.6,1468.6 L2051.8,1452.7 L1989.6,1434.8 L1928.4,1413.5 L1867.9,1390.7 L1807.7,1366.6 L1747.8,1342.0 L1688.0,1317.1 L1628.4,1291.9 L1570.7,1262.7 L1514.9,1229.8 L1458.5,1197.9 L1401.7,1166.8 L1347.3,1131.8 L1294.6,1094.1 L1242.2,1056.0 L1191.2,1016.2 L1143.0,972.9 L1096.2,928.2 L1050.7,882.1 L1006.2,835.0 L962.4,787.3 L920.2,738.2 L880.5,687.1 L841.5,635.5 L800.3,585.5 L758.6,536.0 L716.7,486.5 L674.8,437.2 L632.9,387.8Z" fill="#9c5a40"/><path d="M632.9,384.5 L648.8,403.3 L670.9,429.3 L697.3,460.3 L726.1,494.3 L755.5,528.9 L783.6,562.0 L808.5,591.5 L828.3,615.2 L843.2,633.2 L855.1,647.8 L864.6,659.7 L872.4,669.7 L879.1,678.4 L885.5,686.6 L892.3,695.2 L900.0,704.8 L908.2,714.8 L915.9,724.2 L923.3,733.2 L930.7,742.1 L938.2,751.1 L946.2,760.4 L954.7,770.3 L964.0,781.0 L974.4,792.7 L985.7,805.5 L997.7,818.8 L1010.0,832.5 L1022.4,846.1 L1034.5,859.2 L1046.0,871.7 L1056.7,883.0 L1066.4,893.2 L1075.5,902.5 L1084.2,911.2 L1092.5,919.5 L1100.6,927.4 L1108.9,935.3 L1117.3,943.4 L1126.1,951.7 L1135.1,960.2 L1144.0,968.6 L1153.0,977.1 L1162.1,985.5 L1171.4,993.9 L1181.1,1002.4 L1191.1,1011.0 L1201.7,1019.8 L1213.0,1028.8 L1224.9,1038.1 L1237.4,1047.5 L1250.1,1056.9 L1263.0,1066.3 L1275.7,1075.5 L1288.1,1084.4 L1300.0,1093.0 L1311.3,1101.2 L1322.2,1109.0 L1332.8,1116.6 L1343.3,1124.0 L1353.8,1131.3 L1364.5,1138.5 L1375.5,1145.7 L1387.0,1153.0 L1399.1,1160.2 L1411.5,1167.4 L1424.3,1174.5 L1437.3,1181.5 L1450.3,1188.6 L1463.4,1195.6 L1476.4,1202.7 L1489.1,1209.8 L1501.9,1217.2 L1515.1,1224.9 L1528.3,1232.7 L1541.4,1240.5 L1554.3,1248.1 L1566.6,1255.3 L1578.1,1261.9 L1588.7,1267.7 L1597.5,1272.4 L1604.2,1275.9 L1609.7,1278.6 L1614.9,1281.1 L1620.7,1283.6 L1627.9,1286.6 L1637.4,1290.6 L1650.0,1296.0 L1666.7,1303.1 L1687.0,1311.6 L1709.8,1321.1 L1733.9,1331.1 L1758.2,1341.2 L1781.5,1350.7 L1802.5,1359.4 L1820.2,1366.6 L1834.5,1372.4 L1846.4,1377.1 L1856.5,1381.1 L1865.3,1384.6 L1873.6,1387.7 L1881.7,1390.8 L1890.3,1394.0 L1900.0,1397.6 L1910.3,1401.5 L1920.5,1405.4 L1930.8,1409.3 L1941.2,1413.1 L1951.8,1417.0 L1962.8,1420.9 L1974.2,1424.8 L1986.2,1428.6 L1998.5,1432.4 L2010.8,1436.0 L2023.4,1439.7 L2036.5,1443.3 L2050.2,1447.0 L2064.7,1450.8 L2080.2,1454.8 L2097.0,1459.0 L2115.3,1463.5 L2135.1,1468.3 L2156.0,1473.3 L2177.7,1478.4 L2199.9,1483.5 L2222.1,1488.5 L2244.1,1493.2 L2265.4,1497.7 L2286.6,1501.9 L2308.1,1505.9 L2329.8,1509.8 L2351.4,1513.5 L2372.5,1517.1 L2393.1,1520.6 L2412.9,1523.9 L2431.5,1527.2 L2448.3,1530.3 L2463.3,1533.1 L2477.1,1535.8 L2490.5,1538.4 L2504.1,1540.9 L2518.7,1543.6 L2534.9,1546.4 L2553.5,1549.4 L2576.0,1552.9 L2602.4,1556.8 L2631.0,1560.9 L2660.3,1565.0 L2688.7,1569.0 L2714.5,1572.6 L2736.1,1575.7 L2751.9,1577.9 L2751.9,1589.9 L2736.1,1587.8 L2714.5,1585.0 L2688.7,1581.7 L2660.3,1577.9 L2631.0,1574.1 L2602.4,1570.2 L2576.0,1566.6 L2553.5,1563.4 L2534.9,1560.5 L2518.7,1557.9 L2504.1,1555.4 L2490.5,1553.0 L2477.1,1550.5 L2463.3,1548.0 L2448.3,1545.3 L2431.5,1542.3 L2412.9,1539.2 L2393.1,1535.9 L2372.5,1532.6 L2351.4,1529.1 L2329.8,1525.5 L2308.1,1521.7 L2286.6,1517.8 L2265.4,1513.7 L2244.1,1509.2 L2222.1,1504.5 L2199.9,1499.5 L2177.7,1494.3 L2156.0,1489.2 L2135.1,1484.2 L2115.3,1479.3 L2097.0,1474.8 L2080.2,1470.6 L2064.7,1466.6 L2050.2,1462.8 L2036.5,1459.1 L2023.4,1455.4 L2010.8,1451.8 L1998.5,1448.1 L1986.2,1444.3 L1974.2,1440.4 L1962.8,1436.6 L1951.8,1432.7 L1941.2,1428.8 L1930.8,1424.9 L1920.5,1421.0 L1910.3,1417.1 L1900.0,1413.2 L1890.3,1409.6 L1881.7,1406.4 L1873.6,1403.3 L1865.3,1400.1 L1856.5,1396.7 L1846.4,1392.7 L1834.5,1387.9 L1820.2,1382.1 L1802.5,1374.9 L1781.5,1366.2 L1758.2,1356.6 L1733.9,1346.6 L1709.8,1336.5 L1687.0,1327.0 L1666.7,1318.4 L1650.0,1311.3 L1637.4,1306.0 L1627.9,1302.0 L1620.7,1298.9 L1614.9,1296.4 L1609.7,1293.9 L1604.2,1291.2 L1597.5,1287.7 L1588.7,1283.0 L1578.1,1277.1 L1566.6,1270.5 L1554.3,1263.4 L1541.4,1255.8 L1528.3,1248.0 L1515.1,1240.1 L1501.9,1232.4 L1489.1,1225.0 L1476.4,1217.8 L1463.4,1210.8 L1450.3,1203.7 L1437.3,1196.7 L1424.3,1189.6 L1411.5,1182.5 L1399.1,1175.3 L1387.0,1168.1 L1375.5,1160.8 L1364.5,1153.6 L1353.8,1146.3 L1343.3,1139.0 L1332.8,1131.6 L1322.2,1124.0 L1311.3,1116.1 L1300.0,1108.0 L1288.1,1099.5 L1275.7,1090.6 L1263.0,1081.4 L1250.1,1072.1 L1237.4,1062.7 L1224.9,1053.3 L1213.0,1044.1 L1201.7,1035.2 L1191.1,1026.5 L1181.1,1017.9 L1171.4,1009.4 L1162.1,1001.0 L1153.0,992.7 L1144.0,984.3 L1135.1,975.9 L1126.1,967.4 L1117.3,959.1 L1108.9,951.0 L1100.6,942.9 L1092.5,934.8 L1084.2,926.6 L1075.5,917.9 L1066.4,908.8 L1056.7,899.0 L1046.0,888.3 L1034.5,876.8 L1022.4,864.8 L1010.0,852.4 L997.7,839.9 L985.7,827.7 L974.4,816.0 L964.0,805.0 L954.7,795.0 L946.2,785.7 L938.2,777.0 L930.7,768.5 L923.3,759.9 L915.9,751.0 L908.2,741.3 L900.0,730.8 L892.3,720.1 L885.5,710.0 L879.1,699.8 L872.4,688.9 L864.6,676.8 L855.1,662.8 L843.2,646.5 L828.3,627.2 L808.5,602.7 L783.6,572.6 L755.5,539.2 L726.1,504.4 L697.3,470.4 L670.9,439.4 L648.8,413.4 L632.9,394.5Z" fill="none" stroke="#2b130b" stroke-width="1.5" stroke-linejoin="round"/><path d="M632.9,387.8 L674.8,437.2 L716.7,486.5 L758.6,536.0 L800.3,585.5 L841.5,635.5 L880.5,687.1 L920.2,738.2 L962.4,787.3 L1006.2,835.0 L1050.7,882.1 L1096.2,928.2 L1143.0,972.9 L1191.2,1016.2 L1242.2,1056.0 L1294.6,1094.1 L1347.3,1131.8 L1401.7,1166.8 L1458.5,1197.9 L1514.9,1229.8 L1570.7,1262.7 L1628.4,1291.9 L1688.0,1317.1 L1747.8,1342.0 L1807.7,1366.6 L1867.9,1390.7 L1928.4,1413.5 L1989.6,1434.8 L2051.8,1452.7 L2114.6,1468.6 L2177.6,1483.6 L2240.8,1497.8 L2304.3,1510.4 L2368.1,1521.5 L2432.0,1532.3 L2495.6,1544.1 L2559.5,1554.9 L2623.6,1564.2 L2687.7,1573.1 L2751.9,1581.9" fill="none" stroke="#2b130b" stroke-width="1"/><path d="M632.9,391.1 L674.8,440.5 L716.8,489.9 L758.6,539.4 L800.3,589.1 L841.1,639.3 L878.9,691.9 L917.5,743.8 L960.1,792.7 L1004.5,839.9 L1049.6,886.4 L1095.3,932.4 L1142.1,977.1 L1190.2,1020.5 L1241.3,1060.4 L1293.8,1098.4 L1346.4,1136.1 L1400.9,1171.3 L1457.7,1202.5 L1514.1,1234.4 L1569.9,1267.3 L1627.6,1296.6 L1687.3,1321.9 L1747.1,1346.8 L1807.0,1371.5 L1867.2,1395.5 L1927.8,1418.4 L1989.0,1439.8 L2051.2,1457.7 L2114.1,1473.6 L2177.1,1488.8 L2240.3,1503.0 L2303.9,1515.6 L2367.7,1526.5 L2431.6,1537.2 L2495.4,1548.9 L2559.3,1559.5 L2623.5,1568.6 L2687.7,1577.2 L2751.9,1585.8" fill="none" stroke="#2b130b" stroke-width="1"/><path d="M648.1,344.2 L665.1,362.5 L688.7,388.0 L716.9,418.5 L747.7,451.8 L779.0,485.6 L808.7,517.8 L834.8,546.1 L855.3,568.4 L870.3,584.9 L882.0,597.8 L891.0,607.8 L897.9,615.7 L903.6,622.2 L908.6,628.0 L913.7,634.0 L919.6,640.8 L925.7,647.9 L931.1,654.3 L936.1,660.3 L940.7,665.9 L945.1,671.3 L949.5,676.6 L954.1,682.1 L959.0,687.9 L964.2,693.9 L969.5,700.1 L975.0,706.3 L980.4,712.5 L985.9,718.7 L991.2,724.7 L996.4,730.5 L1001.5,736.0 L1005.6,740.5 L1008.4,743.8 L1010.7,746.4 L1013.1,749.2 L1016.4,752.6 L1021.2,757.4 L1028.2,764.3 L1038.2,773.8 L1051.7,786.7 L1068.3,802.5 L1087.3,820.5 L1107.7,839.8 L1128.9,859.7 L1150.0,879.1 L1170.2,897.5 L1188.7,913.9 L1206.0,928.7 L1223.0,943.0 L1239.7,956.7 L1256.1,969.7 L1272.0,982.2 L1287.5,994.1 L1302.6,1005.3 L1317.2,1016.0 L1331.2,1025.8 L1344.5,1034.8 L1357.3,1043.0 L1369.7,1050.7 L1381.8,1058.0 L1393.9,1065.1 L1405.9,1072.2 L1418.1,1079.4 L1430.0,1086.5 L1441.5,1093.1 L1452.6,1099.4 L1463.8,1105.7 L1475.2,1112.1 L1487.2,1118.7 L1500.0,1125.8 L1513.9,1133.6 L1528.8,1142.1 L1544.4,1151.2 L1560.8,1160.7 L1577.7,1170.5 L1595.2,1180.5 L1613.1,1190.5 L1631.4,1200.4 L1650.0,1210.0 L1669.3,1219.6 L1689.7,1229.4 L1710.7,1239.3 L1732.0,1249.1 L1753.3,1258.7 L1774.2,1268.0 L1794.6,1276.9 L1813.9,1285.3 L1831.8,1293.0 L1848.3,1300.0 L1863.9,1306.5 L1879.4,1312.8 L1895.1,1319.0 L1911.7,1325.3 L1929.8,1331.8 L1949.9,1338.8 L1972.4,1346.3 L1997.1,1354.3 L2023.2,1362.5 L2050.1,1370.9 L2077.4,1379.1 L2104.2,1387.1 L2130.1,1394.7 L2154.4,1401.7 L2177.4,1408.2 L2199.7,1414.3 L2221.4,1420.1 L2242.6,1425.7 L2263.2,1430.9 L2283.4,1436.0 L2303.2,1440.8 L2322.5,1445.5 L2342.2,1450.1 L2362.5,1454.7 L2382.7,1459.0 L2402.3,1463.2 L2420.5,1467.0 L2436.8,1470.4 L2450.5,1473.2 L2461.0,1475.4 L2435.8,1505.6 L2427.4,1503.7 L2416.7,1501.2 L2404.0,1498.4 L2389.7,1495.1 L2374.0,1491.5 L2357.3,1487.6 L2340.1,1483.4 L2322.5,1479.1 L2304.4,1474.6 L2285.2,1469.7 L2265.1,1464.6 L2244.2,1459.3 L2222.5,1453.6 L2200.3,1447.8 L2177.5,1441.7 L2154.4,1435.4 L2129.9,1428.6 L2103.3,1421.3 L2075.7,1413.6 L2047.8,1405.8 L2020.4,1398.0 L1994.4,1390.4 L1970.6,1383.2 L1949.9,1376.6 L1932.4,1370.6 L1917.3,1365.0 L1904.3,1359.7 L1892.7,1354.7 L1882.2,1349.9 L1872.2,1345.2 L1862.2,1340.7 L1851.7,1336.3 L1841.5,1332.2 L1832.4,1328.7 L1823.9,1325.5 L1815.6,1322.3 L1807.2,1319.0 L1798.0,1315.4 L1787.8,1311.1 L1776.1,1306.1 L1762.6,1300.1 L1747.6,1293.4 L1731.5,1286.1 L1714.8,1278.5 L1697.8,1270.6 L1681.1,1262.8 L1665.0,1255.3 L1650.0,1248.1 L1635.8,1241.2 L1621.8,1234.4 L1608.1,1227.6 L1594.8,1221.0 L1582.0,1214.5 L1569.6,1208.1 L1557.8,1201.9 L1546.6,1196.0 L1536.3,1190.4 L1526.9,1185.1 L1518.1,1180.1 L1509.9,1175.2 L1501.8,1170.4 L1493.6,1165.5 L1485.1,1160.4 L1476.1,1155.0 L1466.4,1149.2 L1456.1,1143.0 L1445.5,1136.7 L1434.9,1130.2 L1424.4,1123.9 L1414.4,1117.8 L1405.0,1112.2 L1396.6,1107.1 L1389.5,1102.9 L1383.7,1099.6 L1378.7,1096.8 L1374.1,1094.2 L1369.4,1091.5 L1364.1,1088.4 L1357.8,1084.4 L1350.0,1079.4 L1340.7,1073.3 L1330.4,1066.3 L1319.2,1058.7 L1307.4,1050.7 L1295.1,1042.2 L1282.7,1033.5 L1270.2,1024.7 L1258.0,1016.0 L1245.9,1007.3 L1233.5,998.6 L1221.1,989.8 L1208.5,980.8 L1195.8,971.4 L1183.0,961.8 L1170.1,951.6 L1157.1,941.0 L1143.7,929.5 L1129.7,916.9 L1115.4,903.7 L1101.1,890.3 L1087.1,877.0 L1073.7,864.1 L1061.2,852.1 L1050.0,841.4 L1040.0,831.9 L1031.0,823.2 L1022.9,815.2 L1015.4,807.8 L1008.4,800.8 L1001.6,794.1 L995.1,787.5 L988.5,781.0 L982.1,774.7 L976.1,768.8 L970.4,763.3 L964.9,757.9 L959.5,752.7 L954.3,747.3 L948.9,741.8 L943.5,736.0 L938.0,729.8 L932.4,723.4 L926.9,716.8 L921.3,710.2 L915.9,703.5 L910.5,697.0 L905.2,690.6 L900.0,684.5 L894.9,678.7 L889.9,673.1 L884.9,667.7 L880.1,662.4 L875.3,657.2 L870.6,651.8 L866.0,646.4 L861.6,640.8 L858.4,636.2 L856.9,633.3 L856.2,631.0 L855.2,628.3 L853.1,624.2 L848.8,617.6 L841.5,607.5 L830.1,592.9 L812.8,571.5 L789.6,543.4 L762.7,510.8 L734.0,476.3 L705.5,442.1 L679.3,410.6 L657.4,384.4 L641.8,365.6Z" fill="#8e4f38" stroke="#2b130b" stroke-width="1.5" stroke-linejoin="round"/><path d="M648.1,344.2 L686.3,385.4 L724.4,426.7 L762.6,467.9 L800.8,509.2 L838.9,550.5 L876.8,592.0 L913.9,634.2 L950.0,677.2 L986.8,719.7 L1024.9,761.0 L1065.5,799.8 L1106.3,838.5 L1147.4,876.8 L1189.2,914.3 L1232.2,950.5 L1276.2,985.4 L1321.3,1018.9 L1368.3,1049.8 L1416.6,1078.5 L1465.3,1106.5 L1514.4,1133.9 L1563.0,1162.0 L1611.9,1189.8 L1661.7,1215.8 L1712.4,1240.1 L1763.6,1263.3 L1815.0,1285.8 L1866.8,1307.7 L1919.2,1328.0 L1972.3,1346.3 L2025.9,1363.4 L2079.6,1379.8 L2133.5,1395.7 L2187.6,1411.0 L2241.9,1425.5 L2296.4,1439.2 L2351.1,1452.1 L2406.0,1464.0 L2461.0,1475.4 L2457.5,1479.6 L2402.5,1468.0 L2347.6,1456.0 L2293.0,1443.0 L2238.5,1429.3 L2184.3,1414.8 L2130.2,1399.5 L2076.3,1383.7 L2022.5,1367.5 L1969.0,1350.5 L1916.0,1331.9 L1863.7,1311.3 L1811.9,1289.6 L1760.4,1267.1 L1709.3,1243.9 L1658.6,1219.6 L1608.8,1193.8 L1559.8,1166.2 L1511.2,1138.1 L1462.2,1110.6 L1413.6,1082.4 L1365.3,1053.7 L1318.5,1022.7 L1273.3,989.4 L1229.0,954.8 L1185.8,919.0 L1143.9,881.5 L1102.9,843.2 L1062.1,804.5 L1021.6,765.6 L983.2,724.6 L946.3,682.3 L910.2,639.3 L873.6,596.8 L836.3,554.8 L798.6,513.2 L760.8,471.7 L722.9,430.2 L685.1,388.7 L647.2,347.2Z" fill="#a5634b"/><path d="M647.2,347.2 L685.1,388.7 L722.9,430.2 L760.8,471.7 L798.6,513.2 L836.3,554.8 L873.6,596.8 L910.2,639.3 L946.3,682.3 L983.2,724.6 L1021.6,765.6 L1062.1,804.5 L1102.9,843.2 L1143.9,881.5 L1185.8,919.0 L1229.0,954.8 L1273.3,989.4 L1318.5,1022.7 L1365.3,1053.7 L1413.6,1082.4 L1462.2,1110.6 L1511.2,1138.1 L1559.8,1166.2 L1608.8,1193.8 L1658.6,1219.6 L1709.3,1243.9 L1760.4,1267.1 L1811.9,1289.6 L1863.7,1311.3 L1916.0,1331.9 L1969.0,1350.5 L2022.5,1367.5 L2076.3,1383.7 L2130.2,1399.5 L2184.3,1414.8 L2238.5,1429.3 L2293.0,1443.0 L2347.6,1456.0 L2402.5,1468.0 L2457.5,1479.6 L2453.4,1484.5 L2398.5,1472.7 L2343.7,1460.5 L2289.1,1447.3 L2234.7,1433.6 L2180.5,1419.1 L2126.4,1403.9 L2072.5,1388.3 L2018.7,1372.1 L1965.2,1355.2 L1912.3,1336.4 L1860.2,1315.5 L1808.3,1294.0 L1756.9,1271.5 L1705.8,1248.2 L1655.1,1224.0 L1605.2,1198.3 L1556.1,1171.1 L1507.5,1143.0 L1458.7,1115.2 L1410.2,1086.9 L1362.0,1058.2 L1315.2,1027.1 L1269.9,994.0 L1225.4,959.8 L1181.9,924.3 L1140.0,886.9 L1099.0,848.5 L1058.3,809.9 L1017.9,770.9 L979.2,730.2 L942.2,688.0 L906.0,645.1 L870.0,602.2 L833.4,559.7 L796.1,517.8 L758.6,476.0 L721.2,434.2 L683.7,392.4 L646.2,350.6Z" fill="#9d5a42"/><path d="M648.1,344.2 L665.1,362.5 L688.7,388.0 L716.9,418.5 L747.7,451.8 L779.0,485.6 L808.7,517.8 L834.8,546.1 L855.3,568.4 L870.3,584.9 L882.0,597.8 L891.0,607.8 L897.9,615.7 L903.6,622.2 L908.6,628.0 L913.7,634.0 L919.6,640.8 L925.7,647.9 L931.1,654.3 L936.1,660.3 L940.7,665.9 L945.1,671.3 L949.5,676.6 L954.1,682.1 L959.0,687.9 L964.2,693.9 L969.5,700.1 L975.0,706.3 L980.4,712.5 L985.9,718.7 L991.2,724.7 L996.4,730.5 L1001.5,736.0 L1005.6,740.5 L1008.4,743.8 L1010.7,746.4 L1013.1,749.2 L1016.4,752.6 L1021.2,757.4 L1028.2,764.3 L1038.2,773.8 L1051.7,786.7 L1068.3,802.5 L1087.3,820.5 L1107.7,839.8 L1128.9,859.7 L1150.0,879.1 L1170.2,897.5 L1188.7,913.9 L1206.0,928.7 L1223.0,943.0 L1239.7,956.7 L1256.1,969.7 L1272.0,982.2 L1287.5,994.1 L1302.6,1005.3 L1317.2,1016.0 L1331.2,1025.8 L1344.5,1034.8 L1357.3,1043.0 L1369.7,1050.7 L1381.8,1058.0 L1393.9,1065.1 L1405.9,1072.2 L1418.1,1079.4 L1430.0,1086.5 L1441.5,1093.1 L1452.6,1099.4 L1463.8,1105.7 L1475.2,1112.1 L1487.2,1118.7 L1500.0,1125.8 L1513.9,1133.6 L1528.8,1142.1 L1544.4,1151.2 L1560.8,1160.7 L1577.7,1170.5 L1595.2,1180.5 L1613.1,1190.5 L1631.4,1200.4 L1650.0,1210.0 L1669.3,1219.6 L1689.7,1229.4 L1710.7,1239.3 L1732.0,1249.1 L1753.3,1258.7 L1774.2,1268.0 L1794.6,1276.9 L1813.9,1285.3 L1831.8,1293.0 L1848.3,1300.0 L1863.9,1306.5 L1879.4,1312.8 L1895.1,1319.0 L1911.7,1325.3 L1929.8,1331.8 L1949.9,1338.8 L1972.4,1346.3 L1997.1,1354.3 L2023.2,1362.5 L2050.1,1370.9 L2077.4,1379.1 L2104.2,1387.1 L2130.1,1394.7 L2154.4,1401.7 L2177.4,1408.2 L2199.7,1414.3 L2221.4,1420.1 L2242.6,1425.7 L2263.2,1430.9 L2283.4,1436.0 L2303.2,1440.8 L2322.5,1445.5 L2342.2,1450.1 L2362.5,1454.7 L2382.7,1459.0 L2402.3,1463.2 L2420.5,1467.0 L2436.8,1470.4 L2450.5,1473.2 L2461.0,1475.4 L2435.8,1505.6 L2427.4,1503.7 L2416.7,1501.2 L2404.0,1498.4 L2389.7,1495.1 L2374.0,1491.5 L2357.3,1487.6 L2340.1,1483.4 L2322.5,1479.1 L2304.4,1474.6 L2285.2,1469.7 L2265.1,1464.6 L2244.2,1459.3 L2222.5,1453.6 L2200.3,1447.8 L2177.5,1441.7 L2154.4,1435.4 L2129.9,1428.6 L2103.3,1421.3 L2075.7,1413.6 L2047.8,1405.8 L2020.4,1398.0 L1994.4,1390.4 L1970.6,1383.2 L1949.9,1376.6 L1932.4,1370.6 L1917.3,1365.0 L1904.3,1359.7 L1892.7,1354.7 L1882.2,1349.9 L1872.2,1345.2 L1862.2,1340.7 L1851.7,1336.3 L1841.5,1332.2 L1832.4,1328.7 L1823.9,1325.5 L1815.6,1322.3 L1807.2,1319.0 L1798.0,1315.4 L1787.8,1311.1 L1776.1,1306.1 L1762.6,1300.1 L1747.6,1293.4 L1731.5,1286.1 L1714.8,1278.5 L1697.8,1270.6 L1681.1,1262.8 L1665.0,1255.3 L1650.0,1248.1 L1635.8,1241.2 L1621.8,1234.4 L1608.1,1227.6 L1594.8,1221.0 L1582.0,1214.5 L1569.6,1208.1 L1557.8,1201.9 L1546.6,1196.0 L1536.3,1190.4 L1526.9,1185.1 L1518.1,1180.1 L1509.9,1175.2 L1501.8,1170.4 L1493.6,1165.5 L1485.1,1160.4 L1476.1,1155.0 L1466.4,1149.2 L1456.1,1143.0 L1445.5,1136.7 L1434.9,1130.2 L1424.4,1123.9 L1414.4,1117.8 L1405.0,1112.2 L1396.6,1107.1 L1389.5,1102.9 L1383.7,1099.6 L1378.7,1096.8 L1374.1,1094.2 L1369.4,1091.5 L1364.1,1088.4 L1357.8,1084.4 L1350.0,1079.4 L1340.7,1073.3 L1330.4,1066.3 L1319.2,1058.7 L1307.4,1050.7 L1295.1,1042.2 L1282.7,1033.5 L1270.2,1024.7 L1258.0,1016.0 L1245.9,1007.3 L1233.5,998.6 L1221.1,989.8 L1208.5,980.8 L1195.8,971.4 L1183.0,961.8 L1170.1,951.6 L1157.1,941.0 L1143.7,929.5 L1129.7,916.9 L1115.4,903.7 L1101.1,890.3 L1087.1,877.0 L1073.7,864.1 L1061.2,852.1 L1050.0,841.4 L1040.0,831.9 L1031.0,823.2 L1022.9,815.2 L1015.4,807.8 L1008.4,800.8 L1001.6,794.1 L995.1,787.5 L988.5,781.0 L982.1,774.7 L976.1,768.8 L970.4,763.3 L964.9,757.9 L959.5,752.7 L954.3,747.3 L948.9,741.8 L943.5,736.0 L938.0,729.8 L932.4,723.4 L926.9,716.8 L921.3,710.2 L915.9,703.5 L910.5,697.0 L905.2,690.6 L900.0,684.5 L894.9,678.7 L889.9,673.1 L884.9,667.7 L880.1,662.4 L875.3,657.2 L870.6,651.8 L866.0,646.4 L861.6,640.8 L858.4,636.2 L856.9,633.3 L856.2,631.0 L855.2,628.3 L853.1,624.2 L848.8,617.6 L841.5,607.5 L830.1,592.9 L812.8,571.5 L789.6,543.4 L762.7,510.8 L734.0,476.3 L705.5,442.1 L679.3,410.6 L657.4,384.4 L641.8,365.6Z" fill="none" stroke="#2b130b" stroke-width="1.5" stroke-linejoin="round"/><path d="M647.2,347.2 L685.1,388.7 L722.9,430.2 L760.8,471.7 L798.6,513.2 L836.3,554.8 L873.6,596.8 L910.2,639.3 L946.3,682.3 L983.2,724.6 L1021.6,765.6 L1062.1,804.5 L1102.9,843.2 L1143.9,881.5 L1185.8,919.0 L1229.0,954.8 L1273.3,989.4 L1318.5,1022.7 L1365.3,1053.7 L1413.6,1082.4 L1462.2,1110.6 L1511.2,1138.1 L1559.8,1166.2 L1608.8,1193.8 L1658.6,1219.6 L1709.3,1243.9 L1760.4,1267.1 L1811.9,1289.6 L1863.7,1311.3 L1916.0,1331.9 L1969.0,1350.5 L2022.5,1367.5 L2076.3,1383.7 L2130.2,1399.5 L2184.3,1414.8 L2238.5,1429.3 L2293.0,1443.0 L2347.6,1456.0 L2402.5,1468.0 L2457.5,1479.6" fill="none" stroke="#2b130b" stroke-width="1"/><path d="M646.7,348.9 L684.4,390.6 L722.1,432.2 L759.7,473.8 L797.3,515.5 L834.9,557.3 L871.8,599.5 L908.1,642.2 L944.3,685.1 L981.2,727.4 L1019.7,768.3 L1060.2,807.2 L1100.9,845.9 L1142.0,884.2 L1183.9,921.6 L1227.2,957.3 L1271.6,991.7 L1316.9,1024.9 L1363.7,1055.9 L1411.9,1084.6 L1460.5,1112.9 L1509.3,1140.5 L1557.9,1168.7 L1607.0,1196.1 L1656.9,1221.8 L1707.5,1246.0 L1758.7,1269.3 L1810.1,1291.8 L1862.0,1313.4 L1914.1,1334.2 L1967.1,1352.9 L2020.6,1369.8 L2074.4,1386.0 L2128.3,1401.7 L2182.4,1416.9 L2236.6,1431.4 L2291.1,1445.2 L2345.7,1458.3 L2400.5,1470.4 L2455.5,1482.0" fill="none" stroke="#2b130b" stroke-width="1"/><path d="M646.2,350.6 L683.7,392.4 L721.2,434.2 L758.6,476.0 L796.1,517.8 L833.4,559.7 L870.0,602.2 L906.0,645.1 L942.2,688.0 L979.2,730.2 L1017.9,770.9 L1058.3,809.9 L1099.0,848.5 L1140.0,886.9 L1181.9,924.3 L1225.4,959.8 L1269.9,994.0 L1315.2,1027.1 L1362.0,1058.2 L1410.2,1086.9 L1458.7,1115.2 L1507.5,1143.0 L1556.1,1171.1 L1605.2,1198.3 L1655.1,1224.0 L1705.8,1248.2 L1756.9,1271.5 L1808.3,1294.0 L1860.2,1315.5 L1912.3,1336.4 L1965.2,1355.2 L2018.7,1372.1 L2072.5,1388.3 L2126.4,1403.9 L2180.5,1419.1 L2234.7,1433.6 L2289.1,1447.3 L2343.7,1460.5 L2398.5,1472.7 L2453.4,1484.5" fill="none" stroke="#2b130b" stroke-width="1"/><path d="M2439.2,1480.4 L2447.4,1481.5 L2457.8,1482.9 L2470.1,1484.5 L2484.1,1486.3 L2499.7,1488.4 L2516.6,1490.6 L2534.6,1493.0 L2553.5,1495.5 L2575.3,1498.5 L2601.1,1501.9 L2629.3,1505.7 L2658.2,1509.6 L2686.1,1513.4 L2711.6,1516.8 L2732.9,1519.7 L2748.5,1521.8 L2755.2,1546.0 L2739.1,1544.4 L2717.0,1542.4 L2690.6,1539.9 L2661.6,1537.2 L2631.7,1534.3 L2602.6,1531.3 L2576.0,1528.5 L2553.5,1525.8 L2534.1,1523.2 L2515.7,1520.3 L2498.6,1517.4 L2482.9,1514.5 L2468.7,1511.7 L2456.3,1509.3 L2445.9,1507.2 L2437.5,1505.6Z" fill="#8e4f38" stroke="#2b130b" stroke-width="1.5" stroke-linejoin="round"/><path d="M2439.2,1480.4 L2447.1,1481.5 L2455.0,1482.5 L2463.0,1483.6 L2470.9,1484.6 L2478.8,1485.6 L2486.8,1486.7 L2494.7,1487.7 L2502.6,1488.8 L2510.6,1489.8 L2518.5,1490.9 L2526.4,1491.9 L2534.4,1493.0 L2542.3,1494.1 L2550.2,1495.1 L2558.2,1496.2 L2566.1,1497.2 L2574.0,1498.3 L2582.0,1499.4 L2589.9,1500.4 L2597.8,1501.5 L2605.8,1502.6 L2613.7,1503.6 L2621.6,1504.7 L2629.6,1505.8 L2637.5,1506.8 L2645.4,1507.9 L2653.3,1509.0 L2661.3,1510.0 L2669.2,1511.1 L2677.1,1512.2 L2685.1,1513.2 L2693.0,1514.3 L2700.9,1515.4 L2708.9,1516.4 L2716.8,1517.5 L2724.7,1518.6 L2732.7,1519.6 L2740.6,1520.7 L2748.5,1521.8 L2749.3,1524.7 L2741.4,1523.6 L2733.4,1522.6 L2725.4,1521.6 L2717.5,1520.5 L2709.5,1519.5 L2701.6,1518.5 L2693.6,1517.5 L2685.6,1516.4 L2677.7,1515.4 L2669.7,1514.4 L2661.8,1513.3 L2653.8,1512.3 L2645.8,1511.3 L2637.9,1510.2 L2629.9,1509.2 L2621.9,1508.2 L2614.0,1507.1 L2606.0,1506.1 L2598.1,1505.0 L2590.1,1504.0 L2582.1,1503.0 L2574.2,1501.9 L2566.2,1500.9 L2558.3,1499.8 L2550.3,1498.8 L2542.4,1497.7 L2534.4,1496.6 L2526.4,1495.5 L2518.5,1494.5 L2510.5,1493.4 L2502.6,1492.3 L2494.6,1491.2 L2486.7,1490.1 L2478.7,1489.0 L2470.8,1487.9 L2462.8,1486.8 L2454.9,1485.7 L2446.9,1484.5 L2439.0,1483.4Z" fill="#a5634b"/><path d="M2439.2,1480.4 L2447.4,1481.5 L2457.8,1482.9 L2470.1,1484.5 L2484.1,1486.3 L2499.7,1488.4 L2516.6,1490.6 L2534.6,1493.0 L2553.5,1495.5 L2575.3,1498.5 L2601.1,1501.9 L2629.3,1505.7 L2658.2,1509.6 L2686.1,1513.4 L2711.6,1516.8 L2732.9,1519.7 L2748.5,1521.8 L2755.2,1546.0 L2739.1,1544.4 L2717.0,1542.4 L2690.6,1539.9 L2661.6,1537.2 L2631.7,1534.3 L2602.6,1531.3 L2576.0,1528.5 L2553.5,1525.8 L2534.1,1523.2 L2515.7,1520.3 L2498.6,1517.4 L2482.9,1514.5 L2468.7,1511.7 L2456.3,1509.3 L2445.9,1507.2 L2437.5,1505.6Z" fill="none" stroke="#2b130b" stroke-width="1.5" stroke-linejoin="round"/></svg>
<div id="tb"><div class="topline"></div><div class="line"></div>
<div class="abs" style="left:0;top:2px;width:3.8px;height:2050px;background:#f1f1f1"></div>
<div class="abs" style="left:24px;top:20px;width:196px;height:106px;border:1.5px solid #cbcbcb;border-radius:9px"></div>
<div class="abs" style="left:36.2px;top:59px;height:26px;line-height:26px;font-weight:bold;font-size:18.9px;letter-spacing:.4px;color:#2e2e2e">KONSTRUKTION</div>
<div class="dd" style="left:198.5px;top:69.5px"></div>
<div class="tab" style="left:270.7px;color:#0f92d4">VOLUMENKÖRPER</div>
<div class="tab" style="left:529.4px">FLÄCHE</div>
<div class="tab" style="left:683.6px">NETZ</div>
<div class="tab" style="left:810.9px">BLECH</div>
<div class="tab" style="left:956.1px">KUNSTSTOFF</div>
<div class="tab" style="left:1162.9px">DIENSTPROGRAMME</div>
<div class="abs" style="left:250px;top:37px;width:220px;height:5px;background:#0696d7"></div>
<div class="grp" style="left:396.2px">ERSTELLEN</div>
<div class="dd" style="left:512px;top:122.5px"></div>
<div class="grp" style="left:723.5px">AUTOMATISIEREN</div>
<div class="dd" style="left:898.5px;top:122.5px"></div>
<div class="grp" style="left:1115.1px">ÄNDERN</div>
<div class="dd" style="left:1201px;top:122.5px"></div>
<div class="grp" style="left:1427px">ZUSAMMENFÜGEN</div>
<div class="dd" style="left:1608.8px;top:122.5px"></div>
<div class="grp" style="left:1670.6px">KONSTRUIEREN</div>
<div class="dd" style="left:1828.6px;top:122.5px"></div>
<div class="grp" style="left:1886.7px">PRÜFEN</div>
<div class="dd" style="left:1969.7px;top:122.5px"></div>
<div class="grp" style="left:2025.5px">EINFÜGEN</div>
<div class="dd" style="left:2127.7px;top:122.5px"></div>
<div class="grp" style="left:2189.9px">AUSWÄHLEN</div>
<div class="dd" style="left:2316.8px;top:122.5px"></div>
<div class="sep" style="left:695.8px"></div>
<div class="sep" style="left:930.5px"></div>
<div class="sep" style="left:1401.5px"></div>
<div class="sep" style="left:1644.5px"></div>
<div class="sep" style="left:1861.5px"></div>
<div class="sep" style="left:1999.8px"></div>
<div class="sep" style="left:2163.2px"></div>
<svg style="left:240px;top:40px;width:300px;height:70px" viewBox="0 0 2380 555"><g stroke="#666" stroke-width="11" fill="none" stroke-linecap="butt"><path d="M115,85 H415 M78,120 V430 M455,120 V315 M115,462 H305"/><path d="M212,185 H320 M177,222 V328 M357,222 Q345,330 212,365"/></g><rect x="57" y="64" width="42" height="42" fill="#666"/><rect x="434" y="64" width="42" height="42" fill="#666"/><rect x="57" y="441" width="42" height="42" fill="#666"/><rect x="156" y="164" width="42" height="42" fill="#666"/><rect x="336" y="164" width="42" height="42" fill="#666"/><rect x="156" y="341" width="42" height="42" fill="#666"/><path d="M378,317 h55 v67 h67 v55 h-67 v67 h-55 v-67 h-67 v-55 h67 z" fill="#2faa50" stroke="#239443" stroke-width="5"/><polygon points="668,450 920,450 920,505 668,505" fill="#b6b6b6"/><polygon points="920,450 1000,365 1000,420 920,505" fill="#a2a2a2"/><polygon points="668,150 750,65 1000,65 920,150" fill="#8ecbfa"/><polygon points="920,150 1000,65 1000,350 920,437" fill="#4a96d0"/><polygon points="668,150 920,150 920,437 668,437" fill="#6ab0e4"/><path d="M1048,428 V125" stroke="#2b2b2b" stroke-width="11"/><polygon points="1013,132 1085,132 1049,76" fill="#2b2b2b"/><path d="M1255,255 Q1470,75 1690,240 L1610,325 Q1470,235 1335,325 Z" fill="#8ecbfa"/><path d="M1335,325 Q1470,235 1610,325 L1610,455 Q1470,365 1335,465 Z" fill="#6ab0e4"/><path d="M1255,255 L1335,325 L1335,465 L1255,385 Z" fill="#4a96d0"/><path d="M1615,328 L1690,262 L1690,378 L1615,448 Z" fill="#fff" stroke="#666" stroke-width="12" stroke-linejoin="miter"/><path d="M1662,165 Q1480,45 1300,148" fill="none" stroke="#2b2b2b" stroke-width="10"/><polygon points="1256,178 1280,112 1340,165" fill="#2b2b2b"/><polygon points="1852,150 1930,68 2290,68 2210,150" fill="#f4f4f4" stroke="#686868" stroke-width="9" stroke-linejoin="round"/><polygon points="2210,150 2290,68 2290,420 2210,500" fill="#bdbdbd" stroke="#686868" stroke-width="9" stroke-linejoin="round"/><polygon points="1852,150 2210,150 2210,500 1852,500" fill="#dcdcdc" stroke="#686868" stroke-width="9" stroke-linejoin="round"/><circle cx="2035" cy="320" r="110" fill="#fff" stroke="#686868" stroke-width="10"/><path d="M2012,238 A88,88 0 1 0 2122,328 A95,95 0 0 1 2012,238 Z" fill="#6ab0e4" stroke="#4a96d0" stroke-width="4"/></svg>
<svg style="left:540px;top:40px;width:320px;height:70px" viewBox="0 0 2380 521"><path d="M165,133 H320 M107,195 V345 M165,407 H320" stroke="#666" stroke-width="10" fill="none"/><rect x="65" y="93" width="82" height="82" fill="#fff" stroke="#666" stroke-width="10"/><rect x="335" y="88" width="90" height="90" fill="#6ab0e4" stroke="#5aa3dc" stroke-width="3"/><rect x="60" y="362" width="90" height="90" fill="#6ab0e4" stroke="#5aa3dc" stroke-width="3"/><rect x="335" y="362" width="90" height="90" fill="#6ab0e4" stroke="#5aa3dc" stroke-width="3"/><path d="M735,92 L840,92 L1010,262 L1010,385 L925,470 L705,470 Q625,470 625,392 L625,215 Q625,150 670,115 Q700,92 735,92 Z" fill="#dcc4f7" stroke="#9c72d2" stroke-width="7"/><path d="M690,108 L835,108 L885,160 L700,160 Q660,160 650,200 Q650,130 690,108Z" fill="#c99cfb"/><rect x="650" y="205" width="240" height="240" rx="45" fill="#aa80e8"/><path d="M925,262 L1010,268 L1010,385 L965,430 Q925,420 925,380 Z" fill="#8d63cd"/><path d="M757,125 V465 M632,300 Q760,345 925,320 M965,275 V420" stroke="#8a62c4" stroke-width="7" fill="none" opacity=".8"/><polygon points="925,62 942.603,127.502 1001.37,93.6325 967.498,152.397 1033,170 967.498,187.603 1001.37,246.368 942.603,212.498 925,278 907.397,212.498 848.632,246.368 882.502,187.603 817,170 882.502,152.397 848.632,93.6325 907.397,127.502" fill="#ffa800" stroke="#fff" stroke-width="9" stroke-linejoin="round"/><polygon points="925,66 941.838,129.349 998.539,96.4609 965.651,153.162 1029,170 965.651,186.838 998.539,243.539 941.838,210.651 925,274 908.162,210.651 851.461,243.539 884.349,186.838 821,170 884.349,153.162 851.461,96.4609 908.162,129.349" fill="#ffa800" stroke="#e89400" stroke-width="3" stroke-linejoin="round"/><path d="M1862,150 L1940,85 Q1950,190 2060,190 Q2130,190 2150,150 L2215,205 Q2110,215 2075,290 Q2060,330 2100,395 L1968,395 Q2010,330 1990,270 Q1960,170 1862,150 Z" fill="#5eaae3" stroke="#4a94cf" stroke-width="6"/><polygon points="2005,228 2085,228 2040,305" fill="#f2f2f2" stroke="#4a94cf" stroke-width="5" stroke-linejoin="round"/><rect x="1850" y="67" width="78" height="78" fill="#fff" stroke="#5a5a5a" stroke-width="11"/><polygon points="2145,135 2200,97 2252,172 2185,205" fill="#fff" stroke="#5a5a5a" stroke-width="11"/><circle cx="2035" cy="408" r="52" fill="#fff" stroke="#5a5a5a" stroke-width="12"/><circle cx="2035" cy="408" r="19" fill="#fff" stroke="#5a5a5a" stroke-width="10"/></svg>
<svg style="left:940px;top:40px;width:320px;height:70px" viewBox="0 0 2380 521"><polygon points="108,145 185,68 262,68 190,145" fill="#f6f6f6"/><polygon points="108,145 195,145 195,470 108,470" fill="#dcdcdc"/><path d="M185,470 H108 V145 L185,68 H250" fill="none" stroke="#686868" stroke-width="9"/><polygon points="200,140 275,65 392,65 315,140" fill="#8ecbfa"/><polygon points="315,140 392,65 392,395 315,470" fill="#4a96d0"/><polygon points="200,140 315,140 315,470 200,470" fill="#6ab0e4"/><rect x="352" y="243" width="45" height="40" fill="#fff"/><path d="M365,263 H445" stroke="#2b2b2b" stroke-width="11"/><polygon points="432,230 488,263 432,297" fill="#2b2b2b"/><path d="M658,160 L752,68 L880,68 L812,152 Z" fill="#f6f6f6"/><path d="M968,340 L1068,250 L1068,375 L968,470 Z" fill="#b9b9b9"/><path d="M658,160 L810,160 Q960,175 968,335 L968,470 L658,470 Z" fill="#dcdcdc"/><path d="M870,68 H752 L658,160 V470 H968 L1068,375 V262" fill="none" stroke="#686868" stroke-width="9" stroke-linejoin="miter"/><path d="M810,152 L885,65 Q1045,100 1068,245 L985,325 Q960,170 810,152 Z" fill="#6ab0e4" stroke="#f2f2f2" stroke-width="5"/><polygon points="1215,160 1312,65 1625,65 1527,160" fill="#f6f6f6" stroke="#686868" stroke-width="9" stroke-linejoin="round"/><polygon points="1527,160 1625,65 1625,375 1527,470" fill="#b9b9b9" stroke="#686868" stroke-width="9" stroke-linejoin="round"/><polygon points="1215,160 1527,160 1527,470 1215,470" fill="#dcdcdc" stroke="#686868" stroke-width="9" stroke-linejoin="round"/><polygon points="1250,198 1490,198 1490,438 1250,438" fill="#f0f0f0"/><polygon points="1265,215 1370,215 1370,322 1265,425" fill="#4a96d0"/><polygon points="1265,425 1370,322 1473,322 1473,425" fill="#8ecbfa"/><polygon points="1905,115 1958,62 2188,62 2135,115" fill="#8ecbfa"/><polygon points="2135,115 2188,62 2188,292 2135,345" fill="#4a96d0"/><polygon points="1905,115 2135,115 2135,345 1905,345" fill="#6ab0e4"/><polygon points="1772,245 1825,192 1905,192 1905,245" fill="#8ecbfa"/><polygon points="2005,350 2060,350 2060,420 2005,475" fill="#4a96d0"/><polygon points="1772,245 1905,245 1905,345 2005,345 2005,475 1772,475" fill="#6ab0e4"/></svg>
<svg style="left:1240px;top:40px;width:380px;height:70px" viewBox="0 0 2380 438"><polygon points="348,283 412,228 412,325 348,385" fill="#b9b9b9" stroke="#686868" stroke-width="7" stroke-linejoin="round"/><polygon points="108,283 348,283 348,385 108,385" fill="#dcdcdc" stroke="#686868" stroke-width="7" stroke-linejoin="round"/><path d="M85,255 H350 L435,170" fill="none" stroke="#f6f6f6" stroke-width="26"/><polygon points="108,120 174,54 414,54 348,120" fill="#8ecbfa"/><polygon points="348,120 414,54 414,159 348,225" fill="#4a96d0"/><polygon points="108,120 348,120 348,225 108,225" fill="#6ab0e4"/><path d="M85,255 H350 L435,170" fill="none" stroke="#2196f3" stroke-width="8"/><path d="M730,110 V340 M620,225 H845" stroke="#303030" stroke-width="22"/><polygon points="678,137 784,137 731,52" fill="#303030"/><polygon points="678,313 784,313 731,400" fill="#303030"/><polygon points="645,172 645,278 558,225" fill="#303030"/><polygon points="820,172 820,278 906,225" fill="#303030"/><polygon points="1518,268 1560,228 1685,228 1645,268" fill="#f6f6f6" stroke="#686868" stroke-width="7" stroke-linejoin="round"/><polygon points="1645,268 1685,228 1685,355 1645,398" fill="#b9b9b9" stroke="#686868" stroke-width="7" stroke-linejoin="round"/><polygon points="1380,268 1512,268 1512,398 1380,398" fill="#dcdcdc" stroke="#686868" stroke-width="7" stroke-linejoin="round"/><polygon points="1518,268 1645,268 1645,398 1518,398" fill="#dcdcdc" stroke="#686868" stroke-width="7" stroke-linejoin="round"/><polygon points="1380,140 1425,95 1555,95 1510,140" fill="#8ecbfa"/><polygon points="1510,140 1555,95 1555,220 1510,265" fill="#4a96d0"/><polygon points="1380,140 1510,140 1510,265 1380,265" fill="#6ab0e4"/><polygon points="1635,51 1649.54,107.893 1700.05,77.9462 1670.11,128.458 1727,143 1670.11,157.542 1700.05,208.054 1649.54,178.107 1635,235 1620.46,178.107 1569.95,208.054 1599.89,157.542 1543,143 1599.89,128.458 1569.95,77.9462 1620.46,107.893" fill="#ffa800" stroke="#f2f2f2" stroke-width="8" stroke-linejoin="round"/><polygon points="1635,55 1648.78,109.74 1697.23,80.7746 1668.26,129.223 1723,143 1668.26,156.777 1697.23,205.225 1648.78,176.26 1635,231 1621.22,176.26 1572.77,205.225 1601.74,156.777 1547,143 1601.74,129.223 1572.77,80.7746 1621.22,109.74" fill="#ffa800" stroke="#e89400" stroke-width="3" stroke-linejoin="round"/><path d="M1875,160 L1950,92 L1950,300 L1875,368 Z" fill="#c6c6c6" stroke="#686868" stroke-width="7" stroke-linejoin="round"/><rect x="1945" y="78" width="65" height="130" rx="30" fill="#e4e4e4" stroke="#686868" stroke-width="7"/><ellipse cx="1977" cy="97" rx="15" ry="8" fill="#777"/><path d="M2100,105 L2175,165 L2175,375 L2100,312 Z" fill="#dedede" stroke="#686868" stroke-width="7" stroke-linejoin="round"/><rect x="2040" y="178" width="62" height="128" rx="28" fill="#cacaca" stroke="#686868" stroke-width="7"/><path d="M1975,218 V268 M2073,140 V200" stroke="#2196f3" stroke-width="8"/></svg>
<svg style="left:1700px;top:40px;width:620px;height:70px" viewBox="0 0 2380 269"><polygon points="115,95 168,95 168,238 115,238" fill="#dcdcdc"/><polygon points="115,95 175,35 228,35 168,95" fill="#f6f6f6"/><path d="M168,238 H115 V95 L175,35 H225" fill="none" stroke="#686868" stroke-width="5"/><polygon points="175,95 235,35 235,178 175,238" fill="#5bc47f" stroke="#4fb873" stroke-width="2" stroke-linejoin="round"/><polygon points="255,95 315,35 315,178 255,238" fill="#e59a66" stroke="#d98c58" stroke-width="2" stroke-linejoin="round"/><rect x="799" y="153" width="188" height="38" fill="#ffa800" stroke="#e89a00" stroke-width="3"/><path d="M815,153 v16" stroke="#7a5a10" stroke-width="4"/><path d="M835,153 v10" stroke="#7a5a10" stroke-width="4"/><path d="M855,153 v16" stroke="#7a5a10" stroke-width="4"/><path d="M875,153 v10" stroke="#7a5a10" stroke-width="4"/><path d="M895,153 v16" stroke="#7a5a10" stroke-width="4"/><path d="M915,153 v10" stroke="#7a5a10" stroke-width="4"/><path d="M935,153 v16" stroke="#7a5a10" stroke-width="4"/><path d="M955,153 v10" stroke="#7a5a10" stroke-width="4"/><path d="M975,153 v16" stroke="#7a5a10" stroke-width="4"/><path d="M801,85 V145 M985,85 V145 M815,115 H972" stroke="#666" stroke-width="5"/><polygon points="806,115 832,101 832,129" fill="#666"/><polygon points="980,115 954,101 954,129" fill="#666"/><rect x="1378" y="40" width="188" height="192" fill="#86cbfb" stroke="#4d9fda" stroke-width="4"/><circle cx="1513" cy="92" r="21" fill="#fffbd0" stroke="#a8d8f8" stroke-width="3"/><path d="M1380,230 V150 Q1432,92 1470,150 Q1488,188 1500,185 Q1532,138 1564,190 V230 Z" fill="#3f93cd"/><rect x="2033" y="35" width="184" height="143" fill="none" stroke="#2bb24c" stroke-width="5" stroke-dasharray="17 9"/><path d="M2176,130 L2176,226 L2198,206 L2213,243 L2231,235 L2215,199 L2243,197 Z" fill="#fff" stroke="#2b2b2b" stroke-width="5" stroke-linejoin="miter"/></svg>
</div>
<svg width="0" height="0" style="left:0;top:0"><defs><linearGradient id="gcyl" x1="0" x2="1" y1="0" y2="0"><stop offset="0" stop-color="#fdfdfd"/><stop offset=".45" stop-color="#d9d9dd"/><stop offset="1" stop-color="#f6f6f6"/></linearGradient><linearGradient id="gcomp" x1="0" x2="1" y1="0" y2="1"><stop offset="0" stop-color="#f4f5f8"/><stop offset="1" stop-color="#bfc3cc"/></linearGradient><radialGradient id="grad" cx=".5" cy=".4" r=".6"><stop offset="0" stop-color="#fff"/><stop offset=".7" stop-color="#e4e4e8"/><stop offset="1" stop-color="#9a9aa0"/></radialGradient><symbol id="eye" viewBox="0 0 28 18"><path d="M0,9 Q14,-7.5 28,9 Q14,25.5 0,9Z" fill="#9b9b9b"/><circle cx="14" cy="9" r="4.6" fill="#9b9b9b" stroke="#f4f4f4" stroke-width="2"/></symbol><symbol id="eyeoff" viewBox="0 0 28 19"><g fill="none" stroke="#9b9b9b" stroke-width="1.9"><path d="M1.2,10 Q14,-4 26.8,10 Q14,23.5 1.2,10Z"/><path d="M10.5,6.5 A5.6,5.6 0 0 0 14.8,15.4 M18.6,13 A5.6,5.6 0 0 0 14.5,4.6"/><path d="M12.7,9.5 A2.6,2.6 0 0 1 15.8,7.8" stroke-width="1.5"/><path d="M5.5,0.5 L22.6,18.6" stroke-width="2"/></g></symbol><symbol id="folder" viewBox="0 0 28 22.5"><path d="M0,0 H11.6 Q12.6,0.2 12.2,1.2 L10.2,3.4 H0Z M0,5.1 H10.6 L14,1.6 H28 V22.5 H0Z" fill="#9b9b9b"/></symbol><symbol id="body" viewBox="0 0 26.4 24"><path d="M1,4.8 V18.6 Q1,23 13.2,23 Q25.4,23 25.4,18.6 V4.8 Q25.4,1 13.2,1 Q1,1 1,4.8Z" fill="url(#gcyl)" stroke="#55585e" stroke-width="1.7"/><path d="M1.6,5 Q2,8.6 13.2,8.6 Q24.4,8.6 24.8,5 Q24,1.8 13.2,1.8 Q2.4,1.8 1.6,5Z" fill="#fbfbfb"/></symbol><symbol id="sketch" viewBox="0 0 27.3 27.3"><g fill="none" stroke="#8a8a8a" stroke-width="1.2"><path d="M1.4,1.4 H24.3 M1.4,1.4 V24.5 M24.3,1.4 V13 M1.4,24.5 H14.5"/><path d="M7.2,7.4 H18.3 M7.2,7.4 V18.5 M18.3,7.4 Q17.5,17 7.2,18.5"/></g><rect x="0.0" y="0.0" width="2.8" height="2.8" fill="#2196f3"/><rect x="22.9" y="0.0" width="2.8" height="2.8" fill="#2196f3"/><rect x="0.0" y="23.1" width="2.8" height="2.8" fill="#2196f3"/><rect x="5.8" y="6.0" width="2.8" height="2.8" fill="#2196f3"/><rect x="16.9" y="6.0" width="2.8" height="2.8" fill="#2196f3"/><rect x="5.8" y="17.1" width="2.8" height="2.8" fill="#2196f3"/><path d="M16.6,22.6 L23.4,15.6 L26.4,18.6 L19.6,25.6Z" fill="#f6b73c"/><path d="M23.4,15.6 Q25.6,13.4 27,15.6 Q28.2,17.4 26.4,18.6Z" fill="#f03a3a"/><path d="M16.6,22.6 L19.6,25.6 L14.4,27.4Z" fill="#555"/></symbol><symbol id="gear" viewBox="0 0 28 28"><path d="M23.92,11.62 L27.79,11.59 L27.79,16.41 L23.92,16.38 L22.70,19.33 L25.45,22.05 L22.05,25.45 L19.33,22.70 L16.38,23.92 L16.41,27.79 L11.59,27.79 L11.62,23.92 L8.67,22.70 L5.95,25.45 L2.55,22.05 L5.30,19.33 L4.08,16.38 L0.21,16.41 L0.21,11.59 L4.08,11.62 L5.30,8.67 L2.55,5.95 L5.95,2.55 L8.67,5.30 L11.62,4.08 L11.59,0.21 L16.41,0.21 L16.38,4.08 L19.33,5.30 L22.05,2.55 L25.45,5.95 L22.70,8.67Z M9.40,14.00 a4.60,4.60 0 1 0 9.20,0 a4.60,4.60 0 1 0 -9.20,0Z" fill="#9b9b9b" fill-rule="evenodd"/></symbol><symbol id="arrc" viewBox="0 0 11 16"><path d="M1,1 L3.5,1 L10,8 L3.5,15 L1,15Z" fill="#fff" stroke="#111" stroke-width="1.6" stroke-linejoin="round"/></symbol><symbol id="arre" viewBox="0 0 12.5 11.5"><defs><linearGradient id="garr" x1="0" x2="1" y1="1" y2="0"><stop offset="0" stop-color="#222"/><stop offset="1" stop-color="#aaa"/></linearGradient></defs><path d="M1,10.6 L11.6,1 V10.6Z" fill="url(#garr)" stroke="#111" stroke-width="1.6" stroke-linejoin="round"/></symbol></defs></svg>
<div class="panelhdr" style="left:11px;top:156px;width:525px;height:43.5px"><div class="abs" style="left:41.5px;top:9px;line-height:24px;letter-spacing:.45px">BROWSER</div><svg style="left:8px;top:15px;width:20px;height:12px" viewBox="0 0 20 12"><path d="M0,6 L9,0.5 V11.5Z M9.5,6 L18.5,0.5 V11.5Z" fill="#3a3a3a"/></svg><svg style="left:487px;top:12px;width:17px;height:17px" viewBox="0 0 17 17"><circle cx="8.5" cy="8.5" r="8" fill="#2e2e2e"/><rect x="3.6" y="7.2" width="9.8" height="2.6" fill="#fff"/></svg></div>
<div class="abs" style="left:18px;top:209px;width:11px;height:1672px;background:#c9cacc"></div>
<div class="abs" style="left:18px;top:209px;width:11px;height:396px;background:linear-gradient(90deg,#8d8d8f,#a3a3a5 30%,#a3a3a5 70%,#8d8d8f);border-radius:5px 5px 5px 5px"></div>
<div class="row" style="left:74px;top:208.6px;width:296px"></div>
<svg style="left:43.2px;top:220.3px;width:12.5px;height:11.5px"><use href="#arre"/></svg>
<svg style="left:79.2px;top:216.8px;width:28px;height:18px"><use href="#eye"/></svg>
<div class="abs" style="left:118px;top:212.2px;width:164px;height:27.6px;background:#999"></div>
<div class="abs" style="left:160.8px;top:212.2px;width:1.2px;height:27.6px;background:#aaa"></div>
<svg style="left:124.5px;top:213.4px;width:24.5px;height:24.5px" viewBox="0 0 24.5 24.5"><path d="M1,3.2 L4,0.8 H11.5 V23.6 H1Z" fill="url(#gcomp)" stroke="#6f737b" stroke-width="1.2"/><path d="M11.5,13 L14.5,10.6 H23.6 V21 L21,23.6 H11.5Z" fill="url(#gcomp)" stroke="#6f737b" stroke-width="1.2"/><path d="M1,14 H11 M8.8,3.2 V23.5 M1,3.2 H8.8 L11.5,0.8 M11.5,13 H21 V23.6 M21,13 L23.6,10.6" fill="none" stroke="#aeb2ba" stroke-width="1"/></svg>
<div class="abs" style="left:176px;top:211.8px;height:28px;line-height:28px;font-weight:bold;font-size:18.8px;color:#fff">Kanu v17</div>
<svg style="left:288px;top:213.7px;width:25px;height:25px" viewBox="0 0 25 25"><circle cx="12" cy="12" r="11.8" fill="#e8c94c"/><text x="6.6" y="18.3" font-size="17" font-weight="bold" fill="#fff">F</text><circle cx="19.3" cy="20.4" r="3.6" fill="#fff" stroke="#333" stroke-width="1.2"/></svg>
<svg style="left:333.6px;top:213.3px;width:24px;height:24px" viewBox="0 0 24 24"><circle cx="12" cy="12" r="11.2" fill="url(#grad)" stroke="#77777c" stroke-width="1.4"/><circle cx="12" cy="12" r="4.8" fill="#3c3c40"/></svg>
<div class="row" style="left:105.5px;top:250.6px;padding-left:56.7px;padding-right:18.5px"><span class="t" style="position:static">Dokumenteinstellungen</span></div>
<svg style="left:74.9px;top:260.0px;width:11px;height:16px"><use href="#arrc"/></svg>
<svg style="left:110.7px;top:254.2px;width:28px;height:28px"><use href="#gear"/></svg>
<div class="row" style="left:105.5px;top:292.7px;padding-left:56.7px;padding-right:18.5px"><span class="t" style="position:static">Benannte Ansichten</span></div>
<svg style="left:74.9px;top:302.1px;width:11px;height:16px"><use href="#arrc"/></svg>
<svg style="left:110.5px;top:298.7px;width:28px;height:22.5px"><use href="#folder"/></svg>
<div class="row" style="left:105.5px;top:334.7px;padding-left:56.7px;padding-right:18.5px"><span class="t" style="position:static">Auswahlsätze</span></div>
<svg style="left:74.9px;top:344.1px;width:11px;height:16px"><use href="#arrc"/></svg>
<svg style="left:110.5px;top:340.7px;width:28px;height:22.5px"><use href="#folder"/></svg>
<div class="row" style="left:105.5px;top:376.7px;padding-left:100.2px;padding-right:18.5px"><span class="t" style="position:static">Ursprung</span></div>
<svg style="left:74.9px;top:386.1px;width:11px;height:16px"><use href="#arrc"/></svg>
<svg style="left:110.9px;top:384.7px;width:28px;height:19px"><use href="#eyeoff"/></svg>
<svg style="left:154.0px;top:382.7px;width:28px;height:22.5px"><use href="#folder"/></svg>
<div class="row" style="left:105.5px;top:418.8px;padding-left:100.2px;padding-right:18.5px"><span class="t" style="position:static">Analyse</span></div>
<svg style="left:74.9px;top:428.1px;width:11px;height:16px"><use href="#arrc"/></svg>
<svg style="left:110.9px;top:426.8px;width:28px;height:19px"><use href="#eyeoff"/></svg>
<svg style="left:154.0px;top:424.8px;width:28px;height:22.5px"><use href="#folder"/></svg>
<div class="row" style="left:105.5px;top:460.8px;padding-left:100.2px;padding-right:18.5px"><span class="t" style="position:static">Körper</span></div>
<svg style="left:74.5px;top:472.5px;width:12.5px;height:11.5px"><use href="#arre"/></svg>
<svg style="left:110.7px;top:469.0px;width:28px;height:18px"><use href="#eye"/></svg>
<svg style="left:154.0px;top:466.8px;width:28px;height:22.5px"><use href="#folder"/></svg>
<div class="row" style="left:136.9px;top:502.8px;padding-left:100.2px;padding-right:18.5px"><span class="t" style="position:static">Grundkörper (10)</span></div>
<svg style="left:106.3px;top:512.2px;width:11px;height:16px"><use href="#arrc"/></svg>
<svg style="left:142.3px;top:510.8px;width:28px;height:19px"><use href="#eyeoff"/></svg>
<svg style="left:185.4px;top:508.8px;width:28px;height:22.5px"><use href="#folder"/></svg>
<div class="row" style="left:136.9px;top:544.8px;padding-left:100.2px;padding-right:18.5px"><span class="t" style="position:static">Mitte (4)</span></div>
<svg style="left:106.3px;top:554.2px;width:11px;height:16px"><use href="#arrc"/></svg>
<svg style="left:142.3px;top:552.8px;width:28px;height:19px"><use href="#eyeoff"/></svg>
<svg style="left:185.4px;top:550.8px;width:28px;height:22.5px"><use href="#folder"/></svg>
<div class="row" style="left:136.9px;top:586.9px;padding-left:100.2px;padding-right:18.5px"><span class="t" style="position:static">nebenMitte (4)</span></div>
<svg style="left:106.3px;top:596.3px;width:11px;height:16px"><use href="#arrc"/></svg>
<svg style="left:142.3px;top:594.9px;width:28px;height:19px"><use href="#eyeoff"/></svg>
<svg style="left:185.4px;top:592.9px;width:28px;height:22.5px"><use href="#folder"/></svg>
<div class="row" style="left:136.9px;top:628.9px;padding-left:100.2px;padding-right:18.5px"><span class="t" style="position:static">nebennebenMitte (4)</span></div>
<svg style="left:106.3px;top:638.3px;width:11px;height:16px"><use href="#arrc"/></svg>
<svg style="left:142.3px;top:636.9px;width:28px;height:19px"><use href="#eyeoff"/></svg>
<svg style="left:185.4px;top:634.9px;width:28px;height:22.5px"><use href="#folder"/></svg>
<div class="row" style="left:136.9px;top:670.9px;padding-left:100.2px;padding-right:18.5px"><span class="t" style="position:static">neben außen (4)</span></div>
<svg style="left:106.3px;top:680.3px;width:11px;height:16px"><use href="#arrc"/></svg>
<svg style="left:142.3px;top:678.9px;width:28px;height:19px"><use href="#eyeoff"/></svg>
<svg style="left:185.4px;top:676.9px;width:28px;height:22.5px"><use href="#folder"/></svg>
<div class="row" style="left:136.9px;top:713.0px;padding-left:100.2px;padding-right:18.5px"><span class="t" style="position:static">außen (4)</span></div>
<svg style="left:106.3px;top:722.4px;width:11px;height:16px"><use href="#arrc"/></svg>
<svg style="left:142.3px;top:721.0px;width:28px;height:19px"><use href="#eyeoff"/></svg>
<svg style="left:185.4px;top:719.0px;width:28px;height:22.5px"><use href="#folder"/></svg>
<div class="row" style="left:136.9px;top:755.0px;padding-left:100.2px;padding-right:18.5px"><span class="t" style="position:static">stringers Markup (11)</span></div>
<svg style="left:106.3px;top:764.4px;width:11px;height:16px"><use href="#arrc"/></svg>
<svg style="left:142.3px;top:763.0px;width:28px;height:19px"><use href="#eyeoff"/></svg>
<svg style="left:185.4px;top:761.0px;width:28px;height:22.5px"><use href="#folder"/></svg>
<div class="row" style="left:136.9px;top:797.0px;padding-left:100.2px;padding-right:18.5px"><span class="t" style="position:static">Stringer (9)</span></div>
<svg style="left:142.1px;top:805.2px;width:28px;height:18px"><use href="#eye"/></svg>
<svg style="left:186.1px;top:801.0px;width:26.4px;height:24px"><use href="#body"/></svg>
<div class="row" style="left:136.9px;top:839.1px;padding-left:100.2px;padding-right:18.5px"><span class="t" style="position:static">Stringer (8)</span></div>
<svg style="left:142.1px;top:847.2px;width:28px;height:18px"><use href="#eye"/></svg>
<svg style="left:186.1px;top:843.1px;width:26.4px;height:24px"><use href="#body"/></svg>
<div class="row" style="left:136.9px;top:881.1px;padding-left:100.2px;padding-right:18.5px"><span class="t" style="position:static">Keel</span></div>
<svg style="left:142.1px;top:889.3px;width:28px;height:18px"><use href="#eye"/></svg>
<svg style="left:186.1px;top:885.1px;width:26.4px;height:24px"><use href="#body"/></svg>
<div class="row" style="left:136.9px;top:923.1px;padding-left:100.2px;padding-right:18.5px"><span class="t" style="position:static">Spante5</span></div>
<svg style="left:142.1px;top:931.3px;width:28px;height:18px"><use href="#eye"/></svg>
<svg style="left:186.1px;top:927.1px;width:26.4px;height:24px"><use href="#body"/></svg>
<div class="row" style="left:136.9px;top:965.1px;padding-left:100.2px;padding-right:18.5px"><span class="t" style="position:static">Spante6</span></div>
<svg style="left:142.1px;top:973.3px;width:28px;height:18px"><use href="#eye"/></svg>
<svg style="left:186.1px;top:969.1px;width:26.4px;height:24px"><use href="#body"/></svg>
<div class="row" style="left:136.9px;top:1007.2px;padding-left:100.2px;padding-right:18.5px"><span class="t" style="position:static">Spante7</span></div>
<svg style="left:142.1px;top:1015.4px;width:28px;height:18px"><use href="#eye"/></svg>
<svg style="left:186.1px;top:1011.2px;width:26.4px;height:24px"><use href="#body"/></svg>
<div class="row" style="left:136.9px;top:1049.2px;padding-left:100.2px;padding-right:18.5px"><span class="t" style="position:static">Spante8</span></div>
<svg style="left:142.1px;top:1057.4px;width:28px;height:18px"><use href="#eye"/></svg>
<svg style="left:186.1px;top:1053.2px;width:26.4px;height:24px"><use href="#body"/></svg>
<div class="row" style="left:136.9px;top:1091.2px;padding-left:100.2px;padding-right:18.5px"><span class="t" style="position:static">Bow</span></div>
<svg style="left:142.1px;top:1099.4px;width:28px;height:18px"><use href="#eye"/></svg>
<svg style="left:186.1px;top:1095.2px;width:26.4px;height:24px"><use href="#body"/></svg>
<div class="row" style="left:136.9px;top:1133.3px;padding-left:100.2px;padding-right:18.5px"><span class="t" style="position:static">Stringer (6)</span></div>
<svg style="left:142.1px;top:1141.5px;width:28px;height:18px"><use href="#eye"/></svg>
<svg style="left:186.1px;top:1137.3px;width:26.4px;height:24px"><use href="#body"/></svg>
<div class="row" style="left:136.9px;top:1175.3px;padding-left:100.2px;padding-right:18.5px"><span class="t" style="position:static">Stringer (2)</span></div>
<svg style="left:142.1px;top:1183.5px;width:28px;height:18px"><use href="#eye"/></svg>
<svg style="left:186.1px;top:1179.3px;width:26.4px;height:24px"><use href="#body"/></svg>
<div class="row" style="left:136.9px;top:1217.3px;padding-left:100.2px;padding-right:18.5px"><span class="t" style="position:static">Stringer</span></div>
<svg style="left:142.1px;top:1225.5px;width:28px;height:18px"><use href="#eye"/></svg>
<svg style="left:186.1px;top:1221.3px;width:26.4px;height:24px"><use href="#body"/></svg>
<div class="row" style="left:136.9px;top:1259.3px;padding-left:100.2px;padding-right:18.5px"><span class="t" style="position:static">Stringer (1)</span></div>
<svg style="left:142.1px;top:1267.5px;width:28px;height:18px"><use href="#eye"/></svg>
<svg style="left:186.1px;top:1263.3px;width:26.4px;height:24px"><use href="#body"/></svg>
<div class="row" style="left:136.9px;top:1301.4px;padding-left:100.2px;padding-right:18.5px"><span class="t" style="position:static">Stringer (7)</span></div>
<svg style="left:142.1px;top:1309.6px;width:28px;height:18px"><use href="#eye"/></svg>
<svg style="left:186.1px;top:1305.4px;width:26.4px;height:24px"><use href="#body"/></svg>
<div class="row" style="left:136.9px;top:1343.4px;padding-left:100.2px;padding-right:18.5px"><span class="t" style="position:static">Stringer (3)</span></div>
<svg style="left:142.1px;top:1351.6px;width:28px;height:18px"><use href="#eye"/></svg>
<svg style="left:186.1px;top:1347.4px;width:26.4px;height:24px"><use href="#body"/></svg>
<div class="row" style="left:136.9px;top:1385.4px;padding-left:100.2px;padding-right:18.5px"><span class="t" style="position:static">Stringer (4)</span></div>
<svg style="left:142.1px;top:1393.6px;width:28px;height:18px"><use href="#eye"/></svg>
<svg style="left:186.1px;top:1389.4px;width:26.4px;height:24px"><use href="#body"/></svg>
<div class="row" style="left:136.9px;top:1427.5px;padding-left:100.2px;padding-right:18.5px"><span class="t" style="position:static">Stringer (5)</span></div>
<svg style="left:142.1px;top:1435.7px;width:28px;height:18px"><use href="#eye"/></svg>
<svg style="left:186.1px;top:1431.5px;width:26.4px;height:24px"><use href="#body"/></svg>
<div class="row" style="left:136.9px;top:1469.5px;padding-left:100.2px;padding-right:18.5px"><span class="t" style="position:static">Spante1 (1)</span></div>
<svg style="left:142.1px;top:1477.7px;width:28px;height:18px"><use href="#eye"/></svg>
<svg style="left:186.1px;top:1473.5px;width:26.4px;height:24px"><use href="#body"/></svg>
<div class="row" style="left:136.9px;top:1511.5px;padding-left:100.2px;padding-right:18.5px"><span class="t" style="position:static">Spante2 (1)</span></div>
<svg style="left:142.1px;top:1519.7px;width:28px;height:18px"><use href="#eye"/></svg>
<svg style="left:186.1px;top:1515.5px;width:26.4px;height:24px"><use href="#body"/></svg>
<div class="row" style="left:136.9px;top:1553.6px;padding-left:100.2px;padding-right:18.5px"><span class="t" style="position:static">Spante3  (1)</span></div>
<svg style="left:142.1px;top:1561.8px;width:28px;height:18px"><use href="#eye"/></svg>
<svg style="left:186.1px;top:1557.6px;width:26.4px;height:24px"><use href="#body"/></svg>
<div class="row" style="left:136.9px;top:1595.6px;padding-left:100.2px;padding-right:18.5px"><span class="t" style="position:static">Spante4 (1)</span></div>
<svg style="left:142.1px;top:1603.8px;width:28px;height:18px"><use href="#eye"/></svg>
<svg style="left:186.1px;top:1599.6px;width:26.4px;height:24px"><use href="#body"/></svg>
<div class="row" style="left:136.9px;top:1637.6px;padding-left:100.2px;padding-right:18.5px"><span class="t" style="position:static">Stern</span></div>
<svg style="left:142.1px;top:1645.8px;width:28px;height:18px"><use href="#eye"/></svg>
<svg style="left:186.1px;top:1641.6px;width:26.4px;height:24px"><use href="#body"/></svg>
<div class="row" style="left:136.9px;top:1679.6px;padding-left:100.2px;padding-right:18.5px"><span class="t" style="position:static">Strongback</span></div>
<svg style="left:142.3px;top:1687.6px;width:28px;height:19px"><use href="#eyeoff"/></svg>
<svg style="left:186.1px;top:1683.6px;width:26.4px;height:24px"><use href="#body"/></svg>
<div class="row" style="left:105.5px;top:1721.7px;padding-left:100.2px;padding-right:18.5px"><span class="t" style="position:static">Ansichtsbereiche</span></div>
<svg style="left:74.9px;top:1731.1px;width:11px;height:16px"><use href="#arrc"/></svg>
<svg style="left:110.9px;top:1729.7px;width:28px;height:19px"><use href="#eyeoff"/></svg>
<svg style="left:154.0px;top:1727.7px;width:28px;height:22.5px"><use href="#folder"/></svg>
<div class="row" style="left:105.5px;top:1763.7px;padding-left:100.2px;padding-right:18.5px"><span class="t" style="position:static">Skizzen</span></div>
<svg style="left:74.5px;top:1775.4px;width:12.5px;height:11.5px"><use href="#arre"/></svg>
<svg style="left:110.7px;top:1771.9px;width:28px;height:18px"><use href="#eye"/></svg>
<svg style="left:154.0px;top:1769.7px;width:28px;height:22.5px"><use href="#folder"/></svg>
<div class="row" style="left:136.9px;top:1805.7px;padding-left:100.2px;padding-right:18.5px"><span class="t" style="position:static">Skizze2</span></div>
<svg style="left:142.3px;top:1813.7px;width:28px;height:19px"><use href="#eyeoff"/></svg>
<svg style="left:185.4px;top:1809.2px;width:27.3px;height:27.3px"><use href="#sketch"/></svg>
<div class="row" style="left:136.9px;top:1847.8px;padding-left:100.2px;padding-right:18.5px"><span class="t" style="position:static">Skizze3</span></div>
<svg style="left:142.3px;top:1855.8px;width:28px;height:19px"><use href="#eyeoff"/></svg>
<svg style="left:185.4px;top:1851.3px;width:27.3px;height:27.3px"><use href="#sketch"/></svg>
<div class="panelhdr" style="left:11px;top:1921.5px;width:524.5px;height:43px"><div class="abs" style="left:41.5px;top:9px;line-height:24px;letter-spacing:.3px">KOMMENTARE</div><svg style="left:487px;top:12px;width:17px;height:17px" viewBox="0 0 17 17"><circle cx="8.5" cy="8.5" r="8" fill="#2e2e2e"/><path d="M3.6,8.5 H13.4 M8.5,3.6 V13.4" stroke="#fff" stroke-width="2.2"/></svg></div>
<div class="abs" style="left:3097px;top:366px;width:39px;height:297px;background:#f0f0f0"></div>
<svg style="left:3105px;top:379px;width:20px;height:12px" viewBox="0 0 20 12"><path d="M0,6 L9,0.5 V11.5Z M9.5,6 L18.5,0.5 V11.5Z" fill="#3a3a3a"/></svg>
<div class="abs" style="left:3117px;top:585.5px;width:0;height:0"><div class="abs" style="left:-100px;top:-13px;width:200px;height:26px;line-height:26px;text-align:center;font-size:21px;color:#333;transform:rotate(-90deg) scale(.735,1);white-space:nowrap">DARSTELLUNG</div></div>
<svg style="left:3000px;top:150px;width:141px;height:140px" viewBox="0 0 1566 1555"><defs><radialGradient id="vsh" cx=".5" cy=".5" r=".5"><stop offset="0" stop-color="#000" stop-opacity=".38"/><stop offset=".55" stop-color="#000" stop-opacity=".16"/><stop offset="1" stop-color="#000" stop-opacity="0"/></radialGradient><linearGradient id="vf1" x1="0" x2="0" y1="0" y2="1"><stop offset="0" stop-color="#f2f2f2"/><stop offset="1" stop-color="#dedede"/></linearGradient></defs><ellipse cx="880" cy="1010" rx="560" ry="250" fill="url(#vsh)"/><polygon points="500,455 900,335 1270,480 850,640" fill="#f0f0f0"/><polygon points="500,455 850,640 850,1140 530,900" fill="url(#vf1)"/><polygon points="850,640 1270,480 1250,950 850,1140" fill="url(#vf1)"/><polygon points="780,615 860,570 935,615 930,690 850,730 780,690" fill="#e4e6ee" opacity=".8"/><g fill="none" stroke="#8a8a8e" stroke-width="7" stroke-dasharray="95 45"><path d="M500,455 L900,335 L1270,480 L850,640Z M850,640 V1140 M500,455 L530,900"/></g><g fill="#a4a5ad" font-weight="bold" font-style="italic"><text transform="matrix(.86,-.36,-.04,1,885,925)" font-size="150" textLength="390" lengthAdjust="spacingAndGlyphs">HINTEN</text><text transform="matrix(.74,.52,.03,1,540,745)" font-size="140" textLength="370" lengthAdjust="spacingAndGlyphs">RECHTS</text><text transform="matrix(-.82,.27,-.8,-.36,1030,430)" font-size="120" textLength="330" lengthAdjust="spacingAndGlyphs">OBEN</text></g><path d="M1250,950 L1300,400" stroke="#66f06e" stroke-width="26" fill="none"/><path d="M1250,950 L795,1190" stroke="#f0605e" stroke-width="18" fill="none"/><text x="1258" y="355" font-size="150" fill="#7af082">Y</text><text x="672" y="1292" font-size="165" fill="#f58a8a">X</text></svg>
<div class="abs" style="left:1367px;top:1920px;width:415px;height:42px;background:#f2f2f2"></div><svg style="left:1340px;top:1900px;width:460px;height:90px" viewBox="0 0 2380 466"><defs><linearGradient id="nvg" x1="0" x2="0" y1="0" y2="1"><stop offset="0" stop-color="#fff"/><stop offset="1" stop-color="#9ea3b0"/></linearGradient><linearGradient id="nvb" x1="0" x2="0" y1="0" y2="1"><stop offset="0" stop-color="#9db7dd"/><stop offset="1" stop-color="#7d9dce"/></linearGradient><radialGradient id="nvl" cx=".35" cy=".3" r=".8"><stop offset="0" stop-color="#fff"/><stop offset="1" stop-color="#cfe0e6"/></radialGradient></defs><polygon points="358,197 408,197 383,232" fill="#2b2b2b"/><polygon points="1367,197 1417,197 1392,232" fill="#2b2b2b"/><polygon points="1635,197 1685,197 1660,232" fill="#2b2b2b"/><polygon points="1915,197 1965,197 1940,232" fill="#2b2b2b"/><polygon points="2199,197 2249,197 2224,232" fill="#2b2b2b"/><path d="M222,185 H203 L243,143 L283,185 H264 V270 H222Z" fill="url(#nvg)" stroke="#666a73" stroke-width="7" stroke-linejoin="round"/><path d="M215,200 Q180,208 180,222 Q185,245 243,245 Q305,243 305,222 Q303,207 270,200" fill="none" stroke="#666a73" stroke-width="8"/><polygon points="195,233 215,218 215,248" fill="#666a73"/><path d="M480,190 L515,155 L565,160 L565,190" fill="#cfd2da" stroke="#666a73" stroke-width="7" stroke-linejoin="round"/><rect x="478" y="188" width="124" height="80" fill="#eceef2" stroke="#666a73" stroke-width="7"/><rect x="497" y="208" width="86" height="42" fill="url(#nvb)" stroke="#666a73" stroke-width="5"/><path d="M745,265 Q722,235 708,212 Q705,200 720,203 L745,228 L738,160 Q745,148 756,158 L765,205 L770,150 Q780,138 790,150 L792,205 L806,158 Q818,150 824,162 L815,215 L832,185 Q845,180 845,195 L822,250 Q815,268 800,270 Z" fill="#fff" stroke="#666a73" stroke-width="7" stroke-linejoin="round"/><path d="M1020,228 L1072,262" stroke="#3a3d45" stroke-width="18" stroke-linecap="round"/><circle cx="990" cy="190" r="45" fill="url(#nvl)" stroke="#666a73" stroke-width="9"/><path d="M1050,157 H1078 M1064,143 V171 M1050,185 H1078" stroke="#2b2b2b" stroke-width="6"/><rect x="1178" y="146" width="134" height="130" fill="none" stroke="#777" stroke-width="5" stroke-dasharray="16 9"/><path d="M1255,232 L1305,266" stroke="#3a3d45" stroke-width="18" stroke-linecap="round"/><circle cx="1225" cy="195" r="47" fill="url(#nvl)" stroke="#666a73" stroke-width="9"/><rect x="1478" y="143" width="132" height="105" rx="5" fill="#eef0f4" stroke="#666a73" stroke-width="7"/><rect x="1493" y="157" width="102" height="77" fill="url(#nvb)" stroke="#5570a8" stroke-width="4"/><path d="M1530,250 H1558 V262 H1580 V272 H1508 V262 H1530Z" fill="#d6d9e0" stroke="#666a73" stroke-width="5"/><rect x="1758" y="147" width="129" height="125" fill="url(#nvg)" stroke="#666a73" stroke-width="6"/><path d="M1776,147 V272 M1758,164 H1887 M1794,147 V272 M1758,182 H1887 M1813,147 V272 M1758,200 H1887 M1831,147 V272 M1758,218 H1887 M1850,147 V272 M1758,236 H1887 M1868,147 V272 M1758,254 H1887 " stroke="#666a73" stroke-width="4" fill="none"/><rect x="2040" y="155" width="60" height="52" fill="url(#nvb)" stroke="#5d7fb8" stroke-width="6"/><rect x="2108" y="155" width="60" height="52" fill="url(#nvb)" stroke="#5d7fb8" stroke-width="6"/><rect x="2040" y="215" width="60" height="52" fill="url(#nvb)" stroke="#5d7fb8" stroke-width="6"/><rect x="2108" y="215" width="60" height="52" fill="url(#nvb)" stroke="#5d7fb8" stroke-width="6"/></svg>
<div id="tl">
<div class="abs" style="left:4px;top:-1.5px;width:3137px;height:2px;background:#d4d4d4"></div>
</div>
<svg style="left:0;top:0;width:3141px;height:2052px" viewBox="0 0 3141 2052"><defs><g id="tl_comb"><polygon points="8,4.5 12.5,0 28,0 23.5,4.5" fill="#8ecbfa"/><polygon points="23.5,4.5 28,0 28,13.5 23.5,18" fill="#4a96d0"/><polygon points="8,4.5 23.5,4.5 23.5,18 8,18" fill="#6ab0e4"/><polygon points="0,13.5 4.5,9 8,9 8,13.5" fill="#8ecbfa"/><polygon points="14.5,18 19,18 19,23.5 14.5,28" fill="#4a96d0"/><polygon points="0,13.5 8,13.5 8,18 14.5,18 14.5,28 0,28" fill="#6ab0e4"/></g><g id="tl_mv"><rect x="0.8" y="0.8" width="12.6" height="12" rx="3.2" fill="#dedede" stroke="#666" stroke-width="1.6"/><path d="M2,4.2 Q7,6.4 12.2,4.2" fill="none" stroke="#f4f4f4" stroke-width="1.6"/><path d="M1.6,18.5 V22.6 H9.5 M6.6,20 V25" fill="none" stroke="#222" stroke-width="1.7"/><polygon points="14,17.5 17.4,14.1 27.9,14.1 24.5,17.5" fill="#8ecbfa"/><polygon points="24.5,17.5 27.9,14.1 27.9,24.6 24.5,28" fill="#4a96d0"/><polygon points="14,17.5 24.5,17.5 24.5,28 14,28" fill="#6ab0e4"/></g><g id="tl_split"><polygon points="0.6,17 22,17 22,27.4 0.6,27.4" fill="#dedede" stroke="#555" stroke-width="1.6" stroke-linejoin="round"/><polygon points="22,17 25,14 25,24.4 22,27.4" fill="#b9b9b9" stroke="#555" stroke-width="1.2" stroke-linejoin="round"/><polygon points="0.6,3.6 4.2,0 24.6,0 21,3.6" fill="#8ecbfa"/><polygon points="21,3.6 24.6,0 24.6,9.4 21,13" fill="#4a96d0"/><polygon points="0.6,3.6 21,3.6 21,13 0.6,13" fill="#6ab0e4"/><path d="M-0.5,15.6 H22 L27.4,10" fill="none" stroke="#f2f2f2" stroke-width="4"/><path d="M-0.5,15.6 H22 L27.4,10" fill="none" stroke="#1e88e5" stroke-width="1.8"/></g><g id="tl_ext"><polygon points="0,24.4 16.5,24.4 16.5,28 0,28" fill="#bcbcbc"/><polygon points="16.5,24.4 20.7,20 20.7,23.6 16.5,28" fill="#a8a8a8"/><polygon points="0,3.6 3.9,-0.3 20.4,-0.3 16.5,3.6" fill="#8ecbfa"/><polygon points="16.5,3.6 20.4,-0.3 20.4,18.6 16.5,22.5" fill="#4a96d0"/><polygon points="0,3.6 16.5,3.6 16.5,22.5 0,22.5" fill="#6ab0e4"/><path d="M25,21.8 V2" stroke="#1c1c1c" stroke-width="2"/><path d="M22.6,4.8 L25,0.6 L27.4,4.8" fill="none" stroke="#1c1c1c" stroke-width="1.8"/></g><g id="tl_pl3"><polygon points="8,3.5 20,0.5 27.5,15 18,19.5 9,27.5 2,14" fill="#e2a070"/><polygon points="4,10 17,7.5 21,17 8,22" fill="#ececec"/><polygon points="12,12 20,9 22,18 14,21" fill="#d7b49c"/><path d="M3.4,22.6 H11.4" stroke="#555" stroke-width="1.8"/><path d="M3.6,17 V23" stroke="#555" stroke-width="1.6"/><rect x="2.7" y="10.1" width="3.6" height="3.4" fill="#1eaa46"/><rect x="16.7" y="6.9" width="3.6" height="3.4" fill="#1eaa46"/><rect x="13.4" y="20.9" width="3.6" height="3.4" fill="#1eaa46"/></g><g id="tl_cpl"><polygon points="0.8,9.5 7.5,9.5 7.5,27.2 0.8,27.2" fill="#dedede"/><polygon points="0.8,9.5 9,1 15.5,1 7.5,9.5" fill="#f6f6f6"/><path d="M7.5,27.2 H0.8 V9.5 L9,1 H15" fill="none" stroke="#555" stroke-width="1.5"/><polygon points="8.4,9.5 17,0.6 17,18.6 8.4,27.6" fill="#5bc47f"/><polygon points="19.6,9.5 28,0.6 28,18.6 19.6,27.6" fill="#e59a66"/></g><g id="tl_sk"><path d="M4.5,1.8 H21 M1.8,4.5 V21 M23.6,4.5 V12.5 M4.5,23.6 H13" fill="none" stroke="#4a4a4a" stroke-width="1.7"/><rect x="0" y="0" width="3.6" height="3.6" fill="#1e88e5"/><rect x="21.8" y="0" width="3.6" height="3.6" fill="#1e88e5"/><rect x="0" y="21.8" width="3.6" height="3.6" fill="#1e88e5"/><polygon points="16.2,22.2 22.6,15.6 25.6,18.6 19.2,25.2" fill="#f8c04a"/><path d="M22.6,15.6 Q24.6,13.4 26.6,15 Q28,17 25.6,18.6Z" fill="#f23c3c"/><polygon points="16.2,22.2 19.2,25.2 14.4,27.4" fill="#7a7a7a"/></g><g id="tl_mir"><polygon points="1.2,24.8 10.6,4.5 10.6,24.8" fill="#f2f2f2" stroke="#6a6a6a" stroke-width="1.7" stroke-linejoin="round"/><polygon points="14.2,1.5 14.2,25.6 26,25.6" fill="#5aa4dd"/></g><g id="tl_aln"><circle cx="6.8" cy="6.8" r="6.3" fill="#fff" stroke="#333" stroke-width="1.5"/><rect x="4.4" y="7.4" width="4.6" height="5" fill="#c8c8c8"/><circle cx="20.8" cy="20.8" r="6.3" fill="#fff" stroke="#333" stroke-width="1.5"/><rect x="18.4" y="21.4" width="4.6" height="5" fill="#c8c8c8"/><path d="M1.6,15 V22 H10.5 M7,18.5 V26" fill="none" stroke="#1565c0" stroke-width="1.9"/></g><g id="tl_newc"><polygon points="0.8,9 6.8,3.4 18,3.4 23.6,9 23.6,21 17.5,27.2 0.8,27.2" fill="#dcdcdc" stroke="#666" stroke-width="1.6" stroke-linejoin="round"/><polygon points="17.6,15 23.2,15 23.2,21 17.6,26.6" fill="#b8b8b8"/><polygon points="20.2,-0.4 21.19,4.8 25.57,1.83 22.6,6.21 27.8,7.2 22.6,8.19 25.57,12.57 21.19,9.6 20.2,14.8 19.21,9.6 14.83,12.57 17.8,8.19 12.6,7.2 17.8,6.21 14.83,1.83 19.21,4.8" fill="#ffa814"/></g><g id="tl_flg"><rect x="0.8" y="0.8" width="10.8" height="26.4" fill="#f6f6f6" stroke="#555" stroke-width="1.6"/><rect x="11.8" y="0.6" width="16" height="11.2" fill="#6ab0e4" stroke="#4a96d0" stroke-width="1"/></g><g id="tl_cp"><polygon points="0.6,5 5,0.6 15,0.6 15,9 10.4,14 0.6,14" fill="#e8e8e8" stroke="#c8c8c8" stroke-width="0.8" stroke-linejoin="round"/><polygon points="10.4,5 15,0.6 15,9 10.4,14" fill="#d4d4d4"/><path d="M1.6,16 V21.4 H11 M7.4,17.6 V25.4" fill="none" stroke="#f01818" stroke-width="1.9"/><polygon points="12.4,18 18,12.6 27.4,12.6 27.4,21.6 21.6,27.4 12.4,27.4" fill="#e0e0e0" stroke="#333" stroke-width="1.7" stroke-linejoin="round"/><polygon points="21.8,18.4 26.6,13.6 26.6,21.4 21.8,26.4" fill="#a8a8a8"/></g><g id="tl_ch"><defs><linearGradient id="tlch" x1="0" x2="0" y1="0" y2="1"><stop offset="0" stop-color="#e8eaf0"/><stop offset="1" stop-color="#9aa0b2"/></linearGradient></defs><polygon points="0.8,7.6 6.4,0.8 19.6,0.8 27.2,8.4 27.2,20 21,27.2 0.8,27.2" fill="#eef0f4" stroke="#3c3c3c" stroke-width="1.7" stroke-linejoin="round"/><path d="M2.4,8.6 H14 L20.6,15.4 V25.6 H2.4Z" fill="url(#tlch)"/><polygon points="14.6,6.6 18.4,2.8 24.6,9.4 21.6,13.6" fill="#a6acbc"/><polygon points="21.8,15.6 25.6,11 25.6,20 21.8,24.6" fill="#5e6a80"/></g></defs><g fill="#48484a"><rect x="22.7" y="2010.4" width="4" height="25.4"/><polygon points="44.4,2010.4 44.4,2035.8 27,2023.1"/><polygon points="82,2012 82,2034.4 65.4,2023.2"/><rect x="84.6" y="2017.4" width="3.4" height="11.6"/><polygon points="111,2009.6 111,2036.6 131.4,2023.1"/><rect x="152.5" y="2017.4" width="3.4" height="11.6"/><polygon points="158.5,2012 158.5,2034.4 175.2,2023.2"/><polygon points="198,2010.4 198,2035.8 215.4,2023.1"/><rect x="215.2" y="2010.4" width="4" height="25.4"/></g><path d="M244,2044.2 H3002.8" stroke="#c9c9c9" stroke-width="2.4" stroke-dasharray="5 3 5 3 3000"/><path d="M274.8,2034 V2044 M316.8,2034 V2044 M358.7,2034 V2044 M400.7,2034 V2044 M442.6,2034 V2044 M484.6,2034 V2044 M526.5,2034 V2044 M568.5,2034 V2044 M610.4,2034 V2044 M652.4,2034 V2044 M694.3,2034 V2044 M736.2,2034 V2044 M778.2,2034 V2044 M820.2,2034 V2044 M862.1,2034 V2044 M904.0,2034 V2044 M946.0,2034 V2044 M988.0,2034 V2044 M1029.9,2034 V2044 M1071.9,2034 V2044 M1113.8,2034 V2044 M1155.8,2034 V2044 M1197.7,2034 V2044 M1239.7,2034 V2044 M1281.6,2034 V2044 M1323.5,2034 V2044 M1365.5,2034 V2044 M1407.5,2034 V2044 M1449.4,2034 V2044 M1491.4,2034 V2044 M1533.3,2034 V2044 M1575.2,2034 V2044 M1617.2,2034 V2044 M1659.2,2034 V2044 M1701.1,2034 V2044 M1743.0,2034 V2044 M1785.0,2034 V2044 M1827.0,2034 V2044 M1868.9,2034 V2044 M1910.9,2034 V2044 M1952.8,2034 V2044 M1994.8,2034 V2044 M2036.7,2034 V2044 M2078.7,2034 V2044 M2120.6,2034 V2044 M2162.6,2034 V2044 M2204.5,2034 V2044 M2246.5,2034 V2044 M2288.4,2034 V2044 M2330.4,2034 V2044 M2372.3,2034 V2044 M2414.3,2034 V2044 M2456.2,2034 V2044 M2498.2,2034 V2044 M2540.1,2034 V2044 M2582.1,2034 V2044 M2624.0,2034 V2044 M2666.0,2034 V2044 M2707.9,2034 V2044 M2749.9,2034 V2044 M2791.8,2034 V2044 M2833.8,2034 V2044 M2875.7,2034 V2044 M2917.7,2034 V2044 M2959.6,2034 V2044 M3001.6,2034 V2044 " stroke="#c9c9c9" stroke-width="2.6" fill="none"/><use href="#tl_comb" x="259.8" y="2001.0"/><use href="#tl_comb" x="301.8" y="2001.0"/><use href="#tl_comb" x="343.7" y="2001.0"/><use href="#tl_comb" x="385.7" y="2001.0"/><use href="#tl_comb" x="427.6" y="2001.0"/><use href="#tl_comb" x="469.6" y="2001.0"/><use href="#tl_comb" x="511.5" y="2001.0"/><use href="#tl_comb" x="553.5" y="2001.0"/><use href="#tl_comb" x="595.4" y="2001.0"/><use href="#tl_comb" x="637.4" y="2001.0"/><use href="#tl_comb" x="679.3" y="2001.0"/><use href="#tl_comb" x="721.2" y="2001.0"/><use href="#tl_comb" x="763.2" y="2001.0"/><use href="#tl_comb" x="805.2" y="2001.0"/><use href="#tl_comb" x="847.1" y="2001.0"/><use href="#tl_mv" x="889.0" y="2001.0"/><use href="#tl_split" x="931.0" y="2001.0"/><use href="#tl_mv" x="973.0" y="2001.0"/><use href="#tl_mv" x="1014.9" y="2001.0"/><use href="#tl_mv" x="1056.9" y="2001.0"/><use href="#tl_mv" x="1098.8" y="2001.0"/><use href="#tl_ext" x="1140.8" y="2001.0"/><use href="#tl_ext" x="1182.7" y="2001.0"/><use href="#tl_ext" x="1224.7" y="2001.0"/><use href="#tl_pl3" x="1266.6" y="2001.0"/><use href="#tl_cpl" x="1308.5" y="2001.0"/><use href="#tl_pl3" x="1350.5" y="2001.0"/><use href="#tl_sk" x="1392.5" y="2001.0"/><use href="#tl_sk" x="1434.4" y="2001.0"/><use href="#tl_ext" x="1476.4" y="2001.0"/><use href="#tl_mir" x="1518.3" y="2001.0"/><use href="#tl_sk" x="1560.2" y="2001.0"/><use href="#tl_sk" x="1602.2" y="2001.0"/><use href="#tl_aln" x="1644.2" y="2001.0"/><use href="#tl_newc" x="1686.1" y="2001.0"/><use href="#tl_flg" x="1728.0" y="2001.0"/><use href="#tl_cp" x="1770.0" y="2001.0"/><use href="#tl_cp" x="1812.0" y="2001.0"/><use href="#tl_cp" x="1853.9" y="2001.0"/><use href="#tl_cp" x="1895.9" y="2001.0"/><use href="#tl_cp" x="1937.8" y="2001.0"/><use href="#tl_newc" x="1979.8" y="2001.0"/><use href="#tl_newc" x="2021.7" y="2001.0"/><use href="#tl_ch" x="2063.7" y="2001.0"/><use href="#tl_newc" x="2105.6" y="2001.0"/><use href="#tl_ch" x="2147.6" y="2001.0"/><use href="#tl_newc" x="2189.5" y="2001.0"/><use href="#tl_ch" x="2231.5" y="2001.0"/><use href="#tl_newc" x="2273.4" y="2001.0"/><use href="#tl_ch" x="2315.4" y="2001.0"/><use href="#tl_newc" x="2357.3" y="2001.0"/><use href="#tl_ch" x="2399.3" y="2001.0"/><use href="#tl_ext" x="2441.2" y="2001.0"/><use href="#tl_ext" x="2483.2" y="2001.0"/><use href="#tl_ext" x="2525.1" y="2001.0"/><use href="#tl_flg" x="2567.1" y="2001.0"/><use href="#tl_cpl" x="2609.0" y="2001.0"/><use href="#tl_sk" x="2651.0" y="2001.0"/><use href="#tl_ext" x="2692.9" y="2001.0"/><use href="#tl_ext" x="2734.9" y="2001.0"/><use href="#tl_mir" x="2776.8" y="2001.0"/><use href="#tl_cpl" x="2818.8" y="2001.0"/><use href="#tl_sk" x="2860.7" y="2001.0"/><use href="#tl_ext" x="2902.7" y="2001.0"/><use href="#tl_sk" x="2944.6" y="2001.0"/><use href="#tl_ext" x="2986.6" y="2001.0"/><rect x="2794" y="1974.6" width="338" height="10" rx="5" fill="#c8c8c8"/><path d="M3012.6,1990 H3034 V1996 L3024.6,2003 V2045.6 H3021.8 V2003 L3012.6,1996Z" fill="#58585a"/><path d="M3115.72,2020.22 L3119.79,2020.16 L3119.79,2025.04 L3115.72,2024.98 L3114.50,2027.93 L3117.42,2030.77 L3113.97,2034.22 L3111.13,2031.30 L3108.18,2032.52 L3108.24,2036.59 L3103.36,2036.59 L3103.42,2032.52 L3100.47,2031.30 L3097.63,2034.22 L3094.18,2030.77 L3097.10,2027.93 L3095.88,2024.98 L3091.81,2025.04 L3091.81,2020.16 L3095.88,2020.22 L3097.10,2017.27 L3094.18,2014.43 L3097.63,2010.98 L3100.47,2013.90 L3103.42,2012.68 L3103.36,2008.61 L3108.24,2008.61 L3108.18,2012.68 L3111.13,2013.90 L3113.97,2010.98 L3117.42,2014.43 L3114.50,2017.27Z M3101.00,2022.60 a4.80,4.80 0 1 0 9.60,0 a4.80,4.80 0 1 0 -9.60,0Z" fill="#9b9b9b" fill-rule="evenodd"/></svg>
</body></html>
